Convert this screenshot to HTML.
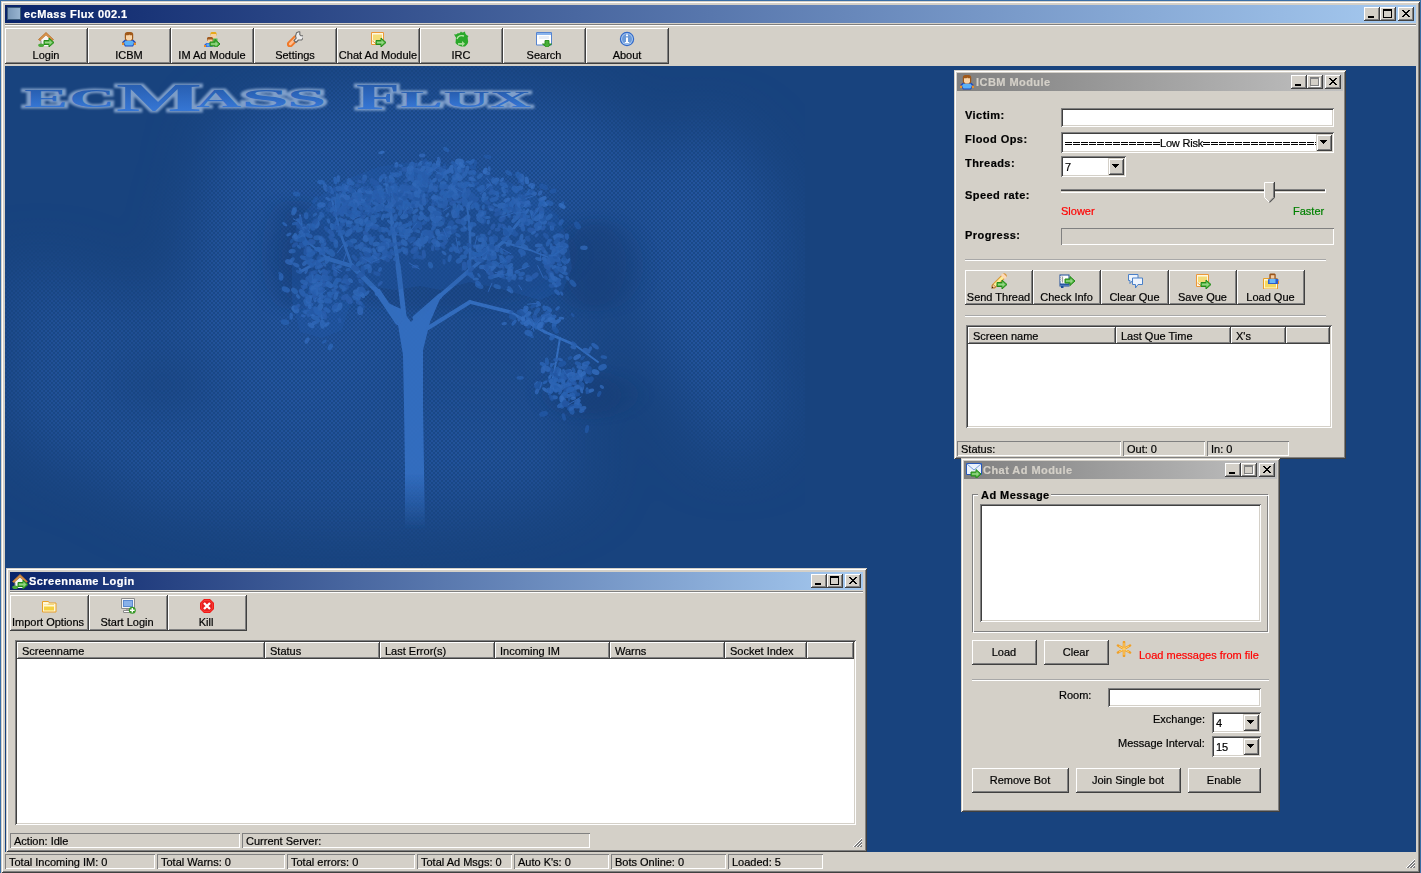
<!DOCTYPE html>
<html><head><meta charset="utf-8"><title>ecMass Flux 002.1</title>
<style>
html,body{margin:0;padding:0}
body{width:1421px;height:873px;overflow:hidden;position:relative;background:#3a6ea5;font-family:"Liberation Sans",sans-serif}
.a{position:absolute;box-sizing:border-box}
.t{position:absolute;font-size:11px;line-height:13px;white-space:nowrap;font-family:"Liberation Sans",sans-serif;will-change:transform;-webkit-text-stroke-width:0.2px}
.fr{background:#d4d0c8;box-shadow:inset 1px 1px #d4d0c8,inset -1px -1px #404040,inset 2px 2px #fff,inset -2px -2px #808080}
.rz{background:#d4d0c8;box-shadow:inset -1px -1px #404040,inset 1px 1px #fff,inset -2px -2px #808080}
.sk{background:#fff;box-shadow:inset 1px 1px #808080,inset -1px -1px #fff,inset 2px 2px #404040,inset -2px -2px #d4d0c8}
.pn{box-shadow:inset 1px 1px #808080,inset -1px -1px #fff}
i{position:absolute;display:block}
.mn{left:4px;top:9px;width:6px;height:2px;background:#000}
.mx{left:3px;top:2px;width:9px;height:9px;border:1px solid #000;border-top-width:2px;box-sizing:border-box}
.mxd{left:3px;top:2px;width:9px;height:9px;border:1px solid #808080;border-top-width:2px;box-sizing:border-box;box-shadow:1px 1px #fff}
.cl{position:absolute;left:0;top:0}
.arr{left:4px;top:6px;width:0;height:0;border-left:3.5px solid transparent;border-right:3.5px solid transparent;border-top:4px solid #000}
</style></head><body>
<div class="a fr" style="left:1px;top:1px;width:1419px;height:872px;"></div>
<div class="a " style="left:5px;top:5px;width:1411px;height:18px;background:linear-gradient(to right,#0a246a,#a6caf0)"></div>
<div class="a" style="left:7px;top:7px;width:14px;height:13px;background:#3a5a78"><div class="a" style="left:1px;top:1px;width:12px;height:11px;background:linear-gradient(to right,#7a98b8,#98b4d0)"></div></div>
<div class="t" style="left:24px;top:8px;font-weight:bold;letter-spacing:0.45px;color:#fff;">ecMass Flux 002.1</div>
<div class="a rz" style="left:1364px;top:7px;width:16px;height:14px;"><i class="mn"></i></div>
<div class="a rz" style="left:1380px;top:7px;width:16px;height:14px;"><i class="mx"></i></div>
<div class="a rz" style="left:1398px;top:7px;width:16px;height:14px;"><svg class="cl" width="16" height="14" shape-rendering="crispEdges"><path d="M4 3h2v1h-2zM10 3h2v1h-2zM5 4h2v1h-2zM9 4h2v1h-2zM6 5h4v1h-4zM7 6h2v1h-2zM6 7h4v1h-4zM5 8h2v1h-2zM9 8h2v1h-2zM4 9h2v1h-2zM10 9h2v1h-2z" fill="#000"/></svg></div>
<div class="a " style="left:5px;top:24px;width:1411px;height:1px;background:#808080"></div>
<div class="a " style="left:5px;top:25px;width:1411px;height:1px;background:#ffffff"></div>
<div class="a rz" style="left:5px;top:28px;width:83px;height:36px;"></div>
<svg class="a" style="left:38px;top:31px" width="16" height="16" viewBox="0 0 16 16"><path d="M0.5 8.5L8 1.5l7.5 7-1.6 1.2L8 4.3 2.1 9.7z" fill="#d8924a" stroke="#b8702a" stroke-width="0.8"/><path d="M3 9l5-4.5 5 4.5v6H3z" fill="#f6f6f6"/><path d="M3 9.5V15" stroke="#8a8a8a"/><ellipse cx="3.2" cy="14.2" rx="3" ry="1.8" fill="#4aa83a"/><path d="M6 9.5h5v-2.5l5 4.5-5 4.5v-2.5h-5z" fill="#4cb43c" stroke="#24891a" stroke-width="1" stroke-linejoin="round"/><path d="M7 10.7h4.5v-1.6l2.6 2.4-2.6 2.4v-1.6h-4.5z" fill="#a8dc98" opacity="0.8"/></svg>
<div class="t" style="left:5px;width:82px;text-align:center;top:49px;color:#000;">Login</div>
<div class="a rz" style="left:88px;top:28px;width:83px;height:36px;"></div>
<svg class="a" style="left:121px;top:31px" width="16" height="16" viewBox="0 0 16 16"><path d="M4 8.5L1 11.2v2.8h2.2L4 15.5h8l0.8-1.5H15v-2.8L12 8.5z" fill="#1a48c0"/><path d="M4.8 9.5L3 11.5 4.5 14.5h7l1.5-3-1.8-2z" fill="#5ab0f8"/><path d="M1 11.5h2.2v2.5H1zM12.8 11.5H15v2.5h-2.2z" fill="#e8902c"/><rect x="3.8" y="1" width="8.4" height="8.5" rx="2.6" fill="#a05818"/><path d="M5 4.2h2.5l0.8-0.8 0.5 0.8H11v3.8l-1.5 1.6h-3L5 8z" fill="#f8d4a8"/></svg>
<div class="t" style="left:88px;width:82px;text-align:center;top:49px;color:#000;">ICBM</div>
<div class="a rz" style="left:171px;top:28px;width:83px;height:36px;"></div>
<svg class="a" style="left:204px;top:31px" width="16" height="16" viewBox="0 0 16 16"><path d="M6.5 2l1-1h4l1 1v2.5h-6z" fill="#e8a818"/><path d="M7 3h5v4H7z" fill="#f6d0a0"/><path d="M6 7.5h7.5v6H6z" fill="#5ab84a"/><path d="M3 7l1-1h4l1 1v3H3z" fill="#a05a20"/><path d="M3.5 8.5h5v3.5h-5z" fill="#f6d0a0"/><path d="M0.5 13.5l2-1.5h6v4h-8z" fill="#2a5cd0"/><path d="M2.5 12.5h5.5v3H2.5z" fill="#5aa8f8"/><path d="M0 14h2v2H0z" fill="#e88a28"/><path d="M6 11h5v-2.5l5 4.5-5 4.5v-2.5h-5z" fill="#4cb43c" stroke="#24891a" stroke-width="1" stroke-linejoin="round"/><path d="M7 12.2h4.5v-1.6l2.6 2.4-2.6 2.4v-1.6h-4.5z" fill="#a8dc98" opacity="0.8"/></svg>
<div class="t" style="left:171px;width:82px;text-align:center;top:49px;color:#000;">IM Ad Module</div>
<div class="a rz" style="left:254px;top:28px;width:83px;height:36px;"></div>
<svg class="a" style="left:287px;top:31px" width="16" height="16" viewBox="0 0 16 16"><path d="M3 13.2l6-6" stroke="#f07828" stroke-width="6.2" stroke-linecap="round"/><path d="M3.2 13l5.6-5.6" stroke="#ffbf90" stroke-width="2.6" stroke-linecap="round"/><path d="M8.5 5L9.5 1.8 11.8 0.7h1v3l1 1h2.5v2.2L14.6 9h-3.2L9 11.5 7 9.5 9.2 7.2z" fill="#ececec" stroke="#6c6c6c" stroke-width="1.1" stroke-linejoin="round"/></svg>
<div class="t" style="left:254px;width:82px;text-align:center;top:49px;color:#000;">Settings</div>
<div class="a rz" style="left:337px;top:28px;width:83px;height:36px;"></div>
<svg class="a" style="left:370px;top:31px" width="16" height="16" viewBox="0 0 16 16"><path d="M1.5 1.5h12v12h-12z" fill="#fff8e0" stroke="#ec9838"/><path d="M3 3.5h9v6H3z" fill="#f4dc78"/><path d="M2.5 10l4 3" stroke="#ec9838"/><path d="M6 9.5h5v-2.5l5 4.5-5 4.5v-2.5h-5z" fill="#4cb43c" stroke="#24891a" stroke-width="1" stroke-linejoin="round"/><path d="M7 10.7h4.5v-1.6l2.6 2.4-2.6 2.4v-1.6h-4.5z" fill="#a8dc98" opacity="0.8"/></svg>
<div class="t" style="left:337px;width:82px;text-align:center;top:49px;color:#000;">Chat Ad Module</div>
<div class="a rz" style="left:420px;top:28px;width:83px;height:36px;"></div>
<svg class="a" style="left:453px;top:31px" width="16" height="16" viewBox="0 0 16 16"><path d="M3 6.5C2 5 1 4 1.5 3 3 4 4 3 5 2 6 3 7 2 8 0.5 9 2 10 1.5 12 0.5 12 3 13 4 15.5 5 14 6 15 8 15 9.5 15.5 11 15 13 12 15.5 9 16 5 15 2.5 12z" fill="#2aa82a"/><path d="M4 8C5 5 8 4 11 5" stroke="#b8e8a8" stroke-width="1.4" fill="none"/><path d="M5 12h4v-2l3 2.8-3 2.7v-1.8H5z" fill="#a8dc98"/></svg>
<div class="t" style="left:420px;width:82px;text-align:center;top:49px;color:#000;">IRC</div>
<div class="a rz" style="left:503px;top:28px;width:83px;height:36px;"></div>
<svg class="a" style="left:536px;top:31px" width="16" height="16" viewBox="0 0 16 16"><path d="M0.5 1.5h15v12.5H0.5z" fill="#fff" stroke="#5684d0"/><path d="M1 2h14v2H1z" fill="#8ab4ec"/><path d="M3 5h10v3H3z" fill="#e8eef8"/><path d="M9 9.5h4v3.5h2.5L11 16.5 6.5 13H9z" fill="#48b038" stroke="#24891a" stroke-width="0.9" stroke-linejoin="round"/></svg>
<div class="t" style="left:503px;width:82px;text-align:center;top:49px;color:#000;">Search</div>
<div class="a rz" style="left:586px;top:28px;width:83px;height:36px;"></div>
<svg class="a" style="left:619px;top:31px" width="16" height="16" viewBox="0 0 16 16"><circle cx="8" cy="8" r="7.2" fill="#3068c8"/><circle cx="8" cy="8" r="6" fill="#a8c8f0"/><circle cx="8" cy="8" r="5" fill="#6c9ad8"/><path d="M7 3.5h2v1.8H7zM7 6.5h2v4.5h1.2v1.3H5.8V11H7z" fill="#fff"/></svg>
<div class="t" style="left:586px;width:82px;text-align:center;top:49px;color:#000;">About</div>
<div class="a" id="mdi" style="left:5px;top:66px;width:1411px;height:786px;overflow:hidden;background:#18437e"><svg width="1411" height="786" viewBox="5 66 1411 786" style="position:absolute;left:0;top:0">
<defs>
<filter id="b30" x="-50%" y="-50%" width="200%" height="200%"><feGaussianBlur stdDeviation="30"/></filter>
<filter id="b15" x="-50%" y="-50%" width="200%" height="200%"><feGaussianBlur stdDeviation="14"/></filter>
<filter id="b4" x="-50%" y="-50%" width="200%" height="200%"><feGaussianBlur stdDeviation="12 5"/></filter>
<filter id="b1"><feGaussianBlur stdDeviation="0.6"/></filter>
<filter id="glow" x="-10%" y="-40%" width="120%" height="180%"><feGaussianBlur stdDeviation="1.3"/></filter>
<linearGradient id="trk" x1="0" y1="0" x2="0" y2="1"><stop offset="0" stop-color="#3570c4"/><stop offset="0.75" stop-color="#3470c4"/><stop offset="1" stop-color="#3470c4" stop-opacity="0"/></linearGradient>
<linearGradient id="lg" x1="0" y1="0" x2="0" y2="1"><stop offset="0" stop-color="#2356a4"/><stop offset="1" stop-color="#3a7ee0"/></linearGradient>
</defs>
<pattern id="chk" width="4" height="4" patternUnits="userSpaceOnUse" x="5" y="66"><rect width="4" height="4" fill="#1b4a8a"/><rect width="2" height="2" fill="#2557a2"/><rect x="2" y="2" width="2" height="2" fill="#2557a2"/></pattern>
<mask id="cm" maskUnits="userSpaceOnUse" x="5" y="66" width="1411" height="786"><g filter="url(#b30)" fill="#fff">
<ellipse cx="420" cy="150" rx="210" ry="70" opacity="0.85"/>
<ellipse cx="300" cy="270" rx="110" ry="160" opacity="0.9"/>
<ellipse cx="130" cy="385" rx="130" ry="90" opacity="0.75"/>
<ellipse cx="705" cy="260" rx="75" ry="130" opacity="0.9"/>
<ellipse cx="735" cy="400" rx="50" ry="55" opacity="0.7"/>
<ellipse cx="350" cy="470" rx="240" ry="55" opacity="0.7"/>
<ellipse cx="560" cy="180" rx="100" ry="70" opacity="0.7"/>
<ellipse cx="470" cy="340" rx="130" ry="130" opacity="0.6"/>
<ellipse cx="40" cy="300" rx="60" ry="30" opacity="0.6"/>
<ellipse cx="165" cy="385" rx="70" ry="50" fill="#000" opacity="0.8"/>
</g></mask>
<rect x="5" y="66" width="800" height="500" fill="url(#chk)" mask="url(#cm)"/>
<ellipse cx="295" cy="255" rx="25" ry="55" fill="#123a72" opacity="0.45" filter="url(#b4)"/>
<ellipse cx="595" cy="265" rx="40" ry="45" fill="#123a72" opacity="0.4" filter="url(#b4)"/>
<ellipse cx="430" cy="255" rx="140" ry="55" fill="#123a72" opacity="0.3" filter="url(#b4)"/>
<ellipse cx="590" cy="395" rx="40" ry="22" fill="#123a72" opacity="0.45" filter="url(#b4)"/>
<g filter="url(#b1)"><g opacity="0.9"><path d="M405 530 L405 470 L404 405 L403 355 L398 325 L386 302 L401 309 L411 322 L421 312 L440 299 L430 322 L423 350 L423 405 L424 470 L425 530 Z" fill="url(#trk)"/><path d="M398 322L378 292" stroke="#3570c2" stroke-width="6.0" stroke-linecap="round"/><path d="M378 292L352 266" stroke="#3570c2" stroke-width="5.0" stroke-linecap="round"/><path d="M352 266L325 258" stroke="#3570c2" stroke-width="4.0" stroke-linecap="round"/><path d="M325 258L300 272" stroke="#3570c2" stroke-width="3.0" stroke-linecap="round"/><path d="M404 316L398 265" stroke="#3570c2" stroke-width="5.0" stroke-linecap="round"/><path d="M398 265L392 222" stroke="#3570c2" stroke-width="4.0" stroke-linecap="round"/><path d="M392 222L386 178" stroke="#3570c2" stroke-width="3.0" stroke-linecap="round"/><path d="M415 318L440 296" stroke="#3570c2" stroke-width="5.0" stroke-linecap="round"/><path d="M440 296L470 270" stroke="#3570c2" stroke-width="4.2" stroke-linecap="round"/><path d="M470 270L503 242" stroke="#3570c2" stroke-width="3.5" stroke-linecap="round"/><path d="M503 242L528 210" stroke="#3570c2" stroke-width="2.8" stroke-linecap="round"/><path d="M428 328L470 302" stroke="#3570c2" stroke-width="4.0" stroke-linecap="round"/><path d="M470 302L510 312" stroke="#3570c2" stroke-width="3.5" stroke-linecap="round"/><path d="M510 312L545 332" stroke="#3570c2" stroke-width="3.0" stroke-linecap="round"/><path d="M545 332L575 345" stroke="#3570c2" stroke-width="2.5" stroke-linecap="round"/><path d="M575 345L598 362" stroke="#3570c2" stroke-width="2.0" stroke-linecap="round"/><path d="M560 338L556 362" stroke="#3570c2" stroke-width="2.0" stroke-linecap="round"/><path d="M556 362L550 392" stroke="#3570c2" stroke-width="1.8" stroke-linecap="round"/><path d="M352 266L340 232" stroke="#3570c2" stroke-width="2.5" stroke-linecap="round"/><path d="M340 232L332 200" stroke="#3570c2" stroke-width="2.0" stroke-linecap="round"/><path d="M470 270L470 230" stroke="#3570c2" stroke-width="2.5" stroke-linecap="round"/><path d="M470 230L465 190" stroke="#3570c2" stroke-width="2.0" stroke-linecap="round"/><path d="M503 242L530 250" stroke="#3570c2" stroke-width="2.0" stroke-linecap="round"/><path d="M530 250L560 262" stroke="#3570c2" stroke-width="1.6" stroke-linecap="round"/><path d="M330 260L305 240" stroke="#3570c2" stroke-width="2.0" stroke-linecap="round"/><path d="M305 240L300 215" stroke="#3570c2" stroke-width="1.6" stroke-linecap="round"/><ellipse cx="414.3" cy="243.7" rx="2.6" ry="1.5" transform="rotate(117 414.3 243.7)" fill="#2a60b0" opacity="0.85"/><ellipse cx="377.4" cy="225.8" rx="2.6" ry="1.4" transform="rotate(39 377.4 225.8)" fill="#3068ba" opacity="0.85"/><ellipse cx="439.8" cy="244.4" rx="2.7" ry="1.4" transform="rotate(149 439.8 244.4)" fill="#2458a6" opacity="0.85"/><ellipse cx="447.8" cy="233.3" rx="4.5" ry="2.1" transform="rotate(71 447.8 233.3)" fill="#3068ba" opacity="0.85"/><ellipse cx="416.9" cy="244.1" rx="3.1" ry="2.0" transform="rotate(21 416.9 244.1)" fill="#3068ba" opacity="0.85"/><ellipse cx="443.3" cy="246.8" rx="2.6" ry="1.6" transform="rotate(34 443.3 246.8)" fill="#2458a6" opacity="0.85"/><ellipse cx="434.2" cy="240.8" rx="3.3" ry="1.8" transform="rotate(122 434.2 240.8)" fill="#2458a6" opacity="0.85"/><ellipse cx="438.8" cy="233.1" rx="2.8" ry="1.8" transform="rotate(45 438.8 233.1)" fill="#2d66b8" opacity="0.85"/><ellipse cx="395.6" cy="231.8" rx="4.0" ry="2.1" transform="rotate(158 395.6 231.8)" fill="#2d66b8" opacity="0.85"/><ellipse cx="437.2" cy="245.9" rx="2.7" ry="1.6" transform="rotate(136 437.2 245.9)" fill="#2d66b8" opacity="0.85"/><ellipse cx="428.7" cy="236.9" rx="4.1" ry="2.7" transform="rotate(100 428.7 236.9)" fill="#2a60b0" opacity="0.85"/><ellipse cx="409.9" cy="223.8" rx="3.4" ry="2.2" transform="rotate(104 409.9 223.8)" fill="#2a60b0" opacity="0.85"/><ellipse cx="387.3" cy="240.7" rx="3.9" ry="2.4" transform="rotate(11 387.3 240.7)" fill="#3570c2" opacity="0.85"/><ellipse cx="415.2" cy="248.8" rx="2.4" ry="1.4" transform="rotate(120 415.2 248.8)" fill="#3068ba" opacity="0.85"/><ellipse cx="400.0" cy="229.6" rx="3.0" ry="1.9" transform="rotate(39 400.0 229.6)" fill="#3570c2" opacity="0.85"/><ellipse cx="384.9" cy="252.4" rx="3.4" ry="2.0" transform="rotate(15 384.9 252.4)" fill="#3068ba" opacity="0.85"/><ellipse cx="438.9" cy="217.7" rx="3.3" ry="1.8" transform="rotate(50 438.9 217.7)" fill="#3570c2" opacity="0.85"/><ellipse cx="432.4" cy="236.3" rx="2.9" ry="1.5" transform="rotate(32 432.4 236.3)" fill="#3570c2" opacity="0.85"/><ellipse cx="426.9" cy="231.8" rx="2.7" ry="1.6" transform="rotate(51 426.9 231.8)" fill="#2458a6" opacity="0.85"/><ellipse cx="369.3" cy="226.8" rx="3.5" ry="2.1" transform="rotate(124 369.3 226.8)" fill="#2d66b8" opacity="0.85"/><ellipse cx="376.3" cy="244.1" rx="3.9" ry="2.3" transform="rotate(171 376.3 244.1)" fill="#3570c2" opacity="0.85"/><ellipse cx="411.6" cy="241.1" rx="2.5" ry="1.2" transform="rotate(114 411.6 241.1)" fill="#3068ba" opacity="0.85"/><ellipse cx="409.9" cy="240.0" rx="2.6" ry="1.6" transform="rotate(108 409.9 240.0)" fill="#2458a6" opacity="0.85"/><ellipse cx="437.1" cy="244.3" rx="4.3" ry="2.6" transform="rotate(5 437.1 244.3)" fill="#3068ba" opacity="0.85"/><ellipse cx="382.9" cy="217.1" rx="3.4" ry="1.6" transform="rotate(108 382.9 217.1)" fill="#3570c2" opacity="0.85"/><ellipse cx="445.1" cy="237.5" rx="2.6" ry="1.2" transform="rotate(87 445.1 237.5)" fill="#2a60b0" opacity="0.85"/><ellipse cx="418.5" cy="225.2" rx="3.5" ry="1.8" transform="rotate(125 418.5 225.2)" fill="#2458a6" opacity="0.85"/><ellipse cx="397.9" cy="251.1" rx="4.1" ry="2.1" transform="rotate(165 397.9 251.1)" fill="#2d66b8" opacity="0.85"/><ellipse cx="414.2" cy="229.8" rx="2.8" ry="1.8" transform="rotate(66 414.2 229.8)" fill="#2458a6" opacity="0.85"/><ellipse cx="394.4" cy="234.6" rx="3.7" ry="2.4" transform="rotate(115 394.4 234.6)" fill="#3068ba" opacity="0.85"/><ellipse cx="434.3" cy="218.6" rx="2.9" ry="1.7" transform="rotate(133 434.3 218.6)" fill="#2a60b0" opacity="0.85"/><ellipse cx="411.9" cy="204.4" rx="3.4" ry="1.7" transform="rotate(142 411.9 204.4)" fill="#2458a6" opacity="0.85"/><ellipse cx="443.5" cy="234.7" rx="4.6" ry="3.2" transform="rotate(169 443.5 234.7)" fill="#2a60b0" opacity="0.85"/><ellipse cx="429.1" cy="240.5" rx="3.1" ry="1.8" transform="rotate(85 429.1 240.5)" fill="#2458a6" opacity="0.85"/><ellipse cx="433.8" cy="227.2" rx="4.2" ry="2.0" transform="rotate(118 433.8 227.2)" fill="#2d66b8" opacity="0.85"/><ellipse cx="453.0" cy="227.5" rx="3.5" ry="1.7" transform="rotate(135 453.0 227.5)" fill="#2a60b0" opacity="0.85"/><ellipse cx="466.3" cy="252.0" rx="3.4" ry="2.2" transform="rotate(130 466.3 252.0)" fill="#2d66b8" opacity="0.85"/><ellipse cx="417.8" cy="231.2" rx="2.7" ry="1.8" transform="rotate(23 417.8 231.2)" fill="#3068ba" opacity="0.85"/><ellipse cx="397.0" cy="228.3" rx="4.5" ry="2.2" transform="rotate(85 397.0 228.3)" fill="#2458a6" opacity="0.85"/><ellipse cx="422.6" cy="239.4" rx="3.8" ry="2.2" transform="rotate(175 422.6 239.4)" fill="#3068ba" opacity="0.85"/><ellipse cx="378.5" cy="247.2" rx="2.9" ry="1.5" transform="rotate(149 378.5 247.2)" fill="#2a60b0" opacity="0.85"/><ellipse cx="382.0" cy="237.9" rx="3.6" ry="2.4" transform="rotate(59 382.0 237.9)" fill="#2d66b8" opacity="0.85"/><ellipse cx="437.7" cy="232.4" rx="3.7" ry="2.5" transform="rotate(82 437.7 232.4)" fill="#3570c2" opacity="0.85"/><ellipse cx="441.4" cy="217.7" rx="2.7" ry="1.6" transform="rotate(24 441.4 217.7)" fill="#3570c2" opacity="0.85"/><ellipse cx="425.1" cy="222.9" rx="2.7" ry="1.3" transform="rotate(140 425.1 222.9)" fill="#2458a6" opacity="0.85"/><ellipse cx="415.6" cy="223.9" rx="3.5" ry="2.1" transform="rotate(59 415.6 223.9)" fill="#2d66b8" opacity="0.85"/><ellipse cx="425.7" cy="235.4" rx="2.5" ry="1.2" transform="rotate(34 425.7 235.4)" fill="#3570c2" opacity="0.85"/><ellipse cx="385.0" cy="230.8" rx="3.4" ry="2.0" transform="rotate(164 385.0 230.8)" fill="#2458a6" opacity="0.85"/><ellipse cx="408.3" cy="233.4" rx="3.5" ry="2.3" transform="rotate(50 408.3 233.4)" fill="#2458a6" opacity="0.85"/><ellipse cx="452.4" cy="231.8" rx="4.5" ry="2.3" transform="rotate(158 452.4 231.8)" fill="#2458a6" opacity="0.85"/><ellipse cx="431.8" cy="233.3" rx="3.3" ry="1.8" transform="rotate(81 431.8 233.3)" fill="#2a60b0" opacity="0.85"/><ellipse cx="434.9" cy="241.7" rx="3.9" ry="2.5" transform="rotate(13 434.9 241.7)" fill="#3068ba" opacity="0.85"/><ellipse cx="449.9" cy="232.0" rx="3.0" ry="1.4" transform="rotate(66 449.9 232.0)" fill="#3570c2" opacity="0.85"/><ellipse cx="430.5" cy="265.1" rx="3.5" ry="2.4" transform="rotate(72 430.5 265.1)" fill="#3068ba" opacity="0.85"/><ellipse cx="432.6" cy="248.1" rx="3.1" ry="1.6" transform="rotate(93 432.6 248.1)" fill="#2a60b0" opacity="0.85"/><ellipse cx="437.9" cy="243.9" rx="3.4" ry="2.1" transform="rotate(61 437.9 243.9)" fill="#3570c2" opacity="0.85"/><ellipse cx="404.7" cy="251.7" rx="2.5" ry="1.8" transform="rotate(92 404.7 251.7)" fill="#3068ba" opacity="0.85"/><ellipse cx="430.4" cy="237.1" rx="2.5" ry="1.6" transform="rotate(48 430.4 237.1)" fill="#2a60b0" opacity="0.85"/><ellipse cx="421.5" cy="217.3" rx="3.9" ry="2.7" transform="rotate(153 421.5 217.3)" fill="#3570c2" opacity="0.85"/><ellipse cx="449.7" cy="258.3" rx="3.9" ry="1.9" transform="rotate(103 449.7 258.3)" fill="#2d66b8" opacity="0.85"/><ellipse cx="424.4" cy="231.2" rx="3.0" ry="1.4" transform="rotate(161 424.4 231.2)" fill="#2d66b8" opacity="0.85"/><ellipse cx="423.0" cy="233.6" rx="2.5" ry="1.7" transform="rotate(154 423.0 233.6)" fill="#3570c2" opacity="0.85"/><ellipse cx="491.8" cy="240.6" rx="4.4" ry="2.7" transform="rotate(75 491.8 240.6)" fill="#2d66b8" opacity="0.85"/><ellipse cx="403.7" cy="236.6" rx="2.8" ry="1.3" transform="rotate(20 403.7 236.6)" fill="#3068ba" opacity="0.85"/><ellipse cx="448.7" cy="231.5" rx="2.9" ry="1.6" transform="rotate(96 448.7 231.5)" fill="#3068ba" opacity="0.85"/><ellipse cx="414.8" cy="258.0" rx="2.5" ry="1.1" transform="rotate(179 414.8 258.0)" fill="#2458a6" opacity="0.85"/><ellipse cx="406.2" cy="235.7" rx="4.5" ry="2.1" transform="rotate(85 406.2 235.7)" fill="#3570c2" opacity="0.85"/><ellipse cx="404.4" cy="226.3" rx="4.5" ry="2.4" transform="rotate(160 404.4 226.3)" fill="#3068ba" opacity="0.85"/><ellipse cx="440.4" cy="236.9" rx="4.0" ry="2.4" transform="rotate(150 440.4 236.9)" fill="#3570c2" opacity="0.85"/><ellipse cx="483.3" cy="235.9" rx="2.4" ry="1.5" transform="rotate(151 483.3 235.9)" fill="#2a60b0" opacity="0.85"/><ellipse cx="413.1" cy="239.6" rx="3.2" ry="1.9" transform="rotate(120 413.1 239.6)" fill="#2a60b0" opacity="0.85"/><ellipse cx="392.0" cy="228.0" rx="2.8" ry="1.5" transform="rotate(8 392.0 228.0)" fill="#2d66b8" opacity="0.85"/><ellipse cx="415.2" cy="266.5" rx="3.6" ry="1.8" transform="rotate(175 415.2 266.5)" fill="#2a60b0" opacity="0.85"/><ellipse cx="422.9" cy="245.0" rx="2.6" ry="1.3" transform="rotate(60 422.9 245.0)" fill="#3068ba" opacity="0.85"/><ellipse cx="420.4" cy="257.4" rx="4.2" ry="2.0" transform="rotate(16 420.4 257.4)" fill="#2458a6" opacity="0.85"/><ellipse cx="424.6" cy="238.6" rx="2.9" ry="1.7" transform="rotate(55 424.6 238.6)" fill="#2458a6" opacity="0.85"/><ellipse cx="427.9" cy="232.8" rx="4.1" ry="2.5" transform="rotate(161 427.9 232.8)" fill="#2a60b0" opacity="0.85"/><ellipse cx="415.2" cy="225.1" rx="3.8" ry="1.8" transform="rotate(51 415.2 225.1)" fill="#2458a6" opacity="0.85"/><ellipse cx="394.6" cy="224.9" rx="2.7" ry="1.6" transform="rotate(146 394.6 224.9)" fill="#2458a6" opacity="0.85"/><ellipse cx="382.7" cy="229.4" rx="3.9" ry="2.5" transform="rotate(3 382.7 229.4)" fill="#3068ba" opacity="0.85"/><ellipse cx="425.6" cy="239.7" rx="4.5" ry="2.5" transform="rotate(115 425.6 239.7)" fill="#3570c2" opacity="0.85"/><ellipse cx="390.6" cy="232.3" rx="3.9" ry="2.2" transform="rotate(113 390.6 232.3)" fill="#2d66b8" opacity="0.85"/><ellipse cx="411.8" cy="239.1" rx="4.4" ry="2.1" transform="rotate(168 411.8 239.1)" fill="#2458a6" opacity="0.85"/><ellipse cx="453.5" cy="245.4" rx="2.6" ry="1.3" transform="rotate(45 453.5 245.4)" fill="#3068ba" opacity="0.85"/><ellipse cx="423.9" cy="254.1" rx="4.3" ry="2.0" transform="rotate(83 423.9 254.1)" fill="#2a60b0" opacity="0.85"/><ellipse cx="423.3" cy="222.6" rx="2.6" ry="1.3" transform="rotate(116 423.3 222.6)" fill="#2a60b0" opacity="0.85"/><ellipse cx="400.0" cy="224.0" rx="2.7" ry="1.5" transform="rotate(112 400.0 224.0)" fill="#3570c2" opacity="0.85"/><ellipse cx="416.1" cy="254.6" rx="3.9" ry="2.0" transform="rotate(125 416.1 254.6)" fill="#2458a6" opacity="0.85"/><ellipse cx="414.4" cy="250.2" rx="4.6" ry="2.7" transform="rotate(138 414.4 250.2)" fill="#2a60b0" opacity="0.85"/><ellipse cx="472.1" cy="234.4" rx="3.4" ry="2.2" transform="rotate(3 472.1 234.4)" fill="#3570c2" opacity="0.85"/><ellipse cx="442.1" cy="237.6" rx="4.4" ry="2.1" transform="rotate(165 442.1 237.6)" fill="#2d66b8" opacity="0.85"/><ellipse cx="437.2" cy="248.6" rx="2.7" ry="1.8" transform="rotate(171 437.2 248.6)" fill="#2458a6" opacity="0.85"/><ellipse cx="418.0" cy="243.4" rx="3.5" ry="2.3" transform="rotate(66 418.0 243.4)" fill="#3570c2" opacity="0.85"/><ellipse cx="421.9" cy="238.1" rx="3.4" ry="1.8" transform="rotate(89 421.9 238.1)" fill="#3068ba" opacity="0.85"/><ellipse cx="401.2" cy="243.5" rx="3.1" ry="1.7" transform="rotate(22 401.2 243.5)" fill="#2a60b0" opacity="0.85"/><ellipse cx="426.0" cy="233.2" rx="4.0" ry="2.7" transform="rotate(167 426.0 233.2)" fill="#2a60b0" opacity="0.85"/><ellipse cx="419.8" cy="242.1" rx="4.3" ry="2.0" transform="rotate(70 419.8 242.1)" fill="#3570c2" opacity="0.85"/><ellipse cx="421.6" cy="216.0" rx="2.5" ry="1.5" transform="rotate(51 421.6 216.0)" fill="#3068ba" opacity="0.85"/><ellipse cx="420.1" cy="246.8" rx="2.8" ry="1.5" transform="rotate(92 420.1 246.8)" fill="#3570c2" opacity="0.85"/><ellipse cx="450.6" cy="224.4" rx="4.4" ry="3.0" transform="rotate(114 450.6 224.4)" fill="#2458a6" opacity="0.85"/><ellipse cx="422.6" cy="242.4" rx="3.3" ry="2.0" transform="rotate(168 422.6 242.4)" fill="#3068ba" opacity="0.85"/><ellipse cx="408.7" cy="230.8" rx="4.4" ry="2.1" transform="rotate(9 408.7 230.8)" fill="#3570c2" opacity="0.85"/><ellipse cx="404.3" cy="242.6" rx="4.0" ry="2.5" transform="rotate(46 404.3 242.6)" fill="#3570c2" opacity="0.85"/><ellipse cx="409.4" cy="230.1" rx="3.3" ry="1.6" transform="rotate(100 409.4 230.1)" fill="#3068ba" opacity="0.85"/><ellipse cx="443.5" cy="244.0" rx="3.6" ry="2.0" transform="rotate(146 443.5 244.0)" fill="#2a60b0" opacity="0.85"/><ellipse cx="444.5" cy="237.7" rx="2.8" ry="1.3" transform="rotate(25 444.5 237.7)" fill="#2a60b0" opacity="0.85"/><ellipse cx="401.6" cy="234.6" rx="4.2" ry="2.1" transform="rotate(66 401.6 234.6)" fill="#2d66b8" opacity="0.85"/><ellipse cx="420.0" cy="226.4" rx="3.6" ry="1.9" transform="rotate(74 420.0 226.4)" fill="#2a60b0" opacity="0.85"/><ellipse cx="420.3" cy="224.8" rx="3.2" ry="2.0" transform="rotate(103 420.3 224.8)" fill="#2458a6" opacity="0.85"/><ellipse cx="389.4" cy="221.8" rx="3.0" ry="1.5" transform="rotate(39 389.4 221.8)" fill="#3570c2" opacity="0.85"/><ellipse cx="490.9" cy="266.1" rx="4.2" ry="2.9" transform="rotate(56 490.9 266.1)" fill="#3068ba" opacity="0.85"/><ellipse cx="521.6" cy="274.2" rx="3.4" ry="2.1" transform="rotate(161 521.6 274.2)" fill="#2d66b8" opacity="0.85"/><ellipse cx="529.0" cy="279.2" rx="3.6" ry="2.0" transform="rotate(167 529.0 279.2)" fill="#3570c2" opacity="0.85"/><ellipse cx="500.1" cy="275.4" rx="3.5" ry="2.2" transform="rotate(28 500.1 275.4)" fill="#3570c2" opacity="0.85"/><ellipse cx="520.9" cy="278.2" rx="2.7" ry="1.6" transform="rotate(0 520.9 278.2)" fill="#2d66b8" opacity="0.85"/><ellipse cx="492.7" cy="267.3" rx="3.0" ry="1.8" transform="rotate(23 492.7 267.3)" fill="#2d66b8" opacity="0.85"/><ellipse cx="509.6" cy="275.5" rx="2.8" ry="1.5" transform="rotate(170 509.6 275.5)" fill="#2458a6" opacity="0.85"/><ellipse cx="517.4" cy="272.1" rx="3.0" ry="1.6" transform="rotate(179 517.4 272.1)" fill="#3068ba" opacity="0.85"/><ellipse cx="489.9" cy="272.8" rx="4.5" ry="2.8" transform="rotate(44 489.9 272.8)" fill="#2a60b0" opacity="0.85"/><ellipse cx="508.6" cy="273.6" rx="3.8" ry="1.8" transform="rotate(159 508.6 273.6)" fill="#3068ba" opacity="0.85"/><ellipse cx="484.2" cy="258.2" rx="2.5" ry="1.3" transform="rotate(41 484.2 258.2)" fill="#3570c2" opacity="0.85"/><ellipse cx="490.9" cy="277.4" rx="3.0" ry="2.0" transform="rotate(1 490.9 277.4)" fill="#2d66b8" opacity="0.85"/><ellipse cx="510.3" cy="289.8" rx="4.2" ry="2.1" transform="rotate(56 510.3 289.8)" fill="#3068ba" opacity="0.85"/><ellipse cx="497.2" cy="286.6" rx="3.8" ry="2.3" transform="rotate(20 497.2 286.6)" fill="#3068ba" opacity="0.85"/><ellipse cx="469.4" cy="273.4" rx="3.7" ry="2.5" transform="rotate(10 469.4 273.4)" fill="#2d66b8" opacity="0.85"/><ellipse cx="508.7" cy="290.4" rx="2.5" ry="1.2" transform="rotate(26 508.7 290.4)" fill="#3570c2" opacity="0.85"/><ellipse cx="479.0" cy="275.4" rx="2.6" ry="1.2" transform="rotate(57 479.0 275.4)" fill="#3068ba" opacity="0.85"/><ellipse cx="495.7" cy="275.9" rx="4.0" ry="1.9" transform="rotate(168 495.7 275.9)" fill="#3570c2" opacity="0.85"/><ellipse cx="521.5" cy="254.8" rx="2.6" ry="1.2" transform="rotate(80 521.5 254.8)" fill="#2d66b8" opacity="0.85"/><ellipse cx="479.2" cy="286.0" rx="4.5" ry="2.3" transform="rotate(22 479.2 286.0)" fill="#2a60b0" opacity="0.85"/><ellipse cx="501.4" cy="266.0" rx="2.6" ry="1.6" transform="rotate(145 501.4 266.0)" fill="#3068ba" opacity="0.85"/><ellipse cx="478.1" cy="283.3" rx="3.2" ry="2.2" transform="rotate(35 478.1 283.3)" fill="#2d66b8" opacity="0.85"/><ellipse cx="492.8" cy="268.1" rx="3.3" ry="1.8" transform="rotate(113 492.8 268.1)" fill="#3570c2" opacity="0.85"/><ellipse cx="529.1" cy="278.0" rx="4.0" ry="2.7" transform="rotate(46 529.1 278.0)" fill="#2a60b0" opacity="0.85"/><ellipse cx="491.8" cy="276.8" rx="2.5" ry="1.6" transform="rotate(172 491.8 276.8)" fill="#2a60b0" opacity="0.85"/><ellipse cx="510.5" cy="269.3" rx="3.7" ry="2.4" transform="rotate(130 510.5 269.3)" fill="#2d66b8" opacity="0.85"/><ellipse cx="510.1" cy="272.8" rx="4.5" ry="3.1" transform="rotate(86 510.1 272.8)" fill="#3570c2" opacity="0.85"/><ellipse cx="507.7" cy="257.0" rx="2.7" ry="1.5" transform="rotate(147 507.7 257.0)" fill="#2d66b8" opacity="0.85"/><ellipse cx="507.4" cy="261.2" rx="4.1" ry="2.5" transform="rotate(148 507.4 261.2)" fill="#2a60b0" opacity="0.85"/><ellipse cx="510.0" cy="266.0" rx="3.7" ry="2.1" transform="rotate(141 510.0 266.0)" fill="#3570c2" opacity="0.85"/><ellipse cx="500.2" cy="266.7" rx="2.5" ry="1.5" transform="rotate(12 500.2 266.7)" fill="#2a60b0" opacity="0.85"/><ellipse cx="507.9" cy="278.3" rx="2.6" ry="1.6" transform="rotate(19 507.9 278.3)" fill="#3068ba" opacity="0.85"/><ellipse cx="513.5" cy="276.7" rx="3.4" ry="1.7" transform="rotate(128 513.5 276.7)" fill="#3570c2" opacity="0.85"/><ellipse cx="471.4" cy="275.6" rx="3.6" ry="2.3" transform="rotate(42 471.4 275.6)" fill="#2d66b8" opacity="0.85"/><ellipse cx="502.2" cy="266.3" rx="3.0" ry="1.5" transform="rotate(50 502.2 266.3)" fill="#2a60b0" opacity="0.85"/><ellipse cx="503.3" cy="277.0" rx="2.7" ry="1.8" transform="rotate(44 503.3 277.0)" fill="#2458a6" opacity="0.85"/><ellipse cx="501.9" cy="274.4" rx="2.9" ry="1.7" transform="rotate(45 501.9 274.4)" fill="#2d66b8" opacity="0.85"/><ellipse cx="475.5" cy="254.4" rx="3.4" ry="2.3" transform="rotate(18 475.5 254.4)" fill="#3570c2" opacity="0.85"/><ellipse cx="503.5" cy="271.0" rx="2.7" ry="1.3" transform="rotate(53 503.5 271.0)" fill="#2458a6" opacity="0.85"/><ellipse cx="501.9" cy="274.6" rx="2.8" ry="1.7" transform="rotate(92 501.9 274.6)" fill="#2d66b8" opacity="0.85"/><ellipse cx="514.8" cy="277.8" rx="2.9" ry="1.6" transform="rotate(112 514.8 277.8)" fill="#3068ba" opacity="0.85"/><ellipse cx="557.1" cy="280.1" rx="4.0" ry="2.7" transform="rotate(7 557.1 280.1)" fill="#2d66b8" opacity="0.85"/><ellipse cx="506.0" cy="265.5" rx="3.8" ry="1.8" transform="rotate(67 506.0 265.5)" fill="#2d66b8" opacity="0.85"/><ellipse cx="505.0" cy="263.5" rx="2.6" ry="1.4" transform="rotate(11 505.0 263.5)" fill="#2458a6" opacity="0.85"/><ellipse cx="509.8" cy="279.1" rx="3.3" ry="1.7" transform="rotate(118 509.8 279.1)" fill="#2a60b0" opacity="0.85"/><ellipse cx="492.8" cy="265.7" rx="4.0" ry="2.7" transform="rotate(9 492.8 265.7)" fill="#3570c2" opacity="0.85"/><ellipse cx="475.8" cy="279.0" rx="3.2" ry="1.6" transform="rotate(179 475.8 279.0)" fill="#3570c2" opacity="0.85"/><ellipse cx="500.4" cy="272.7" rx="3.3" ry="2.2" transform="rotate(162 500.4 272.7)" fill="#3570c2" opacity="0.85"/><ellipse cx="488.2" cy="268.9" rx="2.7" ry="1.2" transform="rotate(139 488.2 268.9)" fill="#3068ba" opacity="0.85"/><ellipse cx="480.5" cy="260.1" rx="3.8" ry="2.0" transform="rotate(16 480.5 260.1)" fill="#2458a6" opacity="0.85"/><ellipse cx="355.7" cy="297.7" rx="2.8" ry="1.3" transform="rotate(29 355.7 297.7)" fill="#3570c2" opacity="0.85"/><ellipse cx="336.8" cy="292.8" rx="2.8" ry="1.4" transform="rotate(174 336.8 292.8)" fill="#2d66b8" opacity="0.85"/><ellipse cx="361.5" cy="290.8" rx="4.4" ry="2.4" transform="rotate(10 361.5 290.8)" fill="#2458a6" opacity="0.85"/><ellipse cx="345.3" cy="278.4" rx="4.3" ry="2.6" transform="rotate(115 345.3 278.4)" fill="#2458a6" opacity="0.85"/><ellipse cx="361.0" cy="281.2" rx="2.9" ry="1.6" transform="rotate(33 361.0 281.2)" fill="#2458a6" opacity="0.85"/><ellipse cx="356.4" cy="297.5" rx="4.5" ry="3.0" transform="rotate(27 356.4 297.5)" fill="#3068ba" opacity="0.85"/><ellipse cx="362.4" cy="294.3" rx="2.5" ry="1.6" transform="rotate(136 362.4 294.3)" fill="#2d66b8" opacity="0.85"/><ellipse cx="344.9" cy="296.9" rx="4.1" ry="2.5" transform="rotate(153 344.9 296.9)" fill="#2a60b0" opacity="0.85"/><ellipse cx="344.3" cy="288.3" rx="3.4" ry="1.9" transform="rotate(119 344.3 288.3)" fill="#2d66b8" opacity="0.85"/><ellipse cx="376.6" cy="292.5" rx="3.4" ry="2.0" transform="rotate(84 376.6 292.5)" fill="#3570c2" opacity="0.85"/><ellipse cx="359.9" cy="281.1" rx="2.5" ry="1.4" transform="rotate(72 359.9 281.1)" fill="#2a60b0" opacity="0.85"/><ellipse cx="359.6" cy="296.1" rx="2.5" ry="1.5" transform="rotate(92 359.6 296.1)" fill="#2d66b8" opacity="0.85"/><ellipse cx="358.4" cy="289.1" rx="2.6" ry="1.6" transform="rotate(130 358.4 289.1)" fill="#3570c2" opacity="0.85"/><ellipse cx="343.6" cy="282.0" rx="2.5" ry="1.5" transform="rotate(5 343.6 282.0)" fill="#2d66b8" opacity="0.85"/><ellipse cx="360.2" cy="310.6" rx="4.5" ry="3.1" transform="rotate(89 360.2 310.6)" fill="#3068ba" opacity="0.85"/><ellipse cx="346.8" cy="281.7" rx="4.2" ry="2.6" transform="rotate(40 346.8 281.7)" fill="#2a60b0" opacity="0.85"/><ellipse cx="361.7" cy="304.5" rx="4.2" ry="2.0" transform="rotate(49 361.7 304.5)" fill="#2458a6" opacity="0.85"/><ellipse cx="361.4" cy="290.2" rx="3.8" ry="1.9" transform="rotate(107 361.4 290.2)" fill="#2a60b0" opacity="0.85"/><ellipse cx="357.2" cy="293.0" rx="4.5" ry="2.8" transform="rotate(29 357.2 293.0)" fill="#3570c2" opacity="0.85"/><ellipse cx="359.2" cy="302.7" rx="3.6" ry="2.2" transform="rotate(21 359.2 302.7)" fill="#2a60b0" opacity="0.85"/><ellipse cx="361.0" cy="290.4" rx="3.9" ry="2.6" transform="rotate(94 361.0 290.4)" fill="#2a60b0" opacity="0.85"/><ellipse cx="363.8" cy="291.6" rx="4.2" ry="2.1" transform="rotate(71 363.8 291.6)" fill="#2a60b0" opacity="0.85"/><ellipse cx="345.0" cy="288.9" rx="3.4" ry="1.7" transform="rotate(138 345.0 288.9)" fill="#2d66b8" opacity="0.85"/><ellipse cx="349.1" cy="300.1" rx="4.5" ry="3.0" transform="rotate(56 349.1 300.1)" fill="#2a60b0" opacity="0.85"/><ellipse cx="350.5" cy="280.5" rx="3.0" ry="1.8" transform="rotate(40 350.5 280.5)" fill="#3570c2" opacity="0.85"/><ellipse cx="334.2" cy="290.8" rx="2.9" ry="1.8" transform="rotate(24 334.2 290.8)" fill="#2d66b8" opacity="0.85"/><ellipse cx="362.2" cy="295.0" rx="3.6" ry="2.1" transform="rotate(55 362.2 295.0)" fill="#3570c2" opacity="0.85"/><ellipse cx="342.3" cy="287.3" rx="3.8" ry="2.1" transform="rotate(37 342.3 287.3)" fill="#3068ba" opacity="0.85"/><ellipse cx="367.0" cy="293.1" rx="3.4" ry="1.6" transform="rotate(127 367.0 293.1)" fill="#3068ba" opacity="0.85"/><ellipse cx="362.1" cy="283.2" rx="3.0" ry="1.4" transform="rotate(72 362.1 283.2)" fill="#2458a6" opacity="0.85"/><ellipse cx="430.9" cy="186.3" rx="3.7" ry="2.2" transform="rotate(104 430.9 186.3)" fill="#3570c2" opacity="0.85"/><ellipse cx="400.6" cy="228.3" rx="3.6" ry="2.0" transform="rotate(8 400.6 228.3)" fill="#3068ba" opacity="0.85"/><ellipse cx="435.0" cy="224.0" rx="3.7" ry="2.3" transform="rotate(19 435.0 224.0)" fill="#3068ba" opacity="0.85"/><ellipse cx="412.3" cy="205.3" rx="3.5" ry="2.1" transform="rotate(109 412.3 205.3)" fill="#2458a6" opacity="0.85"/><ellipse cx="411.5" cy="208.7" rx="2.5" ry="1.7" transform="rotate(54 411.5 208.7)" fill="#3570c2" opacity="0.85"/><ellipse cx="399.3" cy="196.5" rx="4.0" ry="2.3" transform="rotate(152 399.3 196.5)" fill="#3570c2" opacity="0.85"/><ellipse cx="444.8" cy="240.1" rx="3.8" ry="1.8" transform="rotate(47 444.8 240.1)" fill="#2a60b0" opacity="0.85"/><ellipse cx="394.5" cy="187.3" rx="3.4" ry="2.2" transform="rotate(100 394.5 187.3)" fill="#2458a6" opacity="0.85"/><ellipse cx="424.2" cy="195.9" rx="4.4" ry="2.1" transform="rotate(167 424.2 195.9)" fill="#2458a6" opacity="0.85"/><ellipse cx="422.7" cy="199.0" rx="4.0" ry="2.8" transform="rotate(42 422.7 199.0)" fill="#2a60b0" opacity="0.85"/><ellipse cx="410.4" cy="211.0" rx="3.2" ry="2.1" transform="rotate(108 410.4 211.0)" fill="#2458a6" opacity="0.85"/><ellipse cx="344.8" cy="203.1" rx="4.3" ry="2.4" transform="rotate(126 344.8 203.1)" fill="#3068ba" opacity="0.85"/><ellipse cx="377.2" cy="192.9" rx="3.8" ry="1.8" transform="rotate(38 377.2 192.9)" fill="#3068ba" opacity="0.85"/><ellipse cx="404.2" cy="200.6" rx="4.4" ry="2.4" transform="rotate(19 404.2 200.6)" fill="#3068ba" opacity="0.85"/><ellipse cx="397.8" cy="194.7" rx="3.8" ry="1.8" transform="rotate(25 397.8 194.7)" fill="#2d66b8" opacity="0.85"/><ellipse cx="399.1" cy="192.9" rx="3.2" ry="2.1" transform="rotate(106 399.1 192.9)" fill="#2458a6" opacity="0.85"/><ellipse cx="408.4" cy="194.7" rx="4.4" ry="3.0" transform="rotate(156 408.4 194.7)" fill="#2d66b8" opacity="0.85"/><ellipse cx="400.4" cy="207.4" rx="4.5" ry="3.0" transform="rotate(6 400.4 207.4)" fill="#2d66b8" opacity="0.85"/><ellipse cx="418.9" cy="180.4" rx="2.6" ry="1.2" transform="rotate(52 418.9 180.4)" fill="#3068ba" opacity="0.85"/><ellipse cx="392.7" cy="210.2" rx="3.2" ry="2.2" transform="rotate(47 392.7 210.2)" fill="#2d66b8" opacity="0.85"/><ellipse cx="394.0" cy="184.9" rx="4.5" ry="2.6" transform="rotate(58 394.0 184.9)" fill="#2a60b0" opacity="0.85"/><ellipse cx="394.6" cy="195.6" rx="3.4" ry="2.2" transform="rotate(74 394.6 195.6)" fill="#2a60b0" opacity="0.85"/><ellipse cx="390.9" cy="198.9" rx="4.0" ry="2.6" transform="rotate(102 390.9 198.9)" fill="#2458a6" opacity="0.85"/><ellipse cx="407.6" cy="190.3" rx="2.8" ry="1.8" transform="rotate(0 407.6 190.3)" fill="#2d66b8" opacity="0.85"/><ellipse cx="434.1" cy="198.4" rx="4.2" ry="2.1" transform="rotate(88 434.1 198.4)" fill="#3570c2" opacity="0.85"/><ellipse cx="338.3" cy="178.7" rx="3.7" ry="1.8" transform="rotate(93 338.3 178.7)" fill="#3068ba" opacity="0.85"/><ellipse cx="419.8" cy="194.2" rx="4.5" ry="2.9" transform="rotate(30 419.8 194.2)" fill="#3570c2" opacity="0.85"/><ellipse cx="410.7" cy="177.0" rx="3.8" ry="2.0" transform="rotate(142 410.7 177.0)" fill="#3570c2" opacity="0.85"/><ellipse cx="455.9" cy="185.2" rx="3.3" ry="2.0" transform="rotate(134 455.9 185.2)" fill="#2a60b0" opacity="0.85"/><ellipse cx="406.3" cy="208.5" rx="3.5" ry="1.9" transform="rotate(162 406.3 208.5)" fill="#3068ba" opacity="0.85"/><ellipse cx="414.4" cy="195.5" rx="3.9" ry="2.4" transform="rotate(107 414.4 195.5)" fill="#2d66b8" opacity="0.85"/><ellipse cx="384.8" cy="208.1" rx="4.3" ry="2.6" transform="rotate(28 384.8 208.1)" fill="#2a60b0" opacity="0.85"/><ellipse cx="415.3" cy="211.2" rx="3.7" ry="1.8" transform="rotate(139 415.3 211.2)" fill="#3570c2" opacity="0.85"/><ellipse cx="371.7" cy="181.1" rx="3.0" ry="1.9" transform="rotate(91 371.7 181.1)" fill="#2458a6" opacity="0.85"/><ellipse cx="409.7" cy="204.7" rx="3.1" ry="1.8" transform="rotate(45 409.7 204.7)" fill="#3068ba" opacity="0.85"/><ellipse cx="406.4" cy="232.8" rx="4.5" ry="3.1" transform="rotate(47 406.4 232.8)" fill="#3068ba" opacity="0.85"/><ellipse cx="413.2" cy="196.5" rx="4.6" ry="3.0" transform="rotate(69 413.2 196.5)" fill="#2a60b0" opacity="0.85"/><ellipse cx="382.2" cy="201.7" rx="2.6" ry="1.3" transform="rotate(115 382.2 201.7)" fill="#3570c2" opacity="0.85"/><ellipse cx="395.4" cy="198.5" rx="3.4" ry="1.7" transform="rotate(154 395.4 198.5)" fill="#2a60b0" opacity="0.85"/><ellipse cx="384.2" cy="199.8" rx="3.3" ry="2.1" transform="rotate(109 384.2 199.8)" fill="#3570c2" opacity="0.85"/><ellipse cx="388.2" cy="180.2" rx="4.3" ry="2.6" transform="rotate(116 388.2 180.2)" fill="#2458a6" opacity="0.85"/><ellipse cx="426.6" cy="181.1" rx="3.4" ry="1.8" transform="rotate(115 426.6 181.1)" fill="#2d66b8" opacity="0.85"/><ellipse cx="417.3" cy="191.6" rx="4.0" ry="1.9" transform="rotate(72 417.3 191.6)" fill="#3570c2" opacity="0.85"/><ellipse cx="394.2" cy="198.3" rx="3.5" ry="2.2" transform="rotate(155 394.2 198.3)" fill="#3068ba" opacity="0.85"/><ellipse cx="420.7" cy="190.3" rx="4.2" ry="2.9" transform="rotate(2 420.7 190.3)" fill="#2d66b8" opacity="0.85"/><ellipse cx="435.8" cy="202.2" rx="4.1" ry="2.8" transform="rotate(29 435.8 202.2)" fill="#2458a6" opacity="0.85"/><ellipse cx="367.0" cy="220.1" rx="2.9" ry="1.6" transform="rotate(82 367.0 220.1)" fill="#2d66b8" opacity="0.85"/><ellipse cx="364.6" cy="177.8" rx="3.3" ry="2.3" transform="rotate(94 364.6 177.8)" fill="#3068ba" opacity="0.85"/><ellipse cx="418.7" cy="197.5" rx="4.5" ry="2.8" transform="rotate(92 418.7 197.5)" fill="#2458a6" opacity="0.85"/><ellipse cx="393.8" cy="201.8" rx="3.3" ry="1.5" transform="rotate(49 393.8 201.8)" fill="#3570c2" opacity="0.85"/><ellipse cx="435.7" cy="188.0" rx="3.7" ry="1.8" transform="rotate(121 435.7 188.0)" fill="#2a60b0" opacity="0.85"/><ellipse cx="396.3" cy="164.8" rx="2.9" ry="1.9" transform="rotate(95 396.3 164.8)" fill="#3570c2" opacity="0.85"/><ellipse cx="382.9" cy="200.0" rx="2.6" ry="1.7" transform="rotate(167 382.9 200.0)" fill="#3068ba" opacity="0.85"/><ellipse cx="362.9" cy="201.5" rx="4.5" ry="2.4" transform="rotate(41 362.9 201.5)" fill="#3570c2" opacity="0.85"/><ellipse cx="375.9" cy="200.3" rx="2.7" ry="1.8" transform="rotate(99 375.9 200.3)" fill="#2a60b0" opacity="0.85"/><ellipse cx="404.5" cy="188.1" rx="3.9" ry="2.7" transform="rotate(127 404.5 188.1)" fill="#3068ba" opacity="0.85"/><ellipse cx="347.2" cy="200.9" rx="3.2" ry="2.0" transform="rotate(144 347.2 200.9)" fill="#2a60b0" opacity="0.85"/><ellipse cx="369.2" cy="199.9" rx="3.9" ry="2.1" transform="rotate(115 369.2 199.9)" fill="#2a60b0" opacity="0.85"/><ellipse cx="406.1" cy="194.2" rx="4.4" ry="2.8" transform="rotate(149 406.1 194.2)" fill="#3068ba" opacity="0.85"/><ellipse cx="373.4" cy="195.5" rx="3.8" ry="1.9" transform="rotate(105 373.4 195.5)" fill="#2d66b8" opacity="0.85"/><ellipse cx="387.6" cy="189.2" rx="2.7" ry="1.4" transform="rotate(18 387.6 189.2)" fill="#3570c2" opacity="0.85"/><ellipse cx="390.4" cy="204.6" rx="4.1" ry="2.0" transform="rotate(163 390.4 204.6)" fill="#2458a6" opacity="0.85"/><ellipse cx="412.7" cy="197.1" rx="3.6" ry="2.2" transform="rotate(162 412.7 197.1)" fill="#2a60b0" opacity="0.85"/><ellipse cx="414.7" cy="218.3" rx="4.0" ry="2.3" transform="rotate(96 414.7 218.3)" fill="#2d66b8" opacity="0.85"/><ellipse cx="378.3" cy="194.3" rx="2.7" ry="1.6" transform="rotate(42 378.3 194.3)" fill="#2d66b8" opacity="0.85"/><ellipse cx="336.5" cy="201.0" rx="2.9" ry="1.4" transform="rotate(126 336.5 201.0)" fill="#2458a6" opacity="0.85"/><ellipse cx="402.2" cy="196.8" rx="3.4" ry="2.0" transform="rotate(151 402.2 196.8)" fill="#2a60b0" opacity="0.85"/><ellipse cx="415.4" cy="186.6" rx="4.5" ry="2.1" transform="rotate(75 415.4 186.6)" fill="#2a60b0" opacity="0.85"/><ellipse cx="395.4" cy="195.5" rx="3.9" ry="2.7" transform="rotate(110 395.4 195.5)" fill="#2a60b0" opacity="0.85"/><ellipse cx="404.7" cy="192.2" rx="4.1" ry="2.0" transform="rotate(87 404.7 192.2)" fill="#3068ba" opacity="0.85"/><ellipse cx="391.8" cy="178.8" rx="4.3" ry="2.3" transform="rotate(61 391.8 178.8)" fill="#3570c2" opacity="0.85"/><ellipse cx="406.7" cy="180.5" rx="3.0" ry="1.6" transform="rotate(164 406.7 180.5)" fill="#2a60b0" opacity="0.85"/><ellipse cx="348.1" cy="189.3" rx="4.2" ry="2.3" transform="rotate(53 348.1 189.3)" fill="#2458a6" opacity="0.85"/><ellipse cx="459.4" cy="195.2" rx="2.8" ry="1.6" transform="rotate(62 459.4 195.2)" fill="#2d66b8" opacity="0.85"/><ellipse cx="387.5" cy="208.7" rx="3.7" ry="2.2" transform="rotate(54 387.5 208.7)" fill="#2d66b8" opacity="0.85"/><ellipse cx="369.9" cy="208.6" rx="3.7" ry="2.0" transform="rotate(73 369.9 208.6)" fill="#2d66b8" opacity="0.85"/><ellipse cx="419.1" cy="198.4" rx="3.7" ry="2.3" transform="rotate(166 419.1 198.4)" fill="#2458a6" opacity="0.85"/><ellipse cx="434.1" cy="187.7" rx="3.8" ry="2.4" transform="rotate(111 434.1 187.7)" fill="#2458a6" opacity="0.85"/><ellipse cx="408.7" cy="193.9" rx="3.8" ry="2.3" transform="rotate(7 408.7 193.9)" fill="#3068ba" opacity="0.85"/><ellipse cx="415.0" cy="203.3" rx="4.1" ry="2.8" transform="rotate(7 415.0 203.3)" fill="#2d66b8" opacity="0.85"/><ellipse cx="362.9" cy="217.1" rx="3.6" ry="1.9" transform="rotate(142 362.9 217.1)" fill="#2a60b0" opacity="0.85"/><ellipse cx="403.1" cy="201.4" rx="3.6" ry="2.2" transform="rotate(4 403.1 201.4)" fill="#2d66b8" opacity="0.85"/><ellipse cx="364.3" cy="198.2" rx="4.1" ry="2.3" transform="rotate(148 364.3 198.2)" fill="#3570c2" opacity="0.85"/><ellipse cx="395.3" cy="198.8" rx="3.7" ry="2.5" transform="rotate(70 395.3 198.8)" fill="#3068ba" opacity="0.85"/><ellipse cx="370.0" cy="200.2" rx="3.8" ry="1.9" transform="rotate(18 370.0 200.2)" fill="#3068ba" opacity="0.85"/><ellipse cx="378.3" cy="187.4" rx="3.9" ry="2.7" transform="rotate(2 378.3 187.4)" fill="#2d66b8" opacity="0.85"/><ellipse cx="403.0" cy="205.0" rx="3.0" ry="1.8" transform="rotate(85 403.0 205.0)" fill="#3570c2" opacity="0.85"/><ellipse cx="398.0" cy="189.0" rx="4.1" ry="2.6" transform="rotate(9 398.0 189.0)" fill="#3068ba" opacity="0.85"/><ellipse cx="398.4" cy="192.2" rx="4.0" ry="2.2" transform="rotate(113 398.4 192.2)" fill="#2a60b0" opacity="0.85"/><ellipse cx="408.3" cy="195.6" rx="2.5" ry="1.7" transform="rotate(6 408.3 195.6)" fill="#2458a6" opacity="0.85"/><ellipse cx="422.3" cy="203.8" rx="2.8" ry="1.8" transform="rotate(131 422.3 203.8)" fill="#3570c2" opacity="0.85"/><ellipse cx="380.1" cy="190.3" rx="4.0" ry="2.3" transform="rotate(171 380.1 190.3)" fill="#3068ba" opacity="0.85"/><ellipse cx="432.2" cy="217.8" rx="3.8" ry="2.3" transform="rotate(65 432.2 217.8)" fill="#3570c2" opacity="0.85"/><ellipse cx="349.5" cy="201.5" rx="3.0" ry="1.9" transform="rotate(81 349.5 201.5)" fill="#2a60b0" opacity="0.85"/><ellipse cx="397.3" cy="202.8" rx="3.9" ry="2.6" transform="rotate(175 397.3 202.8)" fill="#2a60b0" opacity="0.85"/><ellipse cx="432.3" cy="181.5" rx="2.7" ry="1.8" transform="rotate(3 432.3 181.5)" fill="#2458a6" opacity="0.85"/><ellipse cx="344.6" cy="210.7" rx="3.9" ry="2.3" transform="rotate(68 344.6 210.7)" fill="#3068ba" opacity="0.85"/><ellipse cx="408.5" cy="187.3" rx="3.0" ry="1.7" transform="rotate(0 408.5 187.3)" fill="#2458a6" opacity="0.85"/><ellipse cx="443.8" cy="186.6" rx="3.0" ry="1.5" transform="rotate(141 443.8 186.6)" fill="#2458a6" opacity="0.85"/><ellipse cx="448.2" cy="228.4" rx="3.6" ry="2.3" transform="rotate(144 448.2 228.4)" fill="#3570c2" opacity="0.85"/><ellipse cx="392.9" cy="202.8" rx="4.2" ry="2.1" transform="rotate(100 392.9 202.8)" fill="#3068ba" opacity="0.85"/><ellipse cx="396.3" cy="202.5" rx="4.0" ry="2.7" transform="rotate(71 396.3 202.5)" fill="#2458a6" opacity="0.85"/><ellipse cx="400.4" cy="173.2" rx="2.6" ry="1.7" transform="rotate(83 400.4 173.2)" fill="#2d66b8" opacity="0.85"/><ellipse cx="404.2" cy="216.3" rx="4.3" ry="2.5" transform="rotate(161 404.2 216.3)" fill="#3570c2" opacity="0.85"/><ellipse cx="380.3" cy="197.6" rx="2.6" ry="1.7" transform="rotate(38 380.3 197.6)" fill="#2a60b0" opacity="0.85"/><ellipse cx="375.3" cy="211.7" rx="3.5" ry="1.7" transform="rotate(72 375.3 211.7)" fill="#2d66b8" opacity="0.85"/><ellipse cx="430.3" cy="190.4" rx="3.2" ry="1.8" transform="rotate(156 430.3 190.4)" fill="#2d66b8" opacity="0.85"/><ellipse cx="422.0" cy="213.7" rx="3.5" ry="1.6" transform="rotate(62 422.0 213.7)" fill="#2d66b8" opacity="0.85"/><ellipse cx="416.7" cy="225.2" rx="3.7" ry="1.9" transform="rotate(102 416.7 225.2)" fill="#2a60b0" opacity="0.85"/><ellipse cx="336.4" cy="213.2" rx="4.2" ry="2.9" transform="rotate(138 336.4 213.2)" fill="#2a60b0" opacity="0.85"/><ellipse cx="414.9" cy="187.4" rx="3.2" ry="1.5" transform="rotate(179 414.9 187.4)" fill="#2d66b8" opacity="0.85"/><ellipse cx="344.4" cy="188.0" rx="4.5" ry="3.0" transform="rotate(82 344.4 188.0)" fill="#2d66b8" opacity="0.85"/><ellipse cx="427.4" cy="182.8" rx="4.0" ry="1.9" transform="rotate(166 427.4 182.8)" fill="#2a60b0" opacity="0.85"/><ellipse cx="361.3" cy="190.1" rx="3.9" ry="2.1" transform="rotate(172 361.3 190.1)" fill="#3570c2" opacity="0.85"/><ellipse cx="416.6" cy="187.1" rx="4.0" ry="2.0" transform="rotate(42 416.6 187.1)" fill="#2a60b0" opacity="0.85"/><ellipse cx="409.6" cy="196.2" rx="2.5" ry="1.7" transform="rotate(100 409.6 196.2)" fill="#2a60b0" opacity="0.85"/><ellipse cx="410.5" cy="176.6" rx="4.6" ry="2.1" transform="rotate(116 410.5 176.6)" fill="#3068ba" opacity="0.85"/><ellipse cx="398.7" cy="199.4" rx="4.0" ry="2.4" transform="rotate(36 398.7 199.4)" fill="#3570c2" opacity="0.85"/><ellipse cx="400.7" cy="191.4" rx="3.0" ry="1.4" transform="rotate(58 400.7 191.4)" fill="#3570c2" opacity="0.85"/><ellipse cx="376.9" cy="208.4" rx="4.4" ry="3.0" transform="rotate(145 376.9 208.4)" fill="#3570c2" opacity="0.85"/><ellipse cx="396.0" cy="189.0" rx="4.4" ry="2.2" transform="rotate(6 396.0 189.0)" fill="#2458a6" opacity="0.85"/><ellipse cx="441.2" cy="176.2" rx="3.4" ry="1.6" transform="rotate(25 441.2 176.2)" fill="#3570c2" opacity="0.85"/><ellipse cx="422.7" cy="181.5" rx="3.1" ry="2.1" transform="rotate(81 422.7 181.5)" fill="#3570c2" opacity="0.85"/><ellipse cx="421.0" cy="206.9" rx="4.0" ry="2.0" transform="rotate(60 421.0 206.9)" fill="#3570c2" opacity="0.85"/><ellipse cx="384.5" cy="195.4" rx="3.0" ry="1.7" transform="rotate(157 384.5 195.4)" fill="#3068ba" opacity="0.85"/><ellipse cx="437.8" cy="200.9" rx="4.2" ry="2.1" transform="rotate(53 437.8 200.9)" fill="#2d66b8" opacity="0.85"/><ellipse cx="373.7" cy="225.5" rx="4.6" ry="2.1" transform="rotate(21 373.7 225.5)" fill="#3068ba" opacity="0.85"/><ellipse cx="348.1" cy="188.2" rx="4.1" ry="2.8" transform="rotate(21 348.1 188.2)" fill="#3570c2" opacity="0.85"/><ellipse cx="503.8" cy="195.2" rx="2.6" ry="1.4" transform="rotate(167 503.8 195.2)" fill="#3068ba" opacity="0.85"/><ellipse cx="444.3" cy="206.0" rx="4.6" ry="2.1" transform="rotate(53 444.3 206.0)" fill="#2458a6" opacity="0.85"/><ellipse cx="391.3" cy="204.5" rx="4.2" ry="2.5" transform="rotate(0 391.3 204.5)" fill="#3068ba" opacity="0.85"/><ellipse cx="394.6" cy="201.1" rx="3.0" ry="1.5" transform="rotate(74 394.6 201.1)" fill="#3068ba" opacity="0.85"/><ellipse cx="378.9" cy="196.6" rx="3.7" ry="2.4" transform="rotate(32 378.9 196.6)" fill="#2458a6" opacity="0.85"/><ellipse cx="394.0" cy="174.5" rx="2.7" ry="1.7" transform="rotate(32 394.0 174.5)" fill="#3068ba" opacity="0.85"/><ellipse cx="382.9" cy="193.3" rx="4.0" ry="2.2" transform="rotate(12 382.9 193.3)" fill="#2d66b8" opacity="0.85"/><ellipse cx="373.0" cy="196.5" rx="3.8" ry="2.6" transform="rotate(51 373.0 196.5)" fill="#2d66b8" opacity="0.85"/><ellipse cx="464.2" cy="201.0" rx="4.3" ry="2.2" transform="rotate(86 464.2 201.0)" fill="#3068ba" opacity="0.85"/><ellipse cx="321.0" cy="182.2" rx="3.9" ry="2.3" transform="rotate(7 321.0 182.2)" fill="#2d66b8" opacity="0.85"/><ellipse cx="357.8" cy="223.5" rx="2.6" ry="1.4" transform="rotate(174 357.8 223.5)" fill="#3068ba" opacity="0.85"/><ellipse cx="423.9" cy="172.4" rx="4.0" ry="2.2" transform="rotate(58 423.9 172.4)" fill="#2d66b8" opacity="0.85"/><ellipse cx="396.4" cy="204.5" rx="3.4" ry="1.5" transform="rotate(132 396.4 204.5)" fill="#2458a6" opacity="0.85"/><ellipse cx="414.6" cy="205.8" rx="3.8" ry="1.9" transform="rotate(16 414.6 205.8)" fill="#2a60b0" opacity="0.85"/><ellipse cx="399.8" cy="223.8" rx="2.6" ry="1.6" transform="rotate(5 399.8 223.8)" fill="#3068ba" opacity="0.85"/><ellipse cx="396.0" cy="224.6" rx="3.4" ry="1.7" transform="rotate(115 396.0 224.6)" fill="#3570c2" opacity="0.85"/><ellipse cx="447.4" cy="215.0" rx="2.5" ry="1.2" transform="rotate(129 447.4 215.0)" fill="#3570c2" opacity="0.85"/><ellipse cx="357.3" cy="185.8" rx="2.7" ry="1.8" transform="rotate(20 357.3 185.8)" fill="#2458a6" opacity="0.85"/><ellipse cx="351.0" cy="182.8" rx="3.7" ry="2.3" transform="rotate(26 351.0 182.8)" fill="#3068ba" opacity="0.85"/><ellipse cx="405.4" cy="197.1" rx="3.9" ry="2.4" transform="rotate(114 405.4 197.1)" fill="#2458a6" opacity="0.85"/><ellipse cx="370.9" cy="195.7" rx="4.1" ry="2.2" transform="rotate(169 370.9 195.7)" fill="#3068ba" opacity="0.85"/><ellipse cx="424.6" cy="179.2" rx="3.6" ry="2.5" transform="rotate(152 424.6 179.2)" fill="#2a60b0" opacity="0.85"/><ellipse cx="422.7" cy="173.1" rx="3.5" ry="2.4" transform="rotate(10 422.7 173.1)" fill="#2a60b0" opacity="0.85"/><ellipse cx="400.1" cy="212.7" rx="3.2" ry="1.9" transform="rotate(114 400.1 212.7)" fill="#2d66b8" opacity="0.85"/><ellipse cx="391.1" cy="206.4" rx="2.9" ry="1.6" transform="rotate(120 391.1 206.4)" fill="#3570c2" opacity="0.85"/><ellipse cx="411.5" cy="165.5" rx="4.2" ry="2.8" transform="rotate(114 411.5 165.5)" fill="#2d66b8" opacity="0.85"/><ellipse cx="441.1" cy="202.3" rx="3.9" ry="2.0" transform="rotate(48 441.1 202.3)" fill="#2458a6" opacity="0.85"/><ellipse cx="402.8" cy="194.5" rx="2.7" ry="1.2" transform="rotate(18 402.8 194.5)" fill="#3068ba" opacity="0.85"/><ellipse cx="423.1" cy="194.5" rx="3.8" ry="1.8" transform="rotate(55 423.1 194.5)" fill="#2458a6" opacity="0.85"/><ellipse cx="464.1" cy="190.0" rx="2.6" ry="1.5" transform="rotate(162 464.1 190.0)" fill="#3068ba" opacity="0.85"/><ellipse cx="367.3" cy="204.2" rx="4.4" ry="2.6" transform="rotate(159 367.3 204.2)" fill="#2a60b0" opacity="0.85"/><ellipse cx="400.5" cy="204.0" rx="4.2" ry="2.6" transform="rotate(98 400.5 204.0)" fill="#2458a6" opacity="0.85"/><ellipse cx="405.2" cy="211.6" rx="3.2" ry="2.2" transform="rotate(99 405.2 211.6)" fill="#2a60b0" opacity="0.85"/><ellipse cx="374.9" cy="187.7" rx="2.9" ry="1.5" transform="rotate(56 374.9 187.7)" fill="#2458a6" opacity="0.85"/><ellipse cx="325.5" cy="187.5" rx="4.4" ry="2.2" transform="rotate(71 325.5 187.5)" fill="#3068ba" opacity="0.85"/><ellipse cx="388.3" cy="209.1" rx="4.3" ry="2.2" transform="rotate(49 388.3 209.1)" fill="#2d66b8" opacity="0.85"/><ellipse cx="402.4" cy="189.9" rx="4.3" ry="2.4" transform="rotate(12 402.4 189.9)" fill="#2d66b8" opacity="0.85"/><ellipse cx="344.6" cy="195.2" rx="4.1" ry="2.4" transform="rotate(64 344.6 195.2)" fill="#3068ba" opacity="0.85"/><ellipse cx="362.2" cy="208.4" rx="2.8" ry="1.7" transform="rotate(25 362.2 208.4)" fill="#2a60b0" opacity="0.85"/><ellipse cx="415.4" cy="182.8" rx="4.0" ry="2.6" transform="rotate(133 415.4 182.8)" fill="#3570c2" opacity="0.85"/><ellipse cx="395.1" cy="217.6" rx="3.9" ry="2.2" transform="rotate(114 395.1 217.6)" fill="#2d66b8" opacity="0.85"/><ellipse cx="450.1" cy="198.6" rx="3.5" ry="2.4" transform="rotate(105 450.1 198.6)" fill="#2458a6" opacity="0.85"/><ellipse cx="433.8" cy="220.0" rx="3.8" ry="1.8" transform="rotate(50 433.8 220.0)" fill="#3570c2" opacity="0.85"/><ellipse cx="391.5" cy="187.2" rx="3.2" ry="1.8" transform="rotate(63 391.5 187.2)" fill="#2458a6" opacity="0.85"/><ellipse cx="380.6" cy="206.2" rx="4.3" ry="2.5" transform="rotate(142 380.6 206.2)" fill="#3570c2" opacity="0.85"/><ellipse cx="388.7" cy="214.5" rx="3.4" ry="1.8" transform="rotate(145 388.7 214.5)" fill="#3068ba" opacity="0.85"/><ellipse cx="456.3" cy="214.5" rx="4.3" ry="2.8" transform="rotate(58 456.3 214.5)" fill="#2a60b0" opacity="0.85"/><ellipse cx="408.8" cy="212.2" rx="2.4" ry="1.1" transform="rotate(164 408.8 212.2)" fill="#2458a6" opacity="0.85"/><ellipse cx="419.7" cy="190.8" rx="3.1" ry="1.9" transform="rotate(97 419.7 190.8)" fill="#3570c2" opacity="0.85"/><ellipse cx="364.7" cy="196.2" rx="3.3" ry="1.8" transform="rotate(123 364.7 196.2)" fill="#2458a6" opacity="0.85"/><ellipse cx="385.6" cy="184.2" rx="2.6" ry="1.3" transform="rotate(2 385.6 184.2)" fill="#3570c2" opacity="0.85"/><ellipse cx="379.0" cy="208.1" rx="3.7" ry="2.5" transform="rotate(101 379.0 208.1)" fill="#3570c2" opacity="0.85"/><ellipse cx="368.4" cy="199.3" rx="4.6" ry="2.5" transform="rotate(112 368.4 199.3)" fill="#2458a6" opacity="0.85"/><ellipse cx="399.7" cy="191.8" rx="3.2" ry="1.5" transform="rotate(65 399.7 191.8)" fill="#2a60b0" opacity="0.85"/><ellipse cx="385.8" cy="197.5" rx="3.9" ry="2.6" transform="rotate(161 385.8 197.5)" fill="#2458a6" opacity="0.85"/><ellipse cx="423.4" cy="188.5" rx="3.0" ry="1.8" transform="rotate(28 423.4 188.5)" fill="#2458a6" opacity="0.85"/><ellipse cx="423.7" cy="189.0" rx="3.6" ry="1.7" transform="rotate(11 423.7 189.0)" fill="#2458a6" opacity="0.85"/><ellipse cx="441.8" cy="197.2" rx="3.3" ry="2.1" transform="rotate(8 441.8 197.2)" fill="#2a60b0" opacity="0.85"/><ellipse cx="390.9" cy="180.8" rx="3.3" ry="1.6" transform="rotate(165 390.9 180.8)" fill="#2d66b8" opacity="0.85"/><ellipse cx="390.4" cy="189.9" rx="3.6" ry="1.9" transform="rotate(90 390.4 189.9)" fill="#2458a6" opacity="0.85"/><ellipse cx="383.7" cy="197.3" rx="3.7" ry="1.8" transform="rotate(36 383.7 197.3)" fill="#2458a6" opacity="0.85"/><ellipse cx="400.8" cy="191.4" rx="2.8" ry="1.6" transform="rotate(18 400.8 191.4)" fill="#3570c2" opacity="0.85"/><ellipse cx="359.6" cy="181.5" rx="2.4" ry="1.6" transform="rotate(11 359.6 181.5)" fill="#2a60b0" opacity="0.85"/><ellipse cx="413.4" cy="206.1" rx="2.5" ry="1.5" transform="rotate(50 413.4 206.1)" fill="#2458a6" opacity="0.85"/><ellipse cx="417.7" cy="201.5" rx="2.4" ry="1.2" transform="rotate(112 417.7 201.5)" fill="#3570c2" opacity="0.85"/><ellipse cx="335.3" cy="180.4" rx="3.8" ry="1.9" transform="rotate(79 335.3 180.4)" fill="#2d66b8" opacity="0.85"/><ellipse cx="421.1" cy="213.7" rx="2.4" ry="1.6" transform="rotate(31 421.1 213.7)" fill="#3570c2" opacity="0.85"/><ellipse cx="386.8" cy="215.9" rx="3.5" ry="2.4" transform="rotate(173 386.8 215.9)" fill="#3068ba" opacity="0.85"/><ellipse cx="380.6" cy="179.2" rx="3.3" ry="1.8" transform="rotate(105 380.6 179.2)" fill="#3570c2" opacity="0.85"/><ellipse cx="458.6" cy="202.0" rx="2.8" ry="1.5" transform="rotate(16 458.6 202.0)" fill="#2d66b8" opacity="0.85"/><ellipse cx="424.0" cy="195.9" rx="2.7" ry="1.5" transform="rotate(101 424.0 195.9)" fill="#3570c2" opacity="0.85"/><ellipse cx="378.1" cy="215.4" rx="3.3" ry="2.3" transform="rotate(173 378.1 215.4)" fill="#2458a6" opacity="0.85"/><ellipse cx="400.6" cy="207.1" rx="2.9" ry="1.3" transform="rotate(51 400.6 207.1)" fill="#2d66b8" opacity="0.85"/><ellipse cx="390.7" cy="204.8" rx="2.6" ry="1.3" transform="rotate(127 390.7 204.8)" fill="#3068ba" opacity="0.85"/><ellipse cx="369.0" cy="192.7" rx="2.9" ry="1.6" transform="rotate(143 369.0 192.7)" fill="#3068ba" opacity="0.85"/><ellipse cx="395.1" cy="184.6" rx="2.9" ry="2.0" transform="rotate(173 395.1 184.6)" fill="#2458a6" opacity="0.85"/><ellipse cx="416.4" cy="224.6" rx="4.5" ry="3.1" transform="rotate(122 416.4 224.6)" fill="#2458a6" opacity="0.85"/><ellipse cx="431.6" cy="187.0" rx="2.9" ry="1.8" transform="rotate(66 431.6 187.0)" fill="#3068ba" opacity="0.85"/><ellipse cx="434.5" cy="214.6" rx="2.6" ry="1.7" transform="rotate(122 434.5 214.6)" fill="#3570c2" opacity="0.85"/><ellipse cx="446.0" cy="202.0" rx="2.4" ry="1.5" transform="rotate(26 446.0 202.0)" fill="#3068ba" opacity="0.85"/><ellipse cx="403.5" cy="188.0" rx="4.4" ry="2.0" transform="rotate(34 403.5 188.0)" fill="#2a60b0" opacity="0.85"/><ellipse cx="416.8" cy="175.8" rx="4.0" ry="1.9" transform="rotate(35 416.8 175.8)" fill="#2a60b0" opacity="0.85"/><ellipse cx="432.8" cy="213.8" rx="3.3" ry="2.2" transform="rotate(51 432.8 213.8)" fill="#3068ba" opacity="0.85"/><ellipse cx="416.9" cy="194.6" rx="4.2" ry="2.6" transform="rotate(66 416.9 194.6)" fill="#3570c2" opacity="0.85"/><ellipse cx="445.3" cy="201.5" rx="4.6" ry="2.5" transform="rotate(83 445.3 201.5)" fill="#2d66b8" opacity="0.85"/><ellipse cx="406.1" cy="204.3" rx="4.0" ry="2.5" transform="rotate(164 406.1 204.3)" fill="#2d66b8" opacity="0.85"/><ellipse cx="366.7" cy="208.8" rx="4.1" ry="2.0" transform="rotate(78 366.7 208.8)" fill="#2d66b8" opacity="0.85"/><ellipse cx="360.8" cy="191.6" rx="3.6" ry="1.8" transform="rotate(169 360.8 191.6)" fill="#3570c2" opacity="0.85"/><ellipse cx="395.3" cy="187.5" rx="3.9" ry="2.1" transform="rotate(78 395.3 187.5)" fill="#2d66b8" opacity="0.85"/><ellipse cx="438.1" cy="213.4" rx="4.4" ry="2.9" transform="rotate(118 438.1 213.4)" fill="#2458a6" opacity="0.85"/><ellipse cx="392.8" cy="195.3" rx="2.6" ry="1.7" transform="rotate(44 392.8 195.3)" fill="#3068ba" opacity="0.85"/><ellipse cx="404.6" cy="185.3" rx="3.3" ry="2.1" transform="rotate(164 404.6 185.3)" fill="#2458a6" opacity="0.85"/><ellipse cx="411.3" cy="188.0" rx="4.5" ry="2.5" transform="rotate(16 411.3 188.0)" fill="#2a60b0" opacity="0.85"/><ellipse cx="382.7" cy="176.6" rx="3.8" ry="2.1" transform="rotate(149 382.7 176.6)" fill="#2d66b8" opacity="0.85"/><ellipse cx="391.1" cy="189.5" rx="4.3" ry="2.7" transform="rotate(121 391.1 189.5)" fill="#3570c2" opacity="0.85"/><ellipse cx="400.7" cy="193.8" rx="4.2" ry="2.2" transform="rotate(126 400.7 193.8)" fill="#2458a6" opacity="0.85"/><ellipse cx="426.4" cy="218.9" rx="3.0" ry="2.1" transform="rotate(42 426.4 218.9)" fill="#3068ba" opacity="0.85"/><ellipse cx="381.0" cy="209.2" rx="3.1" ry="1.5" transform="rotate(36 381.0 209.2)" fill="#3570c2" opacity="0.85"/><ellipse cx="389.6" cy="188.9" rx="3.5" ry="2.0" transform="rotate(44 389.6 188.9)" fill="#2a60b0" opacity="0.85"/><ellipse cx="395.0" cy="190.9" rx="3.7" ry="1.9" transform="rotate(127 395.0 190.9)" fill="#2d66b8" opacity="0.85"/><ellipse cx="352.6" cy="190.9" rx="3.9" ry="2.3" transform="rotate(30 352.6 190.9)" fill="#3570c2" opacity="0.85"/><ellipse cx="416.0" cy="185.9" rx="3.9" ry="1.8" transform="rotate(37 416.0 185.9)" fill="#3570c2" opacity="0.85"/><ellipse cx="351.9" cy="217.2" rx="2.8" ry="1.8" transform="rotate(51 351.9 217.2)" fill="#3570c2" opacity="0.85"/><ellipse cx="361.3" cy="209.9" rx="3.7" ry="1.9" transform="rotate(80 361.3 209.9)" fill="#2458a6" opacity="0.85"/><ellipse cx="352.6" cy="213.0" rx="4.1" ry="1.9" transform="rotate(179 352.6 213.0)" fill="#2a60b0" opacity="0.85"/><ellipse cx="375.0" cy="209.5" rx="3.5" ry="1.9" transform="rotate(20 375.0 209.5)" fill="#3068ba" opacity="0.85"/><ellipse cx="353.6" cy="198.7" rx="2.6" ry="1.4" transform="rotate(65 353.6 198.7)" fill="#2458a6" opacity="0.85"/><ellipse cx="376.2" cy="203.1" rx="2.9" ry="1.4" transform="rotate(45 376.2 203.1)" fill="#2d66b8" opacity="0.85"/><ellipse cx="369.4" cy="214.4" rx="3.2" ry="2.2" transform="rotate(26 369.4 214.4)" fill="#2458a6" opacity="0.85"/><ellipse cx="375.4" cy="183.0" rx="4.1" ry="2.7" transform="rotate(30 375.4 183.0)" fill="#2458a6" opacity="0.85"/><ellipse cx="344.2" cy="220.7" rx="3.1" ry="1.7" transform="rotate(149 344.2 220.7)" fill="#2458a6" opacity="0.85"/><ellipse cx="382.7" cy="197.8" rx="2.5" ry="1.2" transform="rotate(46 382.7 197.8)" fill="#3570c2" opacity="0.85"/><ellipse cx="389.1" cy="191.2" rx="3.5" ry="1.7" transform="rotate(89 389.1 191.2)" fill="#2a60b0" opacity="0.85"/><ellipse cx="328.0" cy="199.0" rx="2.9" ry="1.4" transform="rotate(26 328.0 199.0)" fill="#3570c2" opacity="0.85"/><ellipse cx="354.7" cy="214.3" rx="2.8" ry="1.8" transform="rotate(79 354.7 214.3)" fill="#2d66b8" opacity="0.85"/><ellipse cx="376.4" cy="216.2" rx="3.5" ry="1.7" transform="rotate(150 376.4 216.2)" fill="#2d66b8" opacity="0.85"/><ellipse cx="337.6" cy="196.3" rx="3.1" ry="1.8" transform="rotate(76 337.6 196.3)" fill="#3068ba" opacity="0.85"/><ellipse cx="359.7" cy="206.8" rx="3.4" ry="2.0" transform="rotate(53 359.7 206.8)" fill="#2a60b0" opacity="0.85"/><ellipse cx="329.9" cy="204.9" rx="3.5" ry="2.0" transform="rotate(98 329.9 204.9)" fill="#2458a6" opacity="0.85"/><ellipse cx="383.0" cy="195.3" rx="4.5" ry="2.7" transform="rotate(175 383.0 195.3)" fill="#2d66b8" opacity="0.85"/><ellipse cx="347.0" cy="198.4" rx="3.6" ry="2.0" transform="rotate(119 347.0 198.4)" fill="#2a60b0" opacity="0.85"/><ellipse cx="321.9" cy="214.7" rx="3.2" ry="2.1" transform="rotate(54 321.9 214.7)" fill="#2d66b8" opacity="0.85"/><ellipse cx="358.0" cy="203.1" rx="3.9" ry="1.9" transform="rotate(133 358.0 203.1)" fill="#2458a6" opacity="0.85"/><ellipse cx="332.1" cy="226.6" rx="3.6" ry="2.1" transform="rotate(75 332.1 226.6)" fill="#3570c2" opacity="0.85"/><ellipse cx="349.0" cy="223.0" rx="2.8" ry="1.8" transform="rotate(174 349.0 223.0)" fill="#3068ba" opacity="0.85"/><ellipse cx="359.7" cy="203.0" rx="3.6" ry="1.8" transform="rotate(17 359.7 203.0)" fill="#3570c2" opacity="0.85"/><ellipse cx="353.1" cy="228.9" rx="3.9" ry="2.5" transform="rotate(97 353.1 228.9)" fill="#2458a6" opacity="0.85"/><ellipse cx="315.0" cy="199.7" rx="4.2" ry="2.0" transform="rotate(122 315.0 199.7)" fill="#2458a6" opacity="0.85"/><ellipse cx="320.5" cy="204.4" rx="2.7" ry="1.9" transform="rotate(136 320.5 204.4)" fill="#2458a6" opacity="0.85"/><ellipse cx="379.6" cy="229.4" rx="2.8" ry="1.9" transform="rotate(71 379.6 229.4)" fill="#2458a6" opacity="0.85"/><ellipse cx="341.4" cy="213.1" rx="3.8" ry="2.1" transform="rotate(67 341.4 213.1)" fill="#2d66b8" opacity="0.85"/><ellipse cx="347.6" cy="213.9" rx="2.9" ry="1.5" transform="rotate(107 347.6 213.9)" fill="#3068ba" opacity="0.85"/><ellipse cx="313.3" cy="226.5" rx="4.3" ry="2.6" transform="rotate(112 313.3 226.5)" fill="#2a60b0" opacity="0.85"/><ellipse cx="366.0" cy="234.2" rx="4.1" ry="2.5" transform="rotate(61 366.0 234.2)" fill="#2a60b0" opacity="0.85"/><ellipse cx="363.6" cy="222.4" rx="4.5" ry="2.8" transform="rotate(133 363.6 222.4)" fill="#2d66b8" opacity="0.85"/><ellipse cx="357.4" cy="198.9" rx="3.1" ry="1.9" transform="rotate(64 357.4 198.9)" fill="#2d66b8" opacity="0.85"/><ellipse cx="376.2" cy="201.6" rx="2.8" ry="1.6" transform="rotate(46 376.2 201.6)" fill="#2458a6" opacity="0.85"/><ellipse cx="317.8" cy="222.1" rx="2.6" ry="1.3" transform="rotate(88 317.8 222.1)" fill="#3068ba" opacity="0.85"/><ellipse cx="334.7" cy="207.7" rx="3.2" ry="1.6" transform="rotate(124 334.7 207.7)" fill="#2a60b0" opacity="0.85"/><ellipse cx="320.9" cy="206.4" rx="4.5" ry="2.0" transform="rotate(145 320.9 206.4)" fill="#2a60b0" opacity="0.85"/><ellipse cx="372.6" cy="211.4" rx="2.5" ry="1.6" transform="rotate(87 372.6 211.4)" fill="#2d66b8" opacity="0.85"/><ellipse cx="364.9" cy="237.9" rx="3.3" ry="1.9" transform="rotate(122 364.9 237.9)" fill="#3068ba" opacity="0.85"/><ellipse cx="342.5" cy="196.3" rx="4.5" ry="2.6" transform="rotate(41 342.5 196.3)" fill="#2a60b0" opacity="0.85"/><ellipse cx="343.5" cy="221.4" rx="3.7" ry="1.7" transform="rotate(161 343.5 221.4)" fill="#3068ba" opacity="0.85"/><ellipse cx="363.3" cy="189.5" rx="3.4" ry="2.3" transform="rotate(60 363.3 189.5)" fill="#2a60b0" opacity="0.85"/><ellipse cx="375.8" cy="212.8" rx="2.4" ry="1.4" transform="rotate(60 375.8 212.8)" fill="#2458a6" opacity="0.85"/><ellipse cx="360.6" cy="214.4" rx="3.0" ry="1.6" transform="rotate(121 360.6 214.4)" fill="#2458a6" opacity="0.85"/><ellipse cx="368.4" cy="211.2" rx="3.7" ry="1.8" transform="rotate(103 368.4 211.2)" fill="#2d66b8" opacity="0.85"/><ellipse cx="386.4" cy="195.1" rx="2.8" ry="1.6" transform="rotate(17 386.4 195.1)" fill="#2458a6" opacity="0.85"/><ellipse cx="337.7" cy="201.1" rx="4.1" ry="2.8" transform="rotate(51 337.7 201.1)" fill="#3068ba" opacity="0.85"/><ellipse cx="343.0" cy="200.1" rx="4.0" ry="2.3" transform="rotate(137 343.0 200.1)" fill="#3068ba" opacity="0.85"/><ellipse cx="335.4" cy="227.7" rx="2.5" ry="1.4" transform="rotate(73 335.4 227.7)" fill="#2a60b0" opacity="0.85"/><ellipse cx="375.5" cy="194.0" rx="4.4" ry="2.8" transform="rotate(91 375.5 194.0)" fill="#2a60b0" opacity="0.85"/><ellipse cx="357.8" cy="220.5" rx="3.9" ry="2.1" transform="rotate(160 357.8 220.5)" fill="#3570c2" opacity="0.85"/><ellipse cx="334.9" cy="206.5" rx="2.5" ry="1.3" transform="rotate(30 334.9 206.5)" fill="#2a60b0" opacity="0.85"/><ellipse cx="349.7" cy="232.1" rx="4.5" ry="2.1" transform="rotate(119 349.7 232.1)" fill="#3068ba" opacity="0.85"/><ellipse cx="343.1" cy="208.9" rx="3.7" ry="2.6" transform="rotate(32 343.1 208.9)" fill="#2a60b0" opacity="0.85"/><ellipse cx="379.5" cy="207.7" rx="4.4" ry="2.9" transform="rotate(130 379.5 207.7)" fill="#2a60b0" opacity="0.85"/><ellipse cx="362.7" cy="204.7" rx="2.5" ry="1.2" transform="rotate(46 362.7 204.7)" fill="#2a60b0" opacity="0.85"/><ellipse cx="350.3" cy="215.1" rx="3.4" ry="2.3" transform="rotate(9 350.3 215.1)" fill="#2a60b0" opacity="0.85"/><ellipse cx="368.6" cy="195.2" rx="4.0" ry="2.8" transform="rotate(35 368.6 195.2)" fill="#2458a6" opacity="0.85"/><ellipse cx="357.3" cy="213.8" rx="3.7" ry="2.3" transform="rotate(147 357.3 213.8)" fill="#2d66b8" opacity="0.85"/><ellipse cx="359.2" cy="229.7" rx="3.8" ry="2.6" transform="rotate(158 359.2 229.7)" fill="#3068ba" opacity="0.85"/><ellipse cx="332.9" cy="239.9" rx="3.5" ry="2.1" transform="rotate(5 332.9 239.9)" fill="#2a60b0" opacity="0.85"/><ellipse cx="367.9" cy="239.3" rx="2.6" ry="1.6" transform="rotate(143 367.9 239.3)" fill="#3570c2" opacity="0.85"/><ellipse cx="369.7" cy="210.8" rx="4.3" ry="2.0" transform="rotate(169 369.7 210.8)" fill="#2a60b0" opacity="0.85"/><ellipse cx="296.6" cy="194.1" rx="3.8" ry="2.4" transform="rotate(10 296.6 194.1)" fill="#2a60b0" opacity="0.85"/><ellipse cx="352.1" cy="214.5" rx="3.6" ry="2.4" transform="rotate(38 352.1 214.5)" fill="#2a60b0" opacity="0.85"/><ellipse cx="358.0" cy="197.1" rx="3.7" ry="2.2" transform="rotate(97 358.0 197.1)" fill="#2458a6" opacity="0.85"/><ellipse cx="337.4" cy="206.9" rx="4.2" ry="2.4" transform="rotate(111 337.4 206.9)" fill="#2d66b8" opacity="0.85"/><ellipse cx="352.7" cy="198.9" rx="4.6" ry="2.6" transform="rotate(139 352.7 198.9)" fill="#2a60b0" opacity="0.85"/><ellipse cx="334.5" cy="226.5" rx="3.0" ry="1.7" transform="rotate(49 334.5 226.5)" fill="#2d66b8" opacity="0.85"/><ellipse cx="331.1" cy="190.0" rx="4.6" ry="2.3" transform="rotate(65 331.1 190.0)" fill="#2d66b8" opacity="0.85"/><ellipse cx="375.3" cy="203.7" rx="3.6" ry="1.8" transform="rotate(22 375.3 203.7)" fill="#3068ba" opacity="0.85"/><ellipse cx="348.5" cy="233.0" rx="4.4" ry="2.9" transform="rotate(133 348.5 233.0)" fill="#3068ba" opacity="0.85"/><ellipse cx="332.1" cy="209.5" rx="3.4" ry="2.2" transform="rotate(128 332.1 209.5)" fill="#3068ba" opacity="0.85"/><ellipse cx="338.2" cy="201.3" rx="3.4" ry="1.8" transform="rotate(144 338.2 201.3)" fill="#2d66b8" opacity="0.85"/><ellipse cx="374.8" cy="227.7" rx="3.8" ry="2.1" transform="rotate(12 374.8 227.7)" fill="#2a60b0" opacity="0.85"/><ellipse cx="373.5" cy="219.3" rx="4.4" ry="3.0" transform="rotate(74 373.5 219.3)" fill="#3068ba" opacity="0.85"/><ellipse cx="353.9" cy="212.6" rx="2.9" ry="1.6" transform="rotate(128 353.9 212.6)" fill="#2a60b0" opacity="0.85"/><ellipse cx="351.6" cy="189.9" rx="4.6" ry="2.3" transform="rotate(54 351.6 189.9)" fill="#2458a6" opacity="0.85"/><ellipse cx="355.7" cy="195.0" rx="4.1" ry="2.8" transform="rotate(168 355.7 195.0)" fill="#3068ba" opacity="0.85"/><ellipse cx="357.1" cy="200.7" rx="3.5" ry="2.3" transform="rotate(60 357.1 200.7)" fill="#3068ba" opacity="0.85"/><ellipse cx="338.6" cy="231.1" rx="2.9" ry="1.3" transform="rotate(172 338.6 231.1)" fill="#3068ba" opacity="0.85"/><ellipse cx="369.0" cy="191.8" rx="4.1" ry="2.3" transform="rotate(8 369.0 191.8)" fill="#3570c2" opacity="0.85"/><ellipse cx="391.7" cy="174.3" rx="2.5" ry="1.2" transform="rotate(54 391.7 174.3)" fill="#2d66b8" opacity="0.85"/><ellipse cx="361.1" cy="221.7" rx="3.2" ry="2.0" transform="rotate(90 361.1 221.7)" fill="#3570c2" opacity="0.85"/><ellipse cx="346.5" cy="205.9" rx="4.4" ry="2.8" transform="rotate(61 346.5 205.9)" fill="#2a60b0" opacity="0.85"/><ellipse cx="355.0" cy="211.5" rx="4.1" ry="2.6" transform="rotate(42 355.0 211.5)" fill="#2d66b8" opacity="0.85"/><ellipse cx="367.5" cy="227.5" rx="3.9" ry="2.5" transform="rotate(103 367.5 227.5)" fill="#2d66b8" opacity="0.85"/><ellipse cx="367.1" cy="211.2" rx="2.7" ry="1.5" transform="rotate(158 367.1 211.2)" fill="#3068ba" opacity="0.85"/><ellipse cx="348.6" cy="211.8" rx="3.6" ry="2.2" transform="rotate(40 348.6 211.8)" fill="#2458a6" opacity="0.85"/><ellipse cx="340.4" cy="212.0" rx="3.5" ry="2.4" transform="rotate(64 340.4 212.0)" fill="#2a60b0" opacity="0.85"/><ellipse cx="387.7" cy="206.4" rx="2.9" ry="1.4" transform="rotate(175 387.7 206.4)" fill="#3068ba" opacity="0.85"/><ellipse cx="365.4" cy="213.2" rx="2.8" ry="1.3" transform="rotate(174 365.4 213.2)" fill="#2458a6" opacity="0.85"/><ellipse cx="364.8" cy="208.4" rx="2.5" ry="1.4" transform="rotate(59 364.8 208.4)" fill="#2a60b0" opacity="0.85"/><ellipse cx="321.4" cy="204.9" rx="4.3" ry="2.7" transform="rotate(177 321.4 204.9)" fill="#3570c2" opacity="0.85"/><ellipse cx="328.5" cy="221.0" rx="2.7" ry="1.7" transform="rotate(69 328.5 221.0)" fill="#3570c2" opacity="0.85"/><ellipse cx="363.9" cy="180.9" rx="2.9" ry="1.7" transform="rotate(114 363.9 180.9)" fill="#2a60b0" opacity="0.85"/><ellipse cx="339.0" cy="188.6" rx="4.2" ry="2.6" transform="rotate(178 339.0 188.6)" fill="#2d66b8" opacity="0.85"/><ellipse cx="368.9" cy="189.5" rx="2.5" ry="1.6" transform="rotate(164 368.9 189.5)" fill="#2a60b0" opacity="0.85"/><ellipse cx="341.6" cy="196.7" rx="3.4" ry="2.0" transform="rotate(120 341.6 196.7)" fill="#3570c2" opacity="0.85"/><ellipse cx="349.1" cy="181.8" rx="3.7" ry="2.6" transform="rotate(92 349.1 181.8)" fill="#3068ba" opacity="0.85"/><ellipse cx="365.8" cy="187.7" rx="3.2" ry="1.5" transform="rotate(156 365.8 187.7)" fill="#2458a6" opacity="0.85"/><ellipse cx="347.0" cy="234.5" rx="2.6" ry="1.7" transform="rotate(149 347.0 234.5)" fill="#3068ba" opacity="0.85"/><ellipse cx="379.6" cy="199.9" rx="4.3" ry="2.8" transform="rotate(47 379.6 199.9)" fill="#2a60b0" opacity="0.85"/><ellipse cx="327.9" cy="209.6" rx="2.7" ry="1.8" transform="rotate(40 327.9 209.6)" fill="#2458a6" opacity="0.85"/><ellipse cx="341.3" cy="219.9" rx="3.2" ry="2.0" transform="rotate(30 341.3 219.9)" fill="#3068ba" opacity="0.85"/><ellipse cx="359.5" cy="196.6" rx="4.2" ry="2.8" transform="rotate(115 359.5 196.6)" fill="#2d66b8" opacity="0.85"/><ellipse cx="341.9" cy="225.1" rx="3.3" ry="1.8" transform="rotate(155 341.9 225.1)" fill="#2a60b0" opacity="0.85"/><ellipse cx="336.8" cy="222.4" rx="3.5" ry="1.9" transform="rotate(119 336.8 222.4)" fill="#2d66b8" opacity="0.85"/><ellipse cx="347.5" cy="224.6" rx="2.6" ry="1.6" transform="rotate(80 347.5 224.6)" fill="#3068ba" opacity="0.85"/><ellipse cx="350.6" cy="203.2" rx="3.2" ry="1.9" transform="rotate(122 350.6 203.2)" fill="#3068ba" opacity="0.85"/><ellipse cx="332.9" cy="198.9" rx="3.0" ry="1.7" transform="rotate(144 332.9 198.9)" fill="#2d66b8" opacity="0.85"/><ellipse cx="343.9" cy="209.7" rx="4.0" ry="2.1" transform="rotate(32 343.9 209.7)" fill="#2a60b0" opacity="0.85"/><ellipse cx="349.5" cy="224.1" rx="3.6" ry="2.0" transform="rotate(79 349.5 224.1)" fill="#2d66b8" opacity="0.85"/><ellipse cx="356.1" cy="227.4" rx="3.8" ry="2.0" transform="rotate(143 356.1 227.4)" fill="#2d66b8" opacity="0.85"/><ellipse cx="346.1" cy="197.4" rx="4.1" ry="2.8" transform="rotate(8 346.1 197.4)" fill="#3570c2" opacity="0.85"/><ellipse cx="328.6" cy="189.5" rx="3.2" ry="1.9" transform="rotate(63 328.6 189.5)" fill="#2458a6" opacity="0.85"/><ellipse cx="368.7" cy="250.3" rx="3.2" ry="2.0" transform="rotate(128 368.7 250.3)" fill="#2a60b0" opacity="0.85"/><ellipse cx="355.1" cy="207.2" rx="3.3" ry="1.8" transform="rotate(80 355.1 207.2)" fill="#2d66b8" opacity="0.85"/><ellipse cx="369.7" cy="224.4" rx="3.9" ry="2.2" transform="rotate(168 369.7 224.4)" fill="#3570c2" opacity="0.85"/><ellipse cx="353.2" cy="217.1" rx="2.7" ry="1.7" transform="rotate(72 353.2 217.1)" fill="#2d66b8" opacity="0.85"/><ellipse cx="334.6" cy="189.8" rx="2.5" ry="1.5" transform="rotate(72 334.6 189.8)" fill="#2458a6" opacity="0.85"/><ellipse cx="340.6" cy="225.4" rx="2.6" ry="1.7" transform="rotate(83 340.6 225.4)" fill="#2458a6" opacity="0.85"/><ellipse cx="353.7" cy="205.5" rx="4.1" ry="2.4" transform="rotate(16 353.7 205.5)" fill="#2d66b8" opacity="0.85"/><ellipse cx="355.9" cy="202.8" rx="4.3" ry="2.5" transform="rotate(60 355.9 202.8)" fill="#3570c2" opacity="0.85"/><ellipse cx="356.0" cy="205.0" rx="2.5" ry="1.5" transform="rotate(73 356.0 205.0)" fill="#2a60b0" opacity="0.85"/><ellipse cx="338.0" cy="228.1" rx="4.6" ry="2.4" transform="rotate(1 338.0 228.1)" fill="#2a60b0" opacity="0.85"/><ellipse cx="366.5" cy="219.8" rx="3.1" ry="1.7" transform="rotate(120 366.5 219.8)" fill="#3570c2" opacity="0.85"/><ellipse cx="343.0" cy="200.0" rx="3.2" ry="1.8" transform="rotate(45 343.0 200.0)" fill="#2458a6" opacity="0.85"/><ellipse cx="349.4" cy="222.3" rx="3.6" ry="1.9" transform="rotate(9 349.4 222.3)" fill="#3570c2" opacity="0.85"/><ellipse cx="440.6" cy="174.8" rx="4.4" ry="2.4" transform="rotate(25 440.6 174.8)" fill="#3570c2" opacity="0.85"/><ellipse cx="489.3" cy="185.5" rx="3.1" ry="1.8" transform="rotate(9 489.3 185.5)" fill="#3570c2" opacity="0.85"/><ellipse cx="505.5" cy="186.4" rx="2.9" ry="1.6" transform="rotate(6 505.5 186.4)" fill="#3068ba" opacity="0.85"/><ellipse cx="451.2" cy="168.1" rx="3.4" ry="2.3" transform="rotate(107 451.2 168.1)" fill="#3570c2" opacity="0.85"/><ellipse cx="466.7" cy="204.9" rx="4.3" ry="2.1" transform="rotate(32 466.7 204.9)" fill="#3068ba" opacity="0.85"/><ellipse cx="468.2" cy="190.5" rx="2.8" ry="1.9" transform="rotate(107 468.2 190.5)" fill="#2458a6" opacity="0.85"/><ellipse cx="460.8" cy="185.8" rx="4.0" ry="2.5" transform="rotate(40 460.8 185.8)" fill="#3068ba" opacity="0.85"/><ellipse cx="447.9" cy="193.1" rx="4.0" ry="2.3" transform="rotate(140 447.9 193.1)" fill="#3570c2" opacity="0.85"/><ellipse cx="497.5" cy="210.2" rx="3.3" ry="2.0" transform="rotate(171 497.5 210.2)" fill="#2a60b0" opacity="0.85"/><ellipse cx="454.8" cy="179.0" rx="4.3" ry="2.9" transform="rotate(76 454.8 179.0)" fill="#3068ba" opacity="0.85"/><ellipse cx="507.0" cy="202.6" rx="2.9" ry="1.7" transform="rotate(53 507.0 202.6)" fill="#2a60b0" opacity="0.85"/><ellipse cx="451.6" cy="171.3" rx="3.0" ry="1.7" transform="rotate(56 451.6 171.3)" fill="#3068ba" opacity="0.85"/><ellipse cx="487.4" cy="217.5" rx="3.3" ry="1.5" transform="rotate(176 487.4 217.5)" fill="#3570c2" opacity="0.85"/><ellipse cx="473.3" cy="205.6" rx="3.9" ry="2.0" transform="rotate(118 473.3 205.6)" fill="#3068ba" opacity="0.85"/><ellipse cx="458.5" cy="178.8" rx="2.7" ry="1.7" transform="rotate(122 458.5 178.8)" fill="#2d66b8" opacity="0.85"/><ellipse cx="452.8" cy="186.2" rx="3.6" ry="1.7" transform="rotate(118 452.8 186.2)" fill="#3570c2" opacity="0.85"/><ellipse cx="438.4" cy="215.9" rx="4.4" ry="2.1" transform="rotate(89 438.4 215.9)" fill="#3570c2" opacity="0.85"/><ellipse cx="458.1" cy="207.9" rx="4.1" ry="2.0" transform="rotate(105 458.1 207.9)" fill="#3570c2" opacity="0.85"/><ellipse cx="455.1" cy="227.3" rx="2.9" ry="2.0" transform="rotate(152 455.1 227.3)" fill="#2d66b8" opacity="0.85"/><ellipse cx="452.1" cy="191.6" rx="2.8" ry="1.4" transform="rotate(0 452.1 191.6)" fill="#2a60b0" opacity="0.85"/><ellipse cx="483.0" cy="199.3" rx="2.9" ry="1.9" transform="rotate(81 483.0 199.3)" fill="#3068ba" opacity="0.85"/><ellipse cx="497.7" cy="213.5" rx="4.0" ry="2.3" transform="rotate(146 497.7 213.5)" fill="#2458a6" opacity="0.85"/><ellipse cx="473.0" cy="201.0" rx="2.5" ry="1.1" transform="rotate(71 473.0 201.0)" fill="#2458a6" opacity="0.85"/><ellipse cx="491.0" cy="207.7" rx="3.7" ry="2.0" transform="rotate(24 491.0 207.7)" fill="#2a60b0" opacity="0.85"/><ellipse cx="456.4" cy="170.2" rx="3.9" ry="1.8" transform="rotate(65 456.4 170.2)" fill="#2d66b8" opacity="0.85"/><ellipse cx="489.3" cy="168.8" rx="2.7" ry="1.3" transform="rotate(86 489.3 168.8)" fill="#3068ba" opacity="0.85"/><ellipse cx="483.3" cy="207.1" rx="2.7" ry="1.5" transform="rotate(96 483.3 207.1)" fill="#3068ba" opacity="0.85"/><ellipse cx="455.5" cy="193.1" rx="4.5" ry="2.3" transform="rotate(46 455.5 193.1)" fill="#2458a6" opacity="0.85"/><ellipse cx="465.7" cy="202.7" rx="4.3" ry="2.5" transform="rotate(43 465.7 202.7)" fill="#2d66b8" opacity="0.85"/><ellipse cx="520.4" cy="198.5" rx="4.1" ry="2.5" transform="rotate(88 520.4 198.5)" fill="#3068ba" opacity="0.85"/><ellipse cx="474.8" cy="199.9" rx="4.6" ry="2.6" transform="rotate(151 474.8 199.9)" fill="#2458a6" opacity="0.85"/><ellipse cx="441.8" cy="193.5" rx="2.6" ry="1.5" transform="rotate(160 441.8 193.5)" fill="#3068ba" opacity="0.85"/><ellipse cx="463.7" cy="221.6" rx="4.2" ry="2.8" transform="rotate(92 463.7 221.6)" fill="#2d66b8" opacity="0.85"/><ellipse cx="405.2" cy="169.4" rx="3.8" ry="2.3" transform="rotate(7 405.2 169.4)" fill="#2a60b0" opacity="0.85"/><ellipse cx="437.6" cy="218.5" rx="4.4" ry="2.0" transform="rotate(83 437.6 218.5)" fill="#3570c2" opacity="0.85"/><ellipse cx="463.4" cy="191.2" rx="2.7" ry="1.6" transform="rotate(142 463.4 191.2)" fill="#3068ba" opacity="0.85"/><ellipse cx="475.1" cy="206.5" rx="2.8" ry="1.4" transform="rotate(25 475.1 206.5)" fill="#2a60b0" opacity="0.85"/><ellipse cx="459.7" cy="189.5" rx="4.3" ry="2.0" transform="rotate(1 459.7 189.5)" fill="#2458a6" opacity="0.85"/><ellipse cx="471.8" cy="161.9" rx="3.8" ry="1.9" transform="rotate(135 471.8 161.9)" fill="#2d66b8" opacity="0.85"/><ellipse cx="486.4" cy="172.7" rx="4.0" ry="2.1" transform="rotate(17 486.4 172.7)" fill="#3068ba" opacity="0.85"/><ellipse cx="471.4" cy="178.1" rx="3.5" ry="1.8" transform="rotate(139 471.4 178.1)" fill="#2a60b0" opacity="0.85"/><ellipse cx="495.5" cy="180.7" rx="4.2" ry="2.5" transform="rotate(150 495.5 180.7)" fill="#3570c2" opacity="0.85"/><ellipse cx="435.6" cy="209.5" rx="3.5" ry="2.2" transform="rotate(169 435.6 209.5)" fill="#2458a6" opacity="0.85"/><ellipse cx="404.0" cy="187.6" rx="4.5" ry="2.9" transform="rotate(21 404.0 187.6)" fill="#2a60b0" opacity="0.85"/><ellipse cx="462.2" cy="165.1" rx="3.7" ry="2.2" transform="rotate(43 462.2 165.1)" fill="#3570c2" opacity="0.85"/><ellipse cx="411.2" cy="178.7" rx="2.5" ry="1.5" transform="rotate(160 411.2 178.7)" fill="#3570c2" opacity="0.85"/><ellipse cx="472.1" cy="172.5" rx="4.2" ry="2.3" transform="rotate(170 472.1 172.5)" fill="#2d66b8" opacity="0.85"/><ellipse cx="467.0" cy="217.8" rx="3.9" ry="2.6" transform="rotate(143 467.0 217.8)" fill="#3570c2" opacity="0.85"/><ellipse cx="462.6" cy="193.6" rx="2.4" ry="1.2" transform="rotate(88 462.6 193.6)" fill="#3570c2" opacity="0.85"/><ellipse cx="432.9" cy="205.3" rx="3.1" ry="1.6" transform="rotate(82 432.9 205.3)" fill="#2a60b0" opacity="0.85"/><ellipse cx="440.4" cy="205.7" rx="3.1" ry="2.2" transform="rotate(6 440.4 205.7)" fill="#3068ba" opacity="0.85"/><ellipse cx="454.0" cy="179.1" rx="4.2" ry="2.0" transform="rotate(119 454.0 179.1)" fill="#2d66b8" opacity="0.85"/><ellipse cx="425.0" cy="218.1" rx="3.1" ry="1.5" transform="rotate(70 425.0 218.1)" fill="#3068ba" opacity="0.85"/><ellipse cx="470.3" cy="226.9" rx="4.4" ry="2.4" transform="rotate(110 470.3 226.9)" fill="#3570c2" opacity="0.85"/><ellipse cx="441.1" cy="223.6" rx="3.7" ry="2.5" transform="rotate(142 441.1 223.6)" fill="#3068ba" opacity="0.85"/><ellipse cx="459.4" cy="196.3" rx="2.6" ry="1.3" transform="rotate(154 459.4 196.3)" fill="#2458a6" opacity="0.85"/><ellipse cx="468.8" cy="184.1" rx="2.6" ry="1.5" transform="rotate(63 468.8 184.1)" fill="#2458a6" opacity="0.85"/><ellipse cx="455.4" cy="187.8" rx="3.0" ry="1.6" transform="rotate(136 455.4 187.8)" fill="#2458a6" opacity="0.85"/><ellipse cx="443.1" cy="183.3" rx="3.2" ry="2.0" transform="rotate(172 443.1 183.3)" fill="#3570c2" opacity="0.85"/><ellipse cx="503.2" cy="184.3" rx="3.8" ry="2.2" transform="rotate(11 503.2 184.3)" fill="#2d66b8" opacity="0.85"/><ellipse cx="505.5" cy="205.2" rx="3.6" ry="2.0" transform="rotate(123 505.5 205.2)" fill="#2458a6" opacity="0.85"/><ellipse cx="492.7" cy="179.3" rx="2.5" ry="1.3" transform="rotate(135 492.7 179.3)" fill="#3068ba" opacity="0.85"/><ellipse cx="519.5" cy="196.6" rx="2.8" ry="1.9" transform="rotate(49 519.5 196.6)" fill="#2458a6" opacity="0.85"/><ellipse cx="485.4" cy="199.4" rx="3.8" ry="2.0" transform="rotate(135 485.4 199.4)" fill="#3068ba" opacity="0.85"/><ellipse cx="454.1" cy="213.7" rx="4.6" ry="2.8" transform="rotate(76 454.1 213.7)" fill="#3570c2" opacity="0.85"/><ellipse cx="395.7" cy="196.8" rx="4.4" ry="2.3" transform="rotate(65 395.7 196.8)" fill="#2458a6" opacity="0.85"/><ellipse cx="454.3" cy="195.1" rx="4.4" ry="2.2" transform="rotate(96 454.3 195.1)" fill="#2d66b8" opacity="0.85"/><ellipse cx="483.0" cy="216.5" rx="3.1" ry="1.4" transform="rotate(31 483.0 216.5)" fill="#2a60b0" opacity="0.85"/><ellipse cx="503.8" cy="190.2" rx="3.9" ry="2.0" transform="rotate(65 503.8 190.2)" fill="#3570c2" opacity="0.85"/><ellipse cx="469.0" cy="207.8" rx="2.6" ry="1.4" transform="rotate(79 469.0 207.8)" fill="#3570c2" opacity="0.85"/><ellipse cx="443.6" cy="219.8" rx="2.6" ry="1.8" transform="rotate(85 443.6 219.8)" fill="#2458a6" opacity="0.85"/><ellipse cx="417.6" cy="204.0" rx="4.1" ry="2.2" transform="rotate(115 417.6 204.0)" fill="#3068ba" opacity="0.85"/><ellipse cx="456.5" cy="213.8" rx="4.3" ry="2.4" transform="rotate(119 456.5 213.8)" fill="#2d66b8" opacity="0.85"/><ellipse cx="458.3" cy="209.4" rx="3.6" ry="1.9" transform="rotate(165 458.3 209.4)" fill="#2d66b8" opacity="0.85"/><ellipse cx="459.4" cy="221.4" rx="4.2" ry="2.5" transform="rotate(7 459.4 221.4)" fill="#2a60b0" opacity="0.85"/><ellipse cx="443.5" cy="186.3" rx="4.3" ry="2.9" transform="rotate(176 443.5 186.3)" fill="#2d66b8" opacity="0.85"/><ellipse cx="462.9" cy="171.8" rx="4.2" ry="2.0" transform="rotate(74 462.9 171.8)" fill="#2a60b0" opacity="0.85"/><ellipse cx="469.7" cy="203.3" rx="4.0" ry="1.9" transform="rotate(130 469.7 203.3)" fill="#3570c2" opacity="0.85"/><ellipse cx="416.1" cy="217.5" rx="3.2" ry="1.7" transform="rotate(134 416.1 217.5)" fill="#2a60b0" opacity="0.85"/><ellipse cx="452.8" cy="203.0" rx="3.6" ry="2.1" transform="rotate(157 452.8 203.0)" fill="#2a60b0" opacity="0.85"/><ellipse cx="476.9" cy="205.4" rx="3.3" ry="1.9" transform="rotate(12 476.9 205.4)" fill="#2458a6" opacity="0.85"/><ellipse cx="446.1" cy="177.4" rx="3.7" ry="1.9" transform="rotate(73 446.1 177.4)" fill="#3068ba" opacity="0.85"/><ellipse cx="483.3" cy="213.7" rx="3.5" ry="2.4" transform="rotate(136 483.3 213.7)" fill="#2d66b8" opacity="0.85"/><ellipse cx="460.0" cy="166.5" rx="4.3" ry="2.1" transform="rotate(117 460.0 166.5)" fill="#3570c2" opacity="0.85"/><ellipse cx="447.0" cy="187.0" rx="3.7" ry="2.4" transform="rotate(12 447.0 187.0)" fill="#2a60b0" opacity="0.85"/><ellipse cx="420.7" cy="174.1" rx="3.2" ry="1.9" transform="rotate(56 420.7 174.1)" fill="#2d66b8" opacity="0.85"/><ellipse cx="437.8" cy="213.4" rx="4.2" ry="2.3" transform="rotate(13 437.8 213.4)" fill="#2d66b8" opacity="0.85"/><ellipse cx="421.8" cy="201.9" rx="3.5" ry="2.4" transform="rotate(80 421.8 201.9)" fill="#2458a6" opacity="0.85"/><ellipse cx="420.2" cy="185.5" rx="4.2" ry="2.0" transform="rotate(7 420.2 185.5)" fill="#3068ba" opacity="0.85"/><ellipse cx="446.3" cy="229.8" rx="3.6" ry="1.8" transform="rotate(174 446.3 229.8)" fill="#2458a6" opacity="0.85"/><ellipse cx="466.5" cy="184.8" rx="4.2" ry="2.4" transform="rotate(151 466.5 184.8)" fill="#2d66b8" opacity="0.85"/><ellipse cx="464.6" cy="204.4" rx="3.0" ry="1.6" transform="rotate(146 464.6 204.4)" fill="#2a60b0" opacity="0.85"/><ellipse cx="456.8" cy="174.8" rx="3.5" ry="2.1" transform="rotate(72 456.8 174.8)" fill="#3068ba" opacity="0.85"/><ellipse cx="436.7" cy="167.4" rx="3.2" ry="1.9" transform="rotate(10 436.7 167.4)" fill="#2a60b0" opacity="0.85"/><ellipse cx="487.2" cy="202.6" rx="3.4" ry="2.1" transform="rotate(24 487.2 202.6)" fill="#2458a6" opacity="0.85"/><ellipse cx="440.5" cy="199.0" rx="3.3" ry="1.7" transform="rotate(34 440.5 199.0)" fill="#3068ba" opacity="0.85"/><ellipse cx="508.4" cy="210.2" rx="4.1" ry="2.7" transform="rotate(3 508.4 210.2)" fill="#3068ba" opacity="0.85"/><ellipse cx="464.4" cy="184.8" rx="4.2" ry="2.2" transform="rotate(136 464.4 184.8)" fill="#2d66b8" opacity="0.85"/><ellipse cx="496.4" cy="183.1" rx="2.5" ry="1.3" transform="rotate(130 496.4 183.1)" fill="#2d66b8" opacity="0.85"/><ellipse cx="480.0" cy="176.0" rx="3.6" ry="2.1" transform="rotate(135 480.0 176.0)" fill="#3068ba" opacity="0.85"/><ellipse cx="442.4" cy="189.6" rx="2.6" ry="1.7" transform="rotate(64 442.4 189.6)" fill="#2a60b0" opacity="0.85"/><ellipse cx="456.7" cy="196.8" rx="4.1" ry="2.2" transform="rotate(128 456.7 196.8)" fill="#3068ba" opacity="0.85"/><ellipse cx="428.6" cy="219.1" rx="2.6" ry="1.4" transform="rotate(87 428.6 219.1)" fill="#2a60b0" opacity="0.85"/><ellipse cx="417.0" cy="199.3" rx="2.6" ry="1.6" transform="rotate(23 417.0 199.3)" fill="#2458a6" opacity="0.85"/><ellipse cx="444.5" cy="204.2" rx="4.5" ry="2.2" transform="rotate(118 444.5 204.2)" fill="#2a60b0" opacity="0.85"/><ellipse cx="526.8" cy="180.4" rx="4.0" ry="2.2" transform="rotate(79 526.8 180.4)" fill="#3570c2" opacity="0.85"/><ellipse cx="464.6" cy="196.8" rx="3.7" ry="2.0" transform="rotate(39 464.6 196.8)" fill="#2d66b8" opacity="0.85"/><ellipse cx="487.5" cy="156.8" rx="4.1" ry="2.1" transform="rotate(15 487.5 156.8)" fill="#2458a6" opacity="0.85"/><ellipse cx="452.8" cy="193.7" rx="3.8" ry="2.5" transform="rotate(58 452.8 193.7)" fill="#3570c2" opacity="0.85"/><ellipse cx="468.3" cy="161.9" rx="2.8" ry="1.5" transform="rotate(1 468.3 161.9)" fill="#2d66b8" opacity="0.85"/><ellipse cx="503.0" cy="213.2" rx="3.4" ry="2.0" transform="rotate(170 503.0 213.2)" fill="#3570c2" opacity="0.85"/><ellipse cx="464.3" cy="175.0" rx="4.3" ry="2.1" transform="rotate(129 464.3 175.0)" fill="#3068ba" opacity="0.85"/><ellipse cx="456.3" cy="178.0" rx="3.7" ry="1.8" transform="rotate(159 456.3 178.0)" fill="#3570c2" opacity="0.85"/><ellipse cx="454.8" cy="191.8" rx="4.6" ry="2.3" transform="rotate(43 454.8 191.8)" fill="#3570c2" opacity="0.85"/><ellipse cx="424.9" cy="184.7" rx="4.0" ry="2.5" transform="rotate(40 424.9 184.7)" fill="#3068ba" opacity="0.85"/><ellipse cx="517.7" cy="218.4" rx="2.5" ry="1.1" transform="rotate(144 517.7 218.4)" fill="#3068ba" opacity="0.85"/><ellipse cx="519.8" cy="180.9" rx="2.5" ry="1.5" transform="rotate(140 519.8 180.9)" fill="#2458a6" opacity="0.85"/><ellipse cx="478.7" cy="189.2" rx="2.4" ry="1.6" transform="rotate(28 478.7 189.2)" fill="#2d66b8" opacity="0.85"/><ellipse cx="465.0" cy="163.2" rx="2.7" ry="1.6" transform="rotate(17 465.0 163.2)" fill="#2458a6" opacity="0.85"/><ellipse cx="450.4" cy="194.4" rx="4.4" ry="3.0" transform="rotate(142 450.4 194.4)" fill="#2d66b8" opacity="0.85"/><ellipse cx="467.4" cy="196.7" rx="2.6" ry="1.5" transform="rotate(117 467.4 196.7)" fill="#2458a6" opacity="0.85"/><ellipse cx="425.6" cy="179.5" rx="2.5" ry="1.5" transform="rotate(14 425.6 179.5)" fill="#2a60b0" opacity="0.85"/><ellipse cx="426.8" cy="201.1" rx="2.9" ry="1.4" transform="rotate(101 426.8 201.1)" fill="#2458a6" opacity="0.85"/><ellipse cx="472.2" cy="179.2" rx="3.8" ry="1.9" transform="rotate(22 472.2 179.2)" fill="#3570c2" opacity="0.85"/><ellipse cx="495.6" cy="192.8" rx="3.5" ry="2.2" transform="rotate(16 495.6 192.8)" fill="#2d66b8" opacity="0.85"/><ellipse cx="456.1" cy="165.2" rx="2.6" ry="1.4" transform="rotate(153 456.1 165.2)" fill="#2a60b0" opacity="0.85"/><ellipse cx="454.5" cy="207.0" rx="3.7" ry="2.0" transform="rotate(89 454.5 207.0)" fill="#3068ba" opacity="0.85"/><ellipse cx="471.7" cy="195.3" rx="3.9" ry="2.4" transform="rotate(20 471.7 195.3)" fill="#2458a6" opacity="0.85"/><ellipse cx="409.1" cy="224.2" rx="3.7" ry="1.8" transform="rotate(166 409.1 224.2)" fill="#2d66b8" opacity="0.85"/><ellipse cx="501.9" cy="179.7" rx="2.5" ry="1.5" transform="rotate(129 501.9 179.7)" fill="#3570c2" opacity="0.85"/><ellipse cx="464.6" cy="190.1" rx="3.0" ry="1.6" transform="rotate(111 464.6 190.1)" fill="#3068ba" opacity="0.85"/><ellipse cx="461.7" cy="208.0" rx="3.1" ry="1.5" transform="rotate(63 461.7 208.0)" fill="#3570c2" opacity="0.85"/><ellipse cx="492.9" cy="226.8" rx="3.4" ry="2.1" transform="rotate(118 492.9 226.8)" fill="#2a60b0" opacity="0.85"/><ellipse cx="459.2" cy="206.5" rx="2.4" ry="1.2" transform="rotate(74 459.2 206.5)" fill="#2a60b0" opacity="0.85"/><ellipse cx="481.2" cy="188.4" rx="4.1" ry="2.8" transform="rotate(139 481.2 188.4)" fill="#2d66b8" opacity="0.85"/><ellipse cx="450.7" cy="193.6" rx="3.1" ry="1.9" transform="rotate(149 450.7 193.6)" fill="#2a60b0" opacity="0.85"/><ellipse cx="473.5" cy="198.1" rx="2.9" ry="1.3" transform="rotate(82 473.5 198.1)" fill="#2458a6" opacity="0.85"/><ellipse cx="463.7" cy="229.4" rx="3.5" ry="2.3" transform="rotate(168 463.7 229.4)" fill="#2d66b8" opacity="0.85"/><ellipse cx="451.7" cy="186.4" rx="4.3" ry="2.7" transform="rotate(136 451.7 186.4)" fill="#3570c2" opacity="0.85"/><ellipse cx="446.2" cy="149.5" rx="3.4" ry="2.1" transform="rotate(32 446.2 149.5)" fill="#2a60b0" opacity="0.85"/><ellipse cx="462.4" cy="183.4" rx="2.5" ry="1.5" transform="rotate(46 462.4 183.4)" fill="#3068ba" opacity="0.85"/><ellipse cx="440.5" cy="178.4" rx="4.0" ry="2.0" transform="rotate(118 440.5 178.4)" fill="#2d66b8" opacity="0.85"/><ellipse cx="431.2" cy="181.3" rx="2.5" ry="1.2" transform="rotate(55 431.2 181.3)" fill="#2d66b8" opacity="0.85"/><ellipse cx="470.6" cy="197.7" rx="4.0" ry="2.4" transform="rotate(100 470.6 197.7)" fill="#2458a6" opacity="0.85"/><ellipse cx="454.5" cy="183.6" rx="2.8" ry="1.3" transform="rotate(138 454.5 183.6)" fill="#2a60b0" opacity="0.85"/><ellipse cx="432.1" cy="209.6" rx="4.6" ry="3.1" transform="rotate(31 432.1 209.6)" fill="#3570c2" opacity="0.85"/><ellipse cx="436.6" cy="219.3" rx="4.2" ry="2.1" transform="rotate(6 436.6 219.3)" fill="#3068ba" opacity="0.85"/><ellipse cx="473.9" cy="173.3" rx="2.4" ry="1.2" transform="rotate(50 473.9 173.3)" fill="#2d66b8" opacity="0.85"/><ellipse cx="481.6" cy="213.9" rx="3.9" ry="1.9" transform="rotate(106 481.6 213.9)" fill="#3068ba" opacity="0.85"/><ellipse cx="415.7" cy="198.4" rx="3.0" ry="1.4" transform="rotate(10 415.7 198.4)" fill="#2458a6" opacity="0.85"/><ellipse cx="463.5" cy="200.6" rx="4.3" ry="2.1" transform="rotate(3 463.5 200.6)" fill="#2a60b0" opacity="0.85"/><ellipse cx="436.3" cy="213.6" rx="4.1" ry="2.1" transform="rotate(25 436.3 213.6)" fill="#2a60b0" opacity="0.85"/><ellipse cx="480.2" cy="214.6" rx="4.4" ry="2.2" transform="rotate(157 480.2 214.6)" fill="#3570c2" opacity="0.85"/><ellipse cx="467.5" cy="193.4" rx="4.4" ry="2.8" transform="rotate(117 467.5 193.4)" fill="#2a60b0" opacity="0.85"/><ellipse cx="465.0" cy="227.5" rx="2.4" ry="1.1" transform="rotate(47 465.0 227.5)" fill="#3570c2" opacity="0.85"/><ellipse cx="471.3" cy="185.4" rx="3.4" ry="1.6" transform="rotate(5 471.3 185.4)" fill="#3570c2" opacity="0.85"/><ellipse cx="435.2" cy="188.9" rx="3.5" ry="2.4" transform="rotate(73 435.2 188.9)" fill="#3068ba" opacity="0.85"/><ellipse cx="454.3" cy="197.4" rx="3.0" ry="1.7" transform="rotate(34 454.3 197.4)" fill="#3068ba" opacity="0.85"/><ellipse cx="490.7" cy="187.4" rx="2.9" ry="1.8" transform="rotate(13 490.7 187.4)" fill="#2458a6" opacity="0.85"/><ellipse cx="381.5" cy="152.5" rx="3.2" ry="1.5" transform="rotate(167 381.5 152.5)" fill="#3570c2" opacity="0.85"/><ellipse cx="444.1" cy="193.2" rx="4.3" ry="2.2" transform="rotate(31 444.1 193.2)" fill="#2d66b8" opacity="0.85"/><ellipse cx="434.7" cy="197.5" rx="4.1" ry="2.0" transform="rotate(170 434.7 197.5)" fill="#3570c2" opacity="0.85"/><ellipse cx="454.4" cy="189.9" rx="4.1" ry="1.9" transform="rotate(51 454.4 189.9)" fill="#3570c2" opacity="0.85"/><ellipse cx="446.7" cy="196.1" rx="3.8" ry="2.2" transform="rotate(2 446.7 196.1)" fill="#2d66b8" opacity="0.85"/><ellipse cx="438.8" cy="176.6" rx="3.8" ry="2.5" transform="rotate(6 438.8 176.6)" fill="#2458a6" opacity="0.85"/><ellipse cx="476.9" cy="206.3" rx="4.4" ry="2.3" transform="rotate(70 476.9 206.3)" fill="#2d66b8" opacity="0.85"/><ellipse cx="476.6" cy="183.5" rx="2.8" ry="1.4" transform="rotate(162 476.6 183.5)" fill="#2458a6" opacity="0.85"/><ellipse cx="424.0" cy="201.4" rx="4.3" ry="2.2" transform="rotate(81 424.0 201.4)" fill="#3068ba" opacity="0.85"/><ellipse cx="473.1" cy="183.9" rx="2.8" ry="1.3" transform="rotate(57 473.1 183.9)" fill="#2d66b8" opacity="0.85"/><ellipse cx="460.3" cy="192.8" rx="2.9" ry="1.7" transform="rotate(171 460.3 192.8)" fill="#2458a6" opacity="0.85"/><ellipse cx="540.1" cy="193.0" rx="2.9" ry="1.9" transform="rotate(121 540.1 193.0)" fill="#3068ba" opacity="0.85"/><ellipse cx="528.2" cy="205.2" rx="3.4" ry="1.7" transform="rotate(180 528.2 205.2)" fill="#2a60b0" opacity="0.85"/><ellipse cx="533.2" cy="217.1" rx="4.0" ry="2.3" transform="rotate(74 533.2 217.1)" fill="#3068ba" opacity="0.85"/><ellipse cx="524.5" cy="246.9" rx="4.2" ry="2.5" transform="rotate(28 524.5 246.9)" fill="#3570c2" opacity="0.85"/><ellipse cx="495.4" cy="205.0" rx="2.9" ry="1.4" transform="rotate(25 495.4 205.0)" fill="#3570c2" opacity="0.85"/><ellipse cx="527.9" cy="222.4" rx="3.7" ry="2.5" transform="rotate(94 527.9 222.4)" fill="#2d66b8" opacity="0.85"/><ellipse cx="531.4" cy="230.3" rx="4.2" ry="2.7" transform="rotate(14 531.4 230.3)" fill="#2a60b0" opacity="0.85"/><ellipse cx="542.5" cy="199.0" rx="4.5" ry="2.3" transform="rotate(155 542.5 199.0)" fill="#3570c2" opacity="0.85"/><ellipse cx="538.1" cy="225.1" rx="4.5" ry="3.1" transform="rotate(148 538.1 225.1)" fill="#2d66b8" opacity="0.85"/><ellipse cx="510.5" cy="257.6" rx="3.3" ry="1.9" transform="rotate(157 510.5 257.6)" fill="#2a60b0" opacity="0.85"/><ellipse cx="531.3" cy="192.1" rx="2.7" ry="1.4" transform="rotate(92 531.3 192.1)" fill="#2458a6" opacity="0.85"/><ellipse cx="494.0" cy="199.4" rx="4.5" ry="2.3" transform="rotate(162 494.0 199.4)" fill="#2d66b8" opacity="0.85"/><ellipse cx="510.4" cy="208.0" rx="4.3" ry="3.0" transform="rotate(69 510.4 208.0)" fill="#3068ba" opacity="0.85"/><ellipse cx="483.2" cy="237.1" rx="4.2" ry="2.6" transform="rotate(46 483.2 237.1)" fill="#2d66b8" opacity="0.85"/><ellipse cx="507.4" cy="201.6" rx="4.2" ry="1.9" transform="rotate(121 507.4 201.6)" fill="#3570c2" opacity="0.85"/><ellipse cx="505.5" cy="239.0" rx="4.4" ry="2.5" transform="rotate(172 505.5 239.0)" fill="#2a60b0" opacity="0.85"/><ellipse cx="524.9" cy="203.1" rx="4.5" ry="2.3" transform="rotate(78 524.9 203.1)" fill="#3570c2" opacity="0.85"/><ellipse cx="514.1" cy="220.2" rx="3.2" ry="2.0" transform="rotate(135 514.1 220.2)" fill="#3570c2" opacity="0.85"/><ellipse cx="505.9" cy="190.5" rx="2.9" ry="1.5" transform="rotate(23 505.9 190.5)" fill="#2a60b0" opacity="0.85"/><ellipse cx="538.5" cy="228.1" rx="3.8" ry="2.3" transform="rotate(159 538.5 228.1)" fill="#3570c2" opacity="0.85"/><ellipse cx="484.2" cy="195.1" rx="3.2" ry="2.0" transform="rotate(104 484.2 195.1)" fill="#3570c2" opacity="0.85"/><ellipse cx="508.9" cy="243.2" rx="3.9" ry="2.5" transform="rotate(125 508.9 243.2)" fill="#3570c2" opacity="0.85"/><ellipse cx="490.1" cy="246.4" rx="4.2" ry="2.6" transform="rotate(138 490.1 246.4)" fill="#3068ba" opacity="0.85"/><ellipse cx="508.7" cy="173.0" rx="4.1" ry="2.1" transform="rotate(35 508.7 173.0)" fill="#2a60b0" opacity="0.85"/><ellipse cx="525.4" cy="220.3" rx="3.9" ry="2.5" transform="rotate(82 525.4 220.3)" fill="#2d66b8" opacity="0.85"/><ellipse cx="523.0" cy="217.8" rx="4.0" ry="2.1" transform="rotate(96 523.0 217.8)" fill="#2d66b8" opacity="0.85"/><ellipse cx="532.4" cy="184.5" rx="2.9" ry="1.5" transform="rotate(15 532.4 184.5)" fill="#3068ba" opacity="0.85"/><ellipse cx="519.3" cy="241.4" rx="2.4" ry="1.2" transform="rotate(178 519.3 241.4)" fill="#2d66b8" opacity="0.85"/><ellipse cx="532.1" cy="213.2" rx="3.5" ry="1.9" transform="rotate(60 532.1 213.2)" fill="#3570c2" opacity="0.85"/><ellipse cx="521.4" cy="180.8" rx="4.4" ry="2.3" transform="rotate(60 521.4 180.8)" fill="#2a60b0" opacity="0.85"/><ellipse cx="543.4" cy="227.8" rx="3.0" ry="1.9" transform="rotate(125 543.4 227.8)" fill="#2a60b0" opacity="0.85"/><ellipse cx="510.5" cy="231.4" rx="4.4" ry="2.6" transform="rotate(34 510.5 231.4)" fill="#2d66b8" opacity="0.85"/><ellipse cx="522.3" cy="182.9" rx="3.0" ry="1.4" transform="rotate(76 522.3 182.9)" fill="#2a60b0" opacity="0.85"/><ellipse cx="531.6" cy="186.1" rx="3.7" ry="1.8" transform="rotate(17 531.6 186.1)" fill="#3570c2" opacity="0.85"/><ellipse cx="532.7" cy="187.0" rx="2.6" ry="1.6" transform="rotate(42 532.7 187.0)" fill="#2458a6" opacity="0.85"/><ellipse cx="519.3" cy="216.1" rx="2.9" ry="1.9" transform="rotate(168 519.3 216.1)" fill="#3570c2" opacity="0.85"/><ellipse cx="522.8" cy="228.0" rx="3.6" ry="2.3" transform="rotate(76 522.8 228.0)" fill="#2d66b8" opacity="0.85"/><ellipse cx="522.5" cy="218.6" rx="2.9" ry="1.8" transform="rotate(92 522.5 218.6)" fill="#3570c2" opacity="0.85"/><ellipse cx="492.5" cy="191.1" rx="3.1" ry="1.9" transform="rotate(37 492.5 191.1)" fill="#2a60b0" opacity="0.85"/><ellipse cx="526.4" cy="219.4" rx="3.1" ry="2.0" transform="rotate(83 526.4 219.4)" fill="#2a60b0" opacity="0.85"/><ellipse cx="504.4" cy="227.4" rx="4.1" ry="2.2" transform="rotate(55 504.4 227.4)" fill="#2a60b0" opacity="0.85"/><ellipse cx="542.8" cy="221.1" rx="4.4" ry="3.0" transform="rotate(27 542.8 221.1)" fill="#3570c2" opacity="0.85"/><ellipse cx="537.7" cy="217.8" rx="4.0" ry="2.7" transform="rotate(141 537.7 217.8)" fill="#3570c2" opacity="0.85"/><ellipse cx="491.1" cy="209.7" rx="2.6" ry="1.4" transform="rotate(19 491.1 209.7)" fill="#3570c2" opacity="0.85"/><ellipse cx="552.0" cy="227.3" rx="3.4" ry="2.2" transform="rotate(92 552.0 227.3)" fill="#3570c2" opacity="0.85"/><ellipse cx="524.2" cy="198.9" rx="4.4" ry="3.0" transform="rotate(80 524.2 198.9)" fill="#2458a6" opacity="0.85"/><ellipse cx="551.6" cy="224.1" rx="4.4" ry="2.1" transform="rotate(16 551.6 224.1)" fill="#2458a6" opacity="0.85"/><ellipse cx="536.1" cy="228.6" rx="3.1" ry="1.4" transform="rotate(111 536.1 228.6)" fill="#2a60b0" opacity="0.85"/><ellipse cx="514.9" cy="217.7" rx="2.6" ry="1.8" transform="rotate(71 514.9 217.7)" fill="#2d66b8" opacity="0.85"/><ellipse cx="561.1" cy="222.3" rx="3.6" ry="2.2" transform="rotate(121 561.1 222.3)" fill="#2a60b0" opacity="0.85"/><ellipse cx="533.5" cy="232.7" rx="2.8" ry="1.4" transform="rotate(150 533.5 232.7)" fill="#3570c2" opacity="0.85"/><ellipse cx="517.5" cy="199.6" rx="3.4" ry="2.0" transform="rotate(160 517.5 199.6)" fill="#2d66b8" opacity="0.85"/><ellipse cx="520.2" cy="242.6" rx="4.4" ry="2.5" transform="rotate(161 520.2 242.6)" fill="#3068ba" opacity="0.85"/><ellipse cx="510.1" cy="206.6" rx="4.0" ry="2.5" transform="rotate(84 510.1 206.6)" fill="#3068ba" opacity="0.85"/><ellipse cx="521.7" cy="177.7" rx="4.3" ry="2.5" transform="rotate(88 521.7 177.7)" fill="#3068ba" opacity="0.85"/><ellipse cx="543.5" cy="218.5" rx="3.9" ry="2.7" transform="rotate(147 543.5 218.5)" fill="#2458a6" opacity="0.85"/><ellipse cx="517.1" cy="224.3" rx="3.2" ry="1.6" transform="rotate(134 517.1 224.3)" fill="#3570c2" opacity="0.85"/><ellipse cx="522.3" cy="215.1" rx="3.2" ry="2.0" transform="rotate(42 522.3 215.1)" fill="#2a60b0" opacity="0.85"/><ellipse cx="491.4" cy="192.7" rx="3.1" ry="2.1" transform="rotate(171 491.4 192.7)" fill="#2a60b0" opacity="0.85"/><ellipse cx="536.7" cy="210.6" rx="3.3" ry="1.7" transform="rotate(111 536.7 210.6)" fill="#3068ba" opacity="0.85"/><ellipse cx="549.2" cy="217.0" rx="4.1" ry="2.4" transform="rotate(136 549.2 217.0)" fill="#3068ba" opacity="0.85"/><ellipse cx="532.7" cy="193.0" rx="4.4" ry="2.1" transform="rotate(9 532.7 193.0)" fill="#3068ba" opacity="0.85"/><ellipse cx="527.4" cy="203.2" rx="3.2" ry="2.1" transform="rotate(118 527.4 203.2)" fill="#3068ba" opacity="0.85"/><ellipse cx="523.8" cy="241.5" rx="2.5" ry="1.7" transform="rotate(121 523.8 241.5)" fill="#3068ba" opacity="0.85"/><ellipse cx="543.6" cy="186.8" rx="4.5" ry="2.8" transform="rotate(25 543.6 186.8)" fill="#2458a6" opacity="0.85"/><ellipse cx="518.7" cy="210.7" rx="3.6" ry="2.0" transform="rotate(157 518.7 210.7)" fill="#2a60b0" opacity="0.85"/><ellipse cx="502.1" cy="218.5" rx="4.2" ry="2.7" transform="rotate(135 502.1 218.5)" fill="#2a60b0" opacity="0.85"/><ellipse cx="522.0" cy="222.7" rx="2.5" ry="1.6" transform="rotate(59 522.0 222.7)" fill="#3068ba" opacity="0.85"/><ellipse cx="504.8" cy="231.9" rx="2.5" ry="1.7" transform="rotate(90 504.8 231.9)" fill="#3570c2" opacity="0.85"/><ellipse cx="514.2" cy="232.7" rx="3.8" ry="2.6" transform="rotate(68 514.2 232.7)" fill="#2458a6" opacity="0.85"/><ellipse cx="483.6" cy="221.6" rx="3.1" ry="2.1" transform="rotate(132 483.6 221.6)" fill="#2458a6" opacity="0.85"/><ellipse cx="543.2" cy="203.4" rx="4.4" ry="2.0" transform="rotate(180 543.2 203.4)" fill="#3570c2" opacity="0.85"/><ellipse cx="489.5" cy="232.4" rx="2.9" ry="1.5" transform="rotate(120 489.5 232.4)" fill="#2a60b0" opacity="0.85"/><ellipse cx="546.0" cy="204.2" rx="3.8" ry="2.3" transform="rotate(155 546.0 204.2)" fill="#3570c2" opacity="0.85"/><ellipse cx="505.7" cy="205.3" rx="3.3" ry="1.6" transform="rotate(129 505.7 205.3)" fill="#2458a6" opacity="0.85"/><ellipse cx="516.4" cy="234.5" rx="2.6" ry="1.7" transform="rotate(134 516.4 234.5)" fill="#2458a6" opacity="0.85"/><ellipse cx="526.1" cy="203.8" rx="4.6" ry="2.6" transform="rotate(159 526.1 203.8)" fill="#3570c2" opacity="0.85"/><ellipse cx="517.2" cy="209.9" rx="3.1" ry="2.2" transform="rotate(75 517.2 209.9)" fill="#2458a6" opacity="0.85"/><ellipse cx="520.7" cy="204.3" rx="3.5" ry="2.2" transform="rotate(98 520.7 204.3)" fill="#3068ba" opacity="0.85"/><ellipse cx="508.0" cy="205.0" rx="4.4" ry="2.2" transform="rotate(150 508.0 205.0)" fill="#2d66b8" opacity="0.85"/><ellipse cx="541.5" cy="203.6" rx="4.3" ry="2.3" transform="rotate(137 541.5 203.6)" fill="#2d66b8" opacity="0.85"/><ellipse cx="523.0" cy="218.5" rx="4.4" ry="3.0" transform="rotate(90 523.0 218.5)" fill="#3068ba" opacity="0.85"/><ellipse cx="479.8" cy="212.4" rx="2.7" ry="1.7" transform="rotate(101 479.8 212.4)" fill="#2d66b8" opacity="0.85"/><ellipse cx="500.1" cy="225.5" rx="3.0" ry="1.7" transform="rotate(47 500.1 225.5)" fill="#2458a6" opacity="0.85"/><ellipse cx="517.8" cy="211.0" rx="4.2" ry="2.8" transform="rotate(139 517.8 211.0)" fill="#3068ba" opacity="0.85"/><ellipse cx="521.9" cy="202.6" rx="3.5" ry="1.7" transform="rotate(46 521.9 202.6)" fill="#2458a6" opacity="0.85"/><ellipse cx="538.8" cy="245.4" rx="4.0" ry="1.9" transform="rotate(176 538.8 245.4)" fill="#3570c2" opacity="0.85"/><ellipse cx="515.2" cy="189.3" rx="4.2" ry="2.9" transform="rotate(49 515.2 189.3)" fill="#2d66b8" opacity="0.85"/><ellipse cx="520.9" cy="215.1" rx="4.3" ry="2.9" transform="rotate(156 520.9 215.1)" fill="#2458a6" opacity="0.85"/><ellipse cx="517.6" cy="206.6" rx="3.8" ry="2.7" transform="rotate(83 517.6 206.6)" fill="#2a60b0" opacity="0.85"/><ellipse cx="497.6" cy="229.6" rx="2.9" ry="1.9" transform="rotate(179 497.6 229.6)" fill="#2a60b0" opacity="0.85"/><ellipse cx="510.6" cy="205.3" rx="2.9" ry="1.4" transform="rotate(29 510.6 205.3)" fill="#3068ba" opacity="0.85"/><ellipse cx="514.1" cy="210.4" rx="3.3" ry="2.2" transform="rotate(53 514.1 210.4)" fill="#2458a6" opacity="0.85"/><ellipse cx="478.4" cy="218.5" rx="2.8" ry="1.7" transform="rotate(85 478.4 218.5)" fill="#3068ba" opacity="0.85"/><ellipse cx="508.7" cy="215.0" rx="3.2" ry="1.5" transform="rotate(63 508.7 215.0)" fill="#2d66b8" opacity="0.85"/><ellipse cx="510.3" cy="229.0" rx="3.9" ry="2.1" transform="rotate(63 510.3 229.0)" fill="#3068ba" opacity="0.85"/><ellipse cx="488.3" cy="221.9" rx="2.5" ry="1.6" transform="rotate(99 488.3 221.9)" fill="#3570c2" opacity="0.85"/><ellipse cx="506.3" cy="233.8" rx="3.3" ry="1.8" transform="rotate(166 506.3 233.8)" fill="#2a60b0" opacity="0.85"/><ellipse cx="536.7" cy="235.3" rx="2.4" ry="1.5" transform="rotate(134 536.7 235.3)" fill="#2a60b0" opacity="0.85"/><ellipse cx="514.0" cy="199.8" rx="3.7" ry="1.8" transform="rotate(59 514.0 199.8)" fill="#3068ba" opacity="0.85"/><ellipse cx="504.4" cy="209.8" rx="2.7" ry="1.8" transform="rotate(33 504.4 209.8)" fill="#2d66b8" opacity="0.85"/><ellipse cx="497.4" cy="194.7" rx="3.0" ry="1.7" transform="rotate(79 497.4 194.7)" fill="#2d66b8" opacity="0.85"/><ellipse cx="508.8" cy="231.8" rx="3.8" ry="2.2" transform="rotate(167 508.8 231.8)" fill="#2a60b0" opacity="0.85"/><ellipse cx="521.3" cy="238.0" rx="4.3" ry="1.9" transform="rotate(102 521.3 238.0)" fill="#3570c2" opacity="0.85"/><ellipse cx="552.3" cy="227.6" rx="2.4" ry="1.6" transform="rotate(113 552.3 227.6)" fill="#2a60b0" opacity="0.85"/><ellipse cx="526.7" cy="206.1" rx="2.4" ry="1.2" transform="rotate(124 526.7 206.1)" fill="#2d66b8" opacity="0.85"/><ellipse cx="521.2" cy="205.8" rx="2.9" ry="1.6" transform="rotate(56 521.2 205.8)" fill="#2d66b8" opacity="0.85"/><ellipse cx="519.0" cy="188.3" rx="4.5" ry="2.6" transform="rotate(164 519.0 188.3)" fill="#2d66b8" opacity="0.85"/><ellipse cx="523.5" cy="205.6" rx="2.5" ry="1.4" transform="rotate(151 523.5 205.6)" fill="#3570c2" opacity="0.85"/><ellipse cx="499.4" cy="226.1" rx="2.8" ry="1.3" transform="rotate(128 499.4 226.1)" fill="#2a60b0" opacity="0.85"/><ellipse cx="528.0" cy="216.4" rx="2.4" ry="1.5" transform="rotate(22 528.0 216.4)" fill="#3068ba" opacity="0.85"/><ellipse cx="530.2" cy="221.5" rx="3.7" ry="2.3" transform="rotate(33 530.2 221.5)" fill="#3068ba" opacity="0.85"/><ellipse cx="489.6" cy="250.9" rx="3.3" ry="1.7" transform="rotate(78 489.6 250.9)" fill="#3068ba" opacity="0.85"/><ellipse cx="518.0" cy="215.4" rx="4.4" ry="2.2" transform="rotate(121 518.0 215.4)" fill="#3068ba" opacity="0.85"/><ellipse cx="528.9" cy="192.3" rx="3.4" ry="2.0" transform="rotate(118 528.9 192.3)" fill="#2d66b8" opacity="0.85"/><ellipse cx="526.7" cy="194.3" rx="2.4" ry="1.4" transform="rotate(159 526.7 194.3)" fill="#2d66b8" opacity="0.85"/><ellipse cx="508.7" cy="206.0" rx="4.5" ry="3.0" transform="rotate(71 508.7 206.0)" fill="#2458a6" opacity="0.85"/><ellipse cx="500.8" cy="213.0" rx="2.7" ry="1.7" transform="rotate(124 500.8 213.0)" fill="#2458a6" opacity="0.85"/><ellipse cx="532.3" cy="187.1" rx="2.4" ry="1.6" transform="rotate(93 532.3 187.1)" fill="#3570c2" opacity="0.85"/><ellipse cx="518.8" cy="204.5" rx="3.9" ry="2.1" transform="rotate(68 518.8 204.5)" fill="#3570c2" opacity="0.85"/><ellipse cx="562.2" cy="204.3" rx="3.1" ry="1.7" transform="rotate(111 562.2 204.3)" fill="#2a60b0" opacity="0.85"/><ellipse cx="534.5" cy="214.5" rx="3.8" ry="1.7" transform="rotate(120 534.5 214.5)" fill="#2458a6" opacity="0.85"/><ellipse cx="516.0" cy="201.4" rx="3.0" ry="1.8" transform="rotate(136 516.0 201.4)" fill="#3068ba" opacity="0.85"/><ellipse cx="501.5" cy="205.6" rx="4.3" ry="3.0" transform="rotate(171 501.5 205.6)" fill="#3570c2" opacity="0.85"/><ellipse cx="549.7" cy="203.0" rx="4.1" ry="2.4" transform="rotate(27 549.7 203.0)" fill="#2a60b0" opacity="0.85"/><ellipse cx="505.6" cy="205.8" rx="2.6" ry="1.7" transform="rotate(168 505.6 205.8)" fill="#2d66b8" opacity="0.85"/><ellipse cx="495.4" cy="239.1" rx="3.4" ry="2.3" transform="rotate(109 495.4 239.1)" fill="#2a60b0" opacity="0.85"/><ellipse cx="539.3" cy="224.0" rx="2.5" ry="1.6" transform="rotate(66 539.3 224.0)" fill="#2a60b0" opacity="0.85"/><ellipse cx="527.9" cy="238.9" rx="3.2" ry="2.2" transform="rotate(50 527.9 238.9)" fill="#2458a6" opacity="0.85"/><ellipse cx="541.2" cy="214.8" rx="4.2" ry="2.7" transform="rotate(103 541.2 214.8)" fill="#3570c2" opacity="0.85"/><ellipse cx="512.1" cy="203.5" rx="3.9" ry="2.7" transform="rotate(123 512.1 203.5)" fill="#2d66b8" opacity="0.85"/><ellipse cx="521.9" cy="205.6" rx="2.5" ry="1.8" transform="rotate(122 521.9 205.6)" fill="#2458a6" opacity="0.85"/><ellipse cx="518.5" cy="175.6" rx="4.3" ry="2.8" transform="rotate(63 518.5 175.6)" fill="#2a60b0" opacity="0.85"/><ellipse cx="523.9" cy="211.0" rx="2.6" ry="1.7" transform="rotate(86 523.9 211.0)" fill="#2d66b8" opacity="0.85"/><ellipse cx="527.3" cy="237.2" rx="2.6" ry="1.3" transform="rotate(158 527.3 237.2)" fill="#2458a6" opacity="0.85"/><ellipse cx="525.9" cy="223.4" rx="2.7" ry="1.3" transform="rotate(147 525.9 223.4)" fill="#2458a6" opacity="0.85"/><ellipse cx="521.3" cy="225.0" rx="2.9" ry="1.9" transform="rotate(163 521.3 225.0)" fill="#3068ba" opacity="0.85"/><ellipse cx="522.0" cy="252.1" rx="4.4" ry="2.7" transform="rotate(40 522.0 252.1)" fill="#2d66b8" opacity="0.85"/><ellipse cx="506.7" cy="199.8" rx="3.4" ry="1.6" transform="rotate(154 506.7 199.8)" fill="#3570c2" opacity="0.85"/><ellipse cx="531.4" cy="191.1" rx="2.9" ry="1.6" transform="rotate(134 531.4 191.1)" fill="#2458a6" opacity="0.85"/><ellipse cx="562.1" cy="206.0" rx="3.9" ry="2.3" transform="rotate(29 562.1 206.0)" fill="#3570c2" opacity="0.85"/><ellipse cx="553.0" cy="191.1" rx="3.4" ry="2.3" transform="rotate(162 553.0 191.1)" fill="#2458a6" opacity="0.85"/><ellipse cx="506.4" cy="230.8" rx="3.7" ry="1.8" transform="rotate(137 506.4 230.8)" fill="#2d66b8" opacity="0.85"/><ellipse cx="490.9" cy="246.5" rx="2.7" ry="1.6" transform="rotate(177 490.9 246.5)" fill="#2a60b0" opacity="0.85"/><ellipse cx="504.8" cy="229.0" rx="2.5" ry="1.2" transform="rotate(56 504.8 229.0)" fill="#2d66b8" opacity="0.85"/><ellipse cx="541.3" cy="210.0" rx="4.1" ry="2.8" transform="rotate(67 541.3 210.0)" fill="#2a60b0" opacity="0.85"/><ellipse cx="480.4" cy="219.7" rx="4.5" ry="2.8" transform="rotate(36 480.4 219.7)" fill="#3068ba" opacity="0.85"/><ellipse cx="506.2" cy="232.6" rx="4.5" ry="2.3" transform="rotate(54 506.2 232.6)" fill="#2458a6" opacity="0.85"/><ellipse cx="524.4" cy="215.9" rx="2.9" ry="1.6" transform="rotate(100 524.4 215.9)" fill="#2d66b8" opacity="0.85"/><ellipse cx="522.3" cy="202.6" rx="3.0" ry="1.4" transform="rotate(20 522.3 202.6)" fill="#3068ba" opacity="0.85"/><ellipse cx="549.7" cy="240.1" rx="2.5" ry="1.4" transform="rotate(0 549.7 240.1)" fill="#2a60b0" opacity="0.85"/><ellipse cx="551.5" cy="280.4" rx="3.3" ry="2.2" transform="rotate(2 551.5 280.4)" fill="#2458a6" opacity="0.85"/><ellipse cx="550.4" cy="260.0" rx="4.6" ry="3.1" transform="rotate(103 550.4 260.0)" fill="#3068ba" opacity="0.85"/><ellipse cx="572.9" cy="283.3" rx="4.3" ry="2.5" transform="rotate(48 572.9 283.3)" fill="#2a60b0" opacity="0.85"/><ellipse cx="551.9" cy="248.5" rx="2.5" ry="1.5" transform="rotate(179 551.9 248.5)" fill="#3570c2" opacity="0.85"/><ellipse cx="567.6" cy="278.3" rx="2.7" ry="1.5" transform="rotate(49 567.6 278.3)" fill="#2d66b8" opacity="0.85"/><ellipse cx="583.9" cy="247.8" rx="3.8" ry="2.3" transform="rotate(179 583.9 247.8)" fill="#3068ba" opacity="0.85"/><ellipse cx="550.0" cy="272.6" rx="4.4" ry="2.4" transform="rotate(24 550.0 272.6)" fill="#2458a6" opacity="0.85"/><ellipse cx="559.4" cy="269.0" rx="3.7" ry="2.4" transform="rotate(27 559.4 269.0)" fill="#3068ba" opacity="0.85"/><ellipse cx="551.7" cy="280.6" rx="3.5" ry="2.0" transform="rotate(17 551.7 280.6)" fill="#2d66b8" opacity="0.85"/><ellipse cx="555.1" cy="250.8" rx="4.4" ry="2.0" transform="rotate(25 555.1 250.8)" fill="#2a60b0" opacity="0.85"/><ellipse cx="556.2" cy="268.8" rx="3.3" ry="1.7" transform="rotate(86 556.2 268.8)" fill="#2d66b8" opacity="0.85"/><ellipse cx="558.3" cy="284.6" rx="3.4" ry="2.0" transform="rotate(150 558.3 284.6)" fill="#2d66b8" opacity="0.85"/><ellipse cx="551.4" cy="256.1" rx="2.6" ry="1.4" transform="rotate(13 551.4 256.1)" fill="#2d66b8" opacity="0.85"/><ellipse cx="554.0" cy="267.3" rx="2.6" ry="1.7" transform="rotate(136 554.0 267.3)" fill="#3570c2" opacity="0.85"/><ellipse cx="556.2" cy="270.9" rx="3.1" ry="2.1" transform="rotate(55 556.2 270.9)" fill="#2458a6" opacity="0.85"/><ellipse cx="551.1" cy="266.0" rx="2.7" ry="1.8" transform="rotate(8 551.1 266.0)" fill="#3068ba" opacity="0.85"/><ellipse cx="562.7" cy="237.3" rx="2.5" ry="1.1" transform="rotate(51 562.7 237.3)" fill="#2458a6" opacity="0.85"/><ellipse cx="555.3" cy="237.6" rx="2.8" ry="1.7" transform="rotate(92 555.3 237.6)" fill="#3570c2" opacity="0.85"/><ellipse cx="555.4" cy="278.9" rx="3.4" ry="2.1" transform="rotate(43 555.4 278.9)" fill="#3570c2" opacity="0.85"/><ellipse cx="563.5" cy="271.3" rx="3.0" ry="1.6" transform="rotate(97 563.5 271.3)" fill="#3068ba" opacity="0.85"/><ellipse cx="554.6" cy="284.8" rx="3.3" ry="2.0" transform="rotate(40 554.6 284.8)" fill="#3570c2" opacity="0.85"/><ellipse cx="559.5" cy="264.7" rx="2.8" ry="1.5" transform="rotate(10 559.5 264.7)" fill="#2d66b8" opacity="0.85"/><ellipse cx="545.8" cy="277.7" rx="2.6" ry="1.8" transform="rotate(46 545.8 277.7)" fill="#2458a6" opacity="0.85"/><ellipse cx="558.7" cy="250.1" rx="4.2" ry="2.4" transform="rotate(168 558.7 250.1)" fill="#3068ba" opacity="0.85"/><ellipse cx="564.9" cy="268.8" rx="2.5" ry="1.2" transform="rotate(119 564.9 268.8)" fill="#2d66b8" opacity="0.85"/><ellipse cx="559.9" cy="235.6" rx="4.2" ry="2.1" transform="rotate(13 559.9 235.6)" fill="#3068ba" opacity="0.85"/><ellipse cx="543.4" cy="249.7" rx="3.9" ry="2.1" transform="rotate(63 543.4 249.7)" fill="#2a60b0" opacity="0.85"/><ellipse cx="561.1" cy="276.1" rx="2.7" ry="1.6" transform="rotate(32 561.1 276.1)" fill="#3570c2" opacity="0.85"/><ellipse cx="564.5" cy="245.5" rx="4.3" ry="2.7" transform="rotate(28 564.5 245.5)" fill="#2d66b8" opacity="0.85"/><ellipse cx="557.4" cy="255.7" rx="2.7" ry="1.8" transform="rotate(40 557.4 255.7)" fill="#2d66b8" opacity="0.85"/><ellipse cx="577.5" cy="225.4" rx="4.4" ry="2.8" transform="rotate(57 577.5 225.4)" fill="#2458a6" opacity="0.85"/><ellipse cx="534.9" cy="275.6" rx="4.2" ry="2.5" transform="rotate(141 534.9 275.6)" fill="#2a60b0" opacity="0.85"/><ellipse cx="545.6" cy="259.9" rx="3.2" ry="1.9" transform="rotate(61 545.6 259.9)" fill="#2458a6" opacity="0.85"/><ellipse cx="568.6" cy="260.6" rx="2.7" ry="1.2" transform="rotate(119 568.6 260.6)" fill="#3570c2" opacity="0.85"/><ellipse cx="553.0" cy="253.5" rx="3.0" ry="1.9" transform="rotate(96 553.0 253.5)" fill="#3570c2" opacity="0.85"/><ellipse cx="558.1" cy="243.8" rx="4.4" ry="2.6" transform="rotate(45 558.1 243.8)" fill="#3570c2" opacity="0.85"/><ellipse cx="548.7" cy="258.5" rx="2.5" ry="1.3" transform="rotate(149 548.7 258.5)" fill="#2a60b0" opacity="0.85"/><ellipse cx="555.3" cy="251.4" rx="3.2" ry="1.7" transform="rotate(81 555.3 251.4)" fill="#2a60b0" opacity="0.85"/><ellipse cx="563.4" cy="269.5" rx="4.2" ry="2.9" transform="rotate(118 563.4 269.5)" fill="#3570c2" opacity="0.85"/><ellipse cx="548.3" cy="242.9" rx="3.9" ry="2.0" transform="rotate(114 548.3 242.9)" fill="#2d66b8" opacity="0.85"/><ellipse cx="550.9" cy="275.3" rx="3.7" ry="2.5" transform="rotate(79 550.9 275.3)" fill="#2a60b0" opacity="0.85"/><ellipse cx="558.2" cy="251.5" rx="2.6" ry="1.7" transform="rotate(61 558.2 251.5)" fill="#3068ba" opacity="0.85"/><ellipse cx="547.3" cy="263.1" rx="3.5" ry="2.2" transform="rotate(49 547.3 263.1)" fill="#2a60b0" opacity="0.85"/><ellipse cx="566.6" cy="236.8" rx="3.3" ry="1.8" transform="rotate(79 566.6 236.8)" fill="#3068ba" opacity="0.85"/><ellipse cx="554.0" cy="248.0" rx="3.9" ry="2.0" transform="rotate(11 554.0 248.0)" fill="#2d66b8" opacity="0.85"/><ellipse cx="567.4" cy="236.0" rx="2.8" ry="1.8" transform="rotate(77 567.4 236.0)" fill="#2a60b0" opacity="0.85"/><ellipse cx="551.6" cy="261.6" rx="3.5" ry="2.5" transform="rotate(49 551.6 261.6)" fill="#2a60b0" opacity="0.85"/><ellipse cx="565.0" cy="260.7" rx="4.1" ry="2.6" transform="rotate(33 565.0 260.7)" fill="#2d66b8" opacity="0.85"/><ellipse cx="556.6" cy="248.2" rx="3.8" ry="1.9" transform="rotate(122 556.6 248.2)" fill="#2d66b8" opacity="0.85"/><ellipse cx="545.6" cy="252.4" rx="2.6" ry="1.6" transform="rotate(42 545.6 252.4)" fill="#3068ba" opacity="0.85"/><ellipse cx="557.3" cy="282.3" rx="3.1" ry="1.4" transform="rotate(103 557.3 282.3)" fill="#2a60b0" opacity="0.85"/><ellipse cx="538.4" cy="259.0" rx="3.4" ry="1.7" transform="rotate(16 538.4 259.0)" fill="#3570c2" opacity="0.85"/><ellipse cx="552.5" cy="276.8" rx="4.4" ry="2.1" transform="rotate(65 552.5 276.8)" fill="#3570c2" opacity="0.85"/><ellipse cx="557.1" cy="292.3" rx="3.7" ry="2.0" transform="rotate(44 557.1 292.3)" fill="#2d66b8" opacity="0.85"/><ellipse cx="544.6" cy="259.6" rx="3.4" ry="2.2" transform="rotate(55 544.6 259.6)" fill="#3570c2" opacity="0.85"/><ellipse cx="559.0" cy="261.6" rx="2.9" ry="1.8" transform="rotate(68 559.0 261.6)" fill="#2458a6" opacity="0.85"/><ellipse cx="562.3" cy="245.7" rx="4.2" ry="2.0" transform="rotate(70 562.3 245.7)" fill="#2a60b0" opacity="0.85"/><ellipse cx="556.8" cy="236.5" rx="4.3" ry="2.3" transform="rotate(169 556.8 236.5)" fill="#3068ba" opacity="0.85"/><ellipse cx="554.8" cy="256.6" rx="2.8" ry="1.3" transform="rotate(163 554.8 256.6)" fill="#3570c2" opacity="0.85"/><ellipse cx="548.5" cy="261.4" rx="3.5" ry="2.5" transform="rotate(126 548.5 261.4)" fill="#3068ba" opacity="0.85"/><ellipse cx="565.0" cy="273.1" rx="3.0" ry="1.8" transform="rotate(21 565.0 273.1)" fill="#3068ba" opacity="0.85"/><ellipse cx="562.2" cy="251.9" rx="3.8" ry="2.2" transform="rotate(60 562.2 251.9)" fill="#2a60b0" opacity="0.85"/><ellipse cx="556.9" cy="240.7" rx="4.3" ry="2.3" transform="rotate(129 556.9 240.7)" fill="#2458a6" opacity="0.85"/><ellipse cx="552.9" cy="255.5" rx="2.7" ry="1.3" transform="rotate(121 552.9 255.5)" fill="#2d66b8" opacity="0.85"/><ellipse cx="564.3" cy="258.1" rx="2.8" ry="1.7" transform="rotate(72 564.3 258.1)" fill="#2458a6" opacity="0.85"/><ellipse cx="547.2" cy="267.2" rx="4.1" ry="2.3" transform="rotate(42 547.2 267.2)" fill="#2a60b0" opacity="0.85"/><ellipse cx="557.3" cy="257.1" rx="4.4" ry="2.3" transform="rotate(68 557.3 257.1)" fill="#3570c2" opacity="0.85"/><ellipse cx="551.2" cy="245.9" rx="2.8" ry="1.4" transform="rotate(85 551.2 245.9)" fill="#3068ba" opacity="0.85"/><ellipse cx="553.6" cy="250.8" rx="2.7" ry="1.6" transform="rotate(116 553.6 250.8)" fill="#3068ba" opacity="0.85"/><ellipse cx="546.0" cy="235.9" rx="3.6" ry="2.2" transform="rotate(52 546.0 235.9)" fill="#2458a6" opacity="0.85"/><ellipse cx="561.6" cy="269.9" rx="2.8" ry="2.0" transform="rotate(54 561.6 269.9)" fill="#2458a6" opacity="0.85"/><ellipse cx="562.8" cy="242.1" rx="3.1" ry="1.5" transform="rotate(134 562.8 242.1)" fill="#2a60b0" opacity="0.85"/><ellipse cx="544.5" cy="262.8" rx="2.5" ry="1.7" transform="rotate(30 544.5 262.8)" fill="#2d66b8" opacity="0.85"/><ellipse cx="554.2" cy="259.4" rx="4.5" ry="2.9" transform="rotate(168 554.2 259.4)" fill="#2a60b0" opacity="0.85"/><ellipse cx="557.2" cy="256.5" rx="4.5" ry="2.0" transform="rotate(163 557.2 256.5)" fill="#2458a6" opacity="0.85"/><ellipse cx="563.6" cy="251.5" rx="3.9" ry="2.3" transform="rotate(149 563.6 251.5)" fill="#3068ba" opacity="0.85"/><ellipse cx="561.7" cy="293.5" rx="2.5" ry="1.3" transform="rotate(61 561.7 293.5)" fill="#2d66b8" opacity="0.85"/><ellipse cx="557.6" cy="260.2" rx="2.5" ry="1.6" transform="rotate(130 557.6 260.2)" fill="#2a60b0" opacity="0.85"/><ellipse cx="551.4" cy="285.8" rx="2.9" ry="2.0" transform="rotate(16 551.4 285.8)" fill="#2458a6" opacity="0.85"/><ellipse cx="320.9" cy="259.3" rx="4.2" ry="2.6" transform="rotate(167 320.9 259.3)" fill="#3068ba" opacity="0.85"/><ellipse cx="307.1" cy="340.6" rx="3.5" ry="2.1" transform="rotate(119 307.1 340.6)" fill="#3068ba" opacity="0.85"/><ellipse cx="306.4" cy="302.5" rx="4.2" ry="2.7" transform="rotate(68 306.4 302.5)" fill="#3068ba" opacity="0.85"/><ellipse cx="313.9" cy="323.1" rx="2.9" ry="1.8" transform="rotate(150 313.9 323.1)" fill="#3570c2" opacity="0.85"/><ellipse cx="323.4" cy="283.4" rx="4.1" ry="2.3" transform="rotate(79 323.4 283.4)" fill="#2a60b0" opacity="0.85"/><ellipse cx="315.1" cy="280.0" rx="4.0" ry="2.7" transform="rotate(136 315.1 280.0)" fill="#2a60b0" opacity="0.85"/><ellipse cx="311.9" cy="289.1" rx="4.4" ry="3.0" transform="rotate(89 311.9 289.1)" fill="#3068ba" opacity="0.85"/><ellipse cx="310.8" cy="277.6" rx="3.4" ry="2.0" transform="rotate(165 310.8 277.6)" fill="#3068ba" opacity="0.85"/><ellipse cx="312.6" cy="263.5" rx="4.4" ry="2.3" transform="rotate(103 312.6 263.5)" fill="#2a60b0" opacity="0.85"/><ellipse cx="308.5" cy="257.0" rx="3.7" ry="1.9" transform="rotate(68 308.5 257.0)" fill="#3570c2" opacity="0.85"/><ellipse cx="327.0" cy="229.5" rx="4.1" ry="2.0" transform="rotate(54 327.0 229.5)" fill="#2458a6" opacity="0.85"/><ellipse cx="303.8" cy="257.8" rx="4.1" ry="2.1" transform="rotate(23 303.8 257.8)" fill="#2d66b8" opacity="0.85"/><ellipse cx="322.3" cy="241.0" rx="3.4" ry="2.1" transform="rotate(147 322.3 241.0)" fill="#3570c2" opacity="0.85"/><ellipse cx="320.2" cy="291.4" rx="3.5" ry="1.7" transform="rotate(74 320.2 291.4)" fill="#3068ba" opacity="0.85"/><ellipse cx="309.7" cy="257.6" rx="2.6" ry="1.7" transform="rotate(50 309.7 257.6)" fill="#3068ba" opacity="0.85"/><ellipse cx="326.9" cy="310.0" rx="3.8" ry="2.2" transform="rotate(35 326.9 310.0)" fill="#2d66b8" opacity="0.85"/><ellipse cx="346.9" cy="286.4" rx="2.5" ry="1.6" transform="rotate(36 346.9 286.4)" fill="#2458a6" opacity="0.85"/><ellipse cx="328.8" cy="297.0" rx="4.6" ry="2.8" transform="rotate(153 328.8 297.0)" fill="#2458a6" opacity="0.85"/><ellipse cx="320.2" cy="314.4" rx="3.2" ry="1.8" transform="rotate(117 320.2 314.4)" fill="#2d66b8" opacity="0.85"/><ellipse cx="325.3" cy="278.1" rx="3.0" ry="1.9" transform="rotate(55 325.3 278.1)" fill="#2d66b8" opacity="0.85"/><ellipse cx="333.3" cy="292.7" rx="2.8" ry="1.4" transform="rotate(162 333.3 292.7)" fill="#2a60b0" opacity="0.85"/><ellipse cx="317.9" cy="291.3" rx="3.0" ry="1.5" transform="rotate(88 317.9 291.3)" fill="#3570c2" opacity="0.85"/><ellipse cx="319.6" cy="299.6" rx="3.3" ry="2.1" transform="rotate(158 319.6 299.6)" fill="#2d66b8" opacity="0.85"/><ellipse cx="333.8" cy="309.2" rx="3.5" ry="1.6" transform="rotate(81 333.8 309.2)" fill="#3068ba" opacity="0.85"/><ellipse cx="318.9" cy="287.0" rx="3.3" ry="2.3" transform="rotate(136 318.9 287.0)" fill="#3570c2" opacity="0.85"/><ellipse cx="320.2" cy="307.3" rx="4.2" ry="2.7" transform="rotate(111 320.2 307.3)" fill="#3570c2" opacity="0.85"/><ellipse cx="304.7" cy="263.4" rx="3.0" ry="2.0" transform="rotate(136 304.7 263.4)" fill="#3570c2" opacity="0.85"/><ellipse cx="319.0" cy="288.2" rx="4.5" ry="3.0" transform="rotate(39 319.0 288.2)" fill="#2458a6" opacity="0.85"/><ellipse cx="311.7" cy="279.3" rx="4.4" ry="2.4" transform="rotate(123 311.7 279.3)" fill="#2d66b8" opacity="0.85"/><ellipse cx="335.6" cy="283.1" rx="4.3" ry="2.4" transform="rotate(114 335.6 283.1)" fill="#3068ba" opacity="0.85"/><ellipse cx="327.5" cy="259.9" rx="4.5" ry="2.2" transform="rotate(114 327.5 259.9)" fill="#3570c2" opacity="0.85"/><ellipse cx="307.8" cy="247.5" rx="3.4" ry="1.8" transform="rotate(4 307.8 247.5)" fill="#2458a6" opacity="0.85"/><ellipse cx="318.5" cy="289.9" rx="2.6" ry="1.2" transform="rotate(9 318.5 289.9)" fill="#2a60b0" opacity="0.85"/><ellipse cx="312.6" cy="311.4" rx="2.7" ry="1.7" transform="rotate(145 312.6 311.4)" fill="#2d66b8" opacity="0.85"/><ellipse cx="328.6" cy="279.4" rx="4.4" ry="2.8" transform="rotate(140 328.6 279.4)" fill="#2458a6" opacity="0.85"/><ellipse cx="306.3" cy="299.2" rx="2.7" ry="1.5" transform="rotate(75 306.3 299.2)" fill="#2a60b0" opacity="0.85"/><ellipse cx="304.4" cy="282.3" rx="4.4" ry="2.4" transform="rotate(19 304.4 282.3)" fill="#3068ba" opacity="0.85"/><ellipse cx="310.1" cy="314.5" rx="3.3" ry="2.1" transform="rotate(150 310.1 314.5)" fill="#2a60b0" opacity="0.85"/><ellipse cx="326.4" cy="249.5" rx="3.0" ry="2.0" transform="rotate(117 326.4 249.5)" fill="#3068ba" opacity="0.85"/><ellipse cx="298.1" cy="296.5" rx="2.7" ry="1.6" transform="rotate(50 298.1 296.5)" fill="#3570c2" opacity="0.85"/><ellipse cx="324.0" cy="297.1" rx="2.7" ry="1.2" transform="rotate(151 324.0 297.1)" fill="#2d66b8" opacity="0.85"/><ellipse cx="331.4" cy="286.1" rx="3.1" ry="1.8" transform="rotate(165 331.4 286.1)" fill="#2d66b8" opacity="0.85"/><ellipse cx="336.1" cy="308.6" rx="3.5" ry="2.3" transform="rotate(73 336.1 308.6)" fill="#3570c2" opacity="0.85"/><ellipse cx="303.2" cy="315.9" rx="2.5" ry="1.4" transform="rotate(16 303.2 315.9)" fill="#2d66b8" opacity="0.85"/><ellipse cx="324.4" cy="249.0" rx="2.6" ry="1.3" transform="rotate(109 324.4 249.0)" fill="#3570c2" opacity="0.85"/><ellipse cx="302.4" cy="292.8" rx="4.5" ry="2.7" transform="rotate(56 302.4 292.8)" fill="#2d66b8" opacity="0.85"/><ellipse cx="300.3" cy="269.6" rx="2.5" ry="1.2" transform="rotate(55 300.3 269.6)" fill="#3570c2" opacity="0.85"/><ellipse cx="335.8" cy="296.0" rx="4.0" ry="2.1" transform="rotate(106 335.8 296.0)" fill="#3570c2" opacity="0.85"/><ellipse cx="314.0" cy="313.7" rx="3.4" ry="1.8" transform="rotate(4 314.0 313.7)" fill="#2458a6" opacity="0.85"/><ellipse cx="315.2" cy="317.7" rx="4.2" ry="2.4" transform="rotate(15 315.2 317.7)" fill="#3068ba" opacity="0.85"/><ellipse cx="310.5" cy="297.0" rx="3.0" ry="1.6" transform="rotate(150 310.5 297.0)" fill="#3068ba" opacity="0.85"/><ellipse cx="295.3" cy="309.4" rx="4.6" ry="3.1" transform="rotate(49 295.3 309.4)" fill="#3570c2" opacity="0.85"/><ellipse cx="327.1" cy="272.8" rx="3.7" ry="1.9" transform="rotate(147 327.1 272.8)" fill="#2458a6" opacity="0.85"/><ellipse cx="304.2" cy="241.2" rx="2.6" ry="1.7" transform="rotate(100 304.2 241.2)" fill="#3068ba" opacity="0.85"/><ellipse cx="305.7" cy="311.3" rx="3.3" ry="1.6" transform="rotate(167 305.7 311.3)" fill="#2d66b8" opacity="0.85"/><ellipse cx="311.0" cy="325.4" rx="3.8" ry="2.2" transform="rotate(33 311.0 325.4)" fill="#3570c2" opacity="0.85"/><ellipse cx="325.9" cy="284.6" rx="3.3" ry="1.8" transform="rotate(173 325.9 284.6)" fill="#2a60b0" opacity="0.85"/><ellipse cx="309.9" cy="250.4" rx="3.0" ry="1.9" transform="rotate(176 309.9 250.4)" fill="#3570c2" opacity="0.85"/><ellipse cx="309.9" cy="278.3" rx="4.5" ry="2.9" transform="rotate(171 309.9 278.3)" fill="#2458a6" opacity="0.85"/><ellipse cx="294.5" cy="290.9" rx="4.0" ry="2.5" transform="rotate(43 294.5 290.9)" fill="#3068ba" opacity="0.85"/><ellipse cx="331.0" cy="232.6" rx="4.1" ry="2.4" transform="rotate(48 331.0 232.6)" fill="#2a60b0" opacity="0.85"/><ellipse cx="288.9" cy="234.5" rx="2.8" ry="1.6" transform="rotate(160 288.9 234.5)" fill="#3068ba" opacity="0.85"/><ellipse cx="321.5" cy="293.6" rx="2.9" ry="1.5" transform="rotate(102 321.5 293.6)" fill="#2d66b8" opacity="0.85"/><ellipse cx="311.1" cy="277.7" rx="4.6" ry="3.0" transform="rotate(99 311.1 277.7)" fill="#2a60b0" opacity="0.85"/><ellipse cx="314.8" cy="299.9" rx="2.4" ry="1.4" transform="rotate(71 314.8 299.9)" fill="#3570c2" opacity="0.85"/><ellipse cx="304.7" cy="286.0" rx="4.1" ry="2.0" transform="rotate(114 304.7 286.0)" fill="#3068ba" opacity="0.85"/><ellipse cx="310.3" cy="291.3" rx="3.4" ry="1.9" transform="rotate(107 310.3 291.3)" fill="#2458a6" opacity="0.85"/><ellipse cx="329.6" cy="295.6" rx="2.5" ry="1.5" transform="rotate(38 329.6 295.6)" fill="#2d66b8" opacity="0.85"/><ellipse cx="322.9" cy="271.0" rx="2.4" ry="1.5" transform="rotate(153 322.9 271.0)" fill="#3570c2" opacity="0.85"/><ellipse cx="296.1" cy="265.0" rx="3.6" ry="1.9" transform="rotate(28 296.1 265.0)" fill="#3570c2" opacity="0.85"/><ellipse cx="320.9" cy="289.8" rx="4.1" ry="2.5" transform="rotate(177 320.9 289.8)" fill="#2a60b0" opacity="0.85"/><ellipse cx="294.9" cy="244.9" rx="3.6" ry="1.9" transform="rotate(146 294.9 244.9)" fill="#2458a6" opacity="0.85"/><ellipse cx="314.0" cy="288.9" rx="4.0" ry="2.7" transform="rotate(60 314.0 288.9)" fill="#2a60b0" opacity="0.85"/><ellipse cx="302.5" cy="226.6" rx="3.4" ry="1.9" transform="rotate(140 302.5 226.6)" fill="#2458a6" opacity="0.85"/><ellipse cx="315.5" cy="291.7" rx="4.2" ry="2.1" transform="rotate(112 315.5 291.7)" fill="#3068ba" opacity="0.85"/><ellipse cx="320.2" cy="297.6" rx="2.8" ry="1.5" transform="rotate(120 320.2 297.6)" fill="#3570c2" opacity="0.85"/><ellipse cx="314.1" cy="280.9" rx="4.2" ry="1.9" transform="rotate(151 314.1 280.9)" fill="#3570c2" opacity="0.85"/><ellipse cx="330.3" cy="293.4" rx="3.5" ry="1.9" transform="rotate(3 330.3 293.4)" fill="#2d66b8" opacity="0.85"/><ellipse cx="297.0" cy="306.7" rx="3.7" ry="1.9" transform="rotate(140 297.0 306.7)" fill="#2a60b0" opacity="0.85"/><ellipse cx="309.1" cy="259.8" rx="4.3" ry="2.0" transform="rotate(10 309.1 259.8)" fill="#2d66b8" opacity="0.85"/><ellipse cx="284.8" cy="224.3" rx="3.1" ry="1.4" transform="rotate(36 284.8 224.3)" fill="#2d66b8" opacity="0.85"/><ellipse cx="331.5" cy="236.4" rx="3.5" ry="2.0" transform="rotate(155 331.5 236.4)" fill="#2a60b0" opacity="0.85"/><ellipse cx="326.7" cy="249.8" rx="2.4" ry="1.3" transform="rotate(104 326.7 249.8)" fill="#2a60b0" opacity="0.85"/><ellipse cx="291.2" cy="316.2" rx="3.6" ry="1.7" transform="rotate(90 291.2 316.2)" fill="#2d66b8" opacity="0.85"/><ellipse cx="313.2" cy="287.0" rx="4.2" ry="2.5" transform="rotate(132 313.2 287.0)" fill="#2d66b8" opacity="0.85"/><ellipse cx="316.4" cy="250.2" rx="4.3" ry="2.2" transform="rotate(138 316.4 250.2)" fill="#2458a6" opacity="0.85"/><ellipse cx="331.5" cy="252.8" rx="4.4" ry="2.9" transform="rotate(50 331.5 252.8)" fill="#3068ba" opacity="0.85"/><ellipse cx="309.6" cy="304.0" rx="3.8" ry="2.3" transform="rotate(19 309.6 304.0)" fill="#2d66b8" opacity="0.85"/><ellipse cx="310.2" cy="309.0" rx="3.6" ry="2.5" transform="rotate(167 310.2 309.0)" fill="#2458a6" opacity="0.85"/><ellipse cx="323.6" cy="242.8" rx="4.3" ry="2.6" transform="rotate(77 323.6 242.8)" fill="#2458a6" opacity="0.85"/><ellipse cx="335.3" cy="272.7" rx="3.8" ry="2.2" transform="rotate(86 335.3 272.7)" fill="#2a60b0" opacity="0.85"/><ellipse cx="320.0" cy="278.5" rx="4.3" ry="2.0" transform="rotate(58 320.0 278.5)" fill="#3068ba" opacity="0.85"/><ellipse cx="335.9" cy="287.4" rx="2.9" ry="1.6" transform="rotate(144 335.9 287.4)" fill="#3068ba" opacity="0.85"/><ellipse cx="317.5" cy="237.7" rx="4.1" ry="2.5" transform="rotate(176 317.5 237.7)" fill="#3068ba" opacity="0.85"/><ellipse cx="339.0" cy="266.9" rx="2.9" ry="1.7" transform="rotate(171 339.0 266.9)" fill="#3570c2" opacity="0.85"/><ellipse cx="324.9" cy="275.4" rx="4.3" ry="2.9" transform="rotate(81 324.9 275.4)" fill="#2a60b0" opacity="0.85"/><ellipse cx="320.2" cy="278.0" rx="3.5" ry="2.4" transform="rotate(49 320.2 278.0)" fill="#3068ba" opacity="0.85"/><ellipse cx="318.3" cy="279.0" rx="3.9" ry="2.5" transform="rotate(150 318.3 279.0)" fill="#2a60b0" opacity="0.85"/><ellipse cx="314.5" cy="293.6" rx="3.1" ry="1.9" transform="rotate(24 314.5 293.6)" fill="#2458a6" opacity="0.85"/><ellipse cx="335.8" cy="243.9" rx="4.1" ry="2.3" transform="rotate(83 335.8 243.9)" fill="#2d66b8" opacity="0.85"/><ellipse cx="324.2" cy="341.6" rx="2.9" ry="1.3" transform="rotate(146 324.2 341.6)" fill="#2a60b0" opacity="0.85"/><ellipse cx="335.6" cy="306.1" rx="3.8" ry="2.5" transform="rotate(139 335.6 306.1)" fill="#2a60b0" opacity="0.85"/><ellipse cx="324.6" cy="278.1" rx="4.0" ry="2.2" transform="rotate(33 324.6 278.1)" fill="#3068ba" opacity="0.85"/><ellipse cx="327.5" cy="252.0" rx="3.0" ry="1.7" transform="rotate(50 327.5 252.0)" fill="#3068ba" opacity="0.85"/><ellipse cx="308.9" cy="263.1" rx="3.9" ry="1.8" transform="rotate(27 308.9 263.1)" fill="#2d66b8" opacity="0.85"/><ellipse cx="321.2" cy="301.7" rx="3.1" ry="2.0" transform="rotate(1 321.2 301.7)" fill="#3570c2" opacity="0.85"/><ellipse cx="323.4" cy="248.9" rx="2.6" ry="1.4" transform="rotate(80 323.4 248.9)" fill="#3068ba" opacity="0.85"/><ellipse cx="320.6" cy="288.8" rx="2.6" ry="1.6" transform="rotate(136 320.6 288.8)" fill="#2d66b8" opacity="0.85"/><ellipse cx="327.8" cy="300.8" rx="4.5" ry="2.7" transform="rotate(9 327.8 300.8)" fill="#2d66b8" opacity="0.85"/><ellipse cx="329.3" cy="284.7" rx="4.1" ry="2.6" transform="rotate(44 329.3 284.7)" fill="#3570c2" opacity="0.85"/><ellipse cx="298.9" cy="271.8" rx="3.2" ry="1.7" transform="rotate(23 298.9 271.8)" fill="#2a60b0" opacity="0.85"/><ellipse cx="316.4" cy="292.8" rx="3.4" ry="1.7" transform="rotate(79 316.4 292.8)" fill="#3570c2" opacity="0.85"/><ellipse cx="312.2" cy="315.0" rx="2.7" ry="1.2" transform="rotate(16 312.2 315.0)" fill="#3570c2" opacity="0.85"/><ellipse cx="324.3" cy="264.4" rx="2.6" ry="1.5" transform="rotate(47 324.3 264.4)" fill="#3068ba" opacity="0.85"/><ellipse cx="309.8" cy="278.8" rx="4.3" ry="2.9" transform="rotate(1 309.8 278.8)" fill="#2a60b0" opacity="0.85"/><ellipse cx="313.4" cy="289.6" rx="4.0" ry="2.7" transform="rotate(115 313.4 289.6)" fill="#3068ba" opacity="0.85"/><ellipse cx="312.6" cy="309.9" rx="3.4" ry="1.9" transform="rotate(52 312.6 309.9)" fill="#2458a6" opacity="0.85"/><ellipse cx="285.8" cy="289.5" rx="4.4" ry="2.7" transform="rotate(25 285.8 289.5)" fill="#2d66b8" opacity="0.85"/><ellipse cx="285.0" cy="322.2" rx="4.3" ry="2.8" transform="rotate(5 285.0 322.2)" fill="#2a60b0" opacity="0.85"/><ellipse cx="336.3" cy="242.0" rx="2.4" ry="1.7" transform="rotate(77 336.3 242.0)" fill="#3068ba" opacity="0.85"/><ellipse cx="311.9" cy="241.9" rx="3.8" ry="2.7" transform="rotate(17 311.9 241.9)" fill="#2a60b0" opacity="0.85"/><ellipse cx="308.8" cy="299.4" rx="4.4" ry="3.0" transform="rotate(104 308.8 299.4)" fill="#3570c2" opacity="0.85"/><ellipse cx="314.0" cy="289.5" rx="3.5" ry="2.1" transform="rotate(12 314.0 289.5)" fill="#3570c2" opacity="0.85"/><ellipse cx="319.9" cy="217.7" rx="3.7" ry="2.2" transform="rotate(119 319.9 217.7)" fill="#3068ba" opacity="0.85"/><ellipse cx="333.6" cy="266.7" rx="3.3" ry="1.7" transform="rotate(98 333.6 266.7)" fill="#2a60b0" opacity="0.85"/><ellipse cx="338.4" cy="279.9" rx="3.5" ry="2.0" transform="rotate(7 338.4 279.9)" fill="#2d66b8" opacity="0.85"/><ellipse cx="319.7" cy="271.6" rx="2.6" ry="1.3" transform="rotate(54 319.7 271.6)" fill="#3570c2" opacity="0.85"/><ellipse cx="320.6" cy="251.8" rx="3.6" ry="1.6" transform="rotate(97 320.6 251.8)" fill="#2d66b8" opacity="0.85"/><ellipse cx="322.0" cy="296.0" rx="2.7" ry="1.6" transform="rotate(17 322.0 296.0)" fill="#2a60b0" opacity="0.85"/><ellipse cx="313.5" cy="291.2" rx="3.3" ry="1.6" transform="rotate(58 313.5 291.2)" fill="#2d66b8" opacity="0.85"/><ellipse cx="314.7" cy="280.6" rx="3.8" ry="2.0" transform="rotate(133 314.7 280.6)" fill="#3570c2" opacity="0.85"/><ellipse cx="327.9" cy="278.0" rx="2.8" ry="1.8" transform="rotate(84 327.9 278.0)" fill="#2a60b0" opacity="0.85"/><ellipse cx="318.4" cy="265.7" rx="4.2" ry="2.7" transform="rotate(129 318.4 265.7)" fill="#2d66b8" opacity="0.85"/><ellipse cx="330.4" cy="346.8" rx="3.6" ry="2.2" transform="rotate(121 330.4 346.8)" fill="#2d66b8" opacity="0.85"/><ellipse cx="306.3" cy="271.1" rx="3.1" ry="1.4" transform="rotate(112 306.3 271.1)" fill="#3570c2" opacity="0.85"/><ellipse cx="322.1" cy="238.5" rx="2.9" ry="1.8" transform="rotate(54 322.1 238.5)" fill="#2a60b0" opacity="0.85"/><ellipse cx="322.6" cy="316.4" rx="3.5" ry="1.9" transform="rotate(101 322.6 316.4)" fill="#3570c2" opacity="0.85"/><ellipse cx="339.9" cy="306.5" rx="4.1" ry="2.4" transform="rotate(104 339.9 306.5)" fill="#3570c2" opacity="0.85"/><ellipse cx="305.6" cy="251.9" rx="3.4" ry="2.1" transform="rotate(90 305.6 251.9)" fill="#2458a6" opacity="0.85"/><ellipse cx="318.5" cy="249.2" rx="4.1" ry="2.1" transform="rotate(7 318.5 249.2)" fill="#3570c2" opacity="0.85"/><ellipse cx="321.3" cy="239.6" rx="3.9" ry="1.9" transform="rotate(53 321.3 239.6)" fill="#3570c2" opacity="0.85"/><ellipse cx="323.6" cy="244.7" rx="3.0" ry="1.7" transform="rotate(152 323.6 244.7)" fill="#3068ba" opacity="0.85"/><ellipse cx="316.9" cy="262.5" rx="3.2" ry="1.5" transform="rotate(56 316.9 262.5)" fill="#2a60b0" opacity="0.85"/><ellipse cx="325.1" cy="271.2" rx="3.3" ry="1.7" transform="rotate(26 325.1 271.2)" fill="#2a60b0" opacity="0.85"/><ellipse cx="318.1" cy="265.0" rx="3.0" ry="1.7" transform="rotate(17 318.1 265.0)" fill="#2a60b0" opacity="0.85"/><ellipse cx="309.3" cy="257.1" rx="4.1" ry="2.5" transform="rotate(161 309.3 257.1)" fill="#2458a6" opacity="0.85"/><ellipse cx="307.8" cy="312.4" rx="4.0" ry="2.0" transform="rotate(175 307.8 312.4)" fill="#3068ba" opacity="0.85"/><ellipse cx="314.4" cy="296.0" rx="4.4" ry="2.0" transform="rotate(77 314.4 296.0)" fill="#2a60b0" opacity="0.85"/><ellipse cx="315.0" cy="311.3" rx="2.7" ry="1.5" transform="rotate(172 315.0 311.3)" fill="#2a60b0" opacity="0.85"/><ellipse cx="309.8" cy="306.5" rx="2.6" ry="1.8" transform="rotate(77 309.8 306.5)" fill="#3570c2" opacity="0.85"/><ellipse cx="312.8" cy="310.6" rx="4.0" ry="2.1" transform="rotate(139 312.8 310.6)" fill="#2458a6" opacity="0.85"/><ellipse cx="322.1" cy="247.0" rx="3.1" ry="1.5" transform="rotate(86 322.1 247.0)" fill="#2a60b0" opacity="0.85"/><ellipse cx="313.5" cy="272.4" rx="4.4" ry="2.0" transform="rotate(167 313.5 272.4)" fill="#2458a6" opacity="0.85"/><ellipse cx="319.2" cy="312.9" rx="3.2" ry="1.8" transform="rotate(150 319.2 312.9)" fill="#2d66b8" opacity="0.85"/><ellipse cx="324.3" cy="314.9" rx="4.6" ry="2.3" transform="rotate(77 324.3 314.9)" fill="#2a60b0" opacity="0.85"/><ellipse cx="327.8" cy="285.4" rx="2.7" ry="1.6" transform="rotate(21 327.8 285.4)" fill="#3068ba" opacity="0.85"/><ellipse cx="335.1" cy="269.2" rx="2.7" ry="1.5" transform="rotate(93 335.1 269.2)" fill="#2a60b0" opacity="0.85"/><ellipse cx="322.4" cy="324.3" rx="4.5" ry="2.4" transform="rotate(85 322.4 324.3)" fill="#3570c2" opacity="0.85"/><ellipse cx="323.8" cy="324.2" rx="3.5" ry="2.0" transform="rotate(4 323.8 324.2)" fill="#3068ba" opacity="0.85"/><ellipse cx="289.2" cy="262.0" rx="4.3" ry="2.7" transform="rotate(21 289.2 262.0)" fill="#3068ba" opacity="0.85"/><ellipse cx="313.3" cy="272.8" rx="2.6" ry="1.7" transform="rotate(173 313.3 272.8)" fill="#2a60b0" opacity="0.85"/><ellipse cx="314.7" cy="288.2" rx="3.6" ry="1.9" transform="rotate(19 314.7 288.2)" fill="#3570c2" opacity="0.85"/><ellipse cx="322.8" cy="252.1" rx="3.2" ry="2.1" transform="rotate(49 322.8 252.1)" fill="#2d66b8" opacity="0.85"/><ellipse cx="321.0" cy="295.4" rx="3.2" ry="1.9" transform="rotate(37 321.0 295.4)" fill="#3068ba" opacity="0.85"/><ellipse cx="348.1" cy="269.6" rx="2.6" ry="1.6" transform="rotate(172 348.1 269.6)" fill="#2d66b8" opacity="0.85"/><ellipse cx="316.2" cy="277.1" rx="3.4" ry="2.0" transform="rotate(166 316.2 277.1)" fill="#2a60b0" opacity="0.85"/><ellipse cx="317.5" cy="286.4" rx="3.0" ry="1.4" transform="rotate(166 317.5 286.4)" fill="#3068ba" opacity="0.85"/><ellipse cx="309.7" cy="284.4" rx="2.9" ry="1.3" transform="rotate(155 309.7 284.4)" fill="#2458a6" opacity="0.85"/><ellipse cx="316.2" cy="310.5" rx="4.4" ry="2.4" transform="rotate(65 316.2 310.5)" fill="#2d66b8" opacity="0.85"/><ellipse cx="281.1" cy="277.0" rx="3.7" ry="2.4" transform="rotate(90 281.1 277.0)" fill="#2d66b8" opacity="0.85"/><ellipse cx="312.4" cy="288.1" rx="2.8" ry="1.8" transform="rotate(139 312.4 288.1)" fill="#3570c2" opacity="0.85"/><ellipse cx="320.1" cy="266.6" rx="3.3" ry="1.7" transform="rotate(158 320.1 266.6)" fill="#3068ba" opacity="0.85"/><ellipse cx="339.6" cy="320.4" rx="2.6" ry="1.7" transform="rotate(66 339.6 320.4)" fill="#2458a6" opacity="0.85"/><ellipse cx="280.3" cy="273.7" rx="2.4" ry="1.3" transform="rotate(39 280.3 273.7)" fill="#2a60b0" opacity="0.85"/><ellipse cx="318.5" cy="288.2" rx="2.6" ry="1.5" transform="rotate(33 318.5 288.2)" fill="#3068ba" opacity="0.85"/><ellipse cx="318.6" cy="257.5" rx="2.9" ry="1.7" transform="rotate(131 318.6 257.5)" fill="#2458a6" opacity="0.85"/><ellipse cx="304.2" cy="286.8" rx="3.6" ry="1.8" transform="rotate(8 304.2 286.8)" fill="#2a60b0" opacity="0.85"/><ellipse cx="324.3" cy="278.2" rx="2.6" ry="1.7" transform="rotate(38 324.3 278.2)" fill="#2a60b0" opacity="0.85"/><ellipse cx="304.9" cy="242.9" rx="3.6" ry="2.5" transform="rotate(93 304.9 242.9)" fill="#2d66b8" opacity="0.85"/><ellipse cx="308.6" cy="250.5" rx="4.1" ry="2.4" transform="rotate(89 308.6 250.5)" fill="#3068ba" opacity="0.85"/><ellipse cx="309.5" cy="312.8" rx="2.9" ry="1.7" transform="rotate(12 309.5 312.8)" fill="#2458a6" opacity="0.85"/><ellipse cx="307.7" cy="297.7" rx="4.5" ry="2.1" transform="rotate(67 307.7 297.7)" fill="#2d66b8" opacity="0.85"/><ellipse cx="315.2" cy="291.7" rx="2.8" ry="1.3" transform="rotate(89 315.2 291.7)" fill="#2d66b8" opacity="0.85"/><ellipse cx="318.2" cy="284.7" rx="4.5" ry="2.3" transform="rotate(157 318.2 284.7)" fill="#3570c2" opacity="0.85"/><ellipse cx="305.2" cy="228.3" rx="2.9" ry="1.8" transform="rotate(164 305.2 228.3)" fill="#3570c2" opacity="0.85"/><ellipse cx="317.4" cy="321.2" rx="3.4" ry="1.9" transform="rotate(143 317.4 321.2)" fill="#3068ba" opacity="0.85"/><ellipse cx="326.9" cy="324.5" rx="3.2" ry="1.7" transform="rotate(142 326.9 324.5)" fill="#3570c2" opacity="0.85"/><ellipse cx="346.5" cy="244.4" rx="2.9" ry="1.8" transform="rotate(76 346.5 244.4)" fill="#3570c2" opacity="0.85"/><ellipse cx="310.8" cy="254.0" rx="4.5" ry="2.7" transform="rotate(160 310.8 254.0)" fill="#2d66b8" opacity="0.85"/><ellipse cx="317.5" cy="276.9" rx="3.5" ry="2.2" transform="rotate(74 317.5 276.9)" fill="#2d66b8" opacity="0.85"/><ellipse cx="363.9" cy="245.7" rx="4.4" ry="2.1" transform="rotate(39 363.9 245.7)" fill="#2458a6" opacity="0.85"/><ellipse cx="381.8" cy="245.5" rx="3.1" ry="2.1" transform="rotate(130 381.8 245.5)" fill="#2d66b8" opacity="0.85"/><ellipse cx="368.2" cy="265.5" rx="3.3" ry="2.0" transform="rotate(20 368.2 265.5)" fill="#2458a6" opacity="0.85"/><ellipse cx="375.8" cy="254.5" rx="3.6" ry="1.8" transform="rotate(22 375.8 254.5)" fill="#2a60b0" opacity="0.85"/><ellipse cx="369.5" cy="250.6" rx="3.0" ry="2.0" transform="rotate(176 369.5 250.6)" fill="#2a60b0" opacity="0.85"/><ellipse cx="354.6" cy="257.9" rx="3.9" ry="2.0" transform="rotate(53 354.6 257.9)" fill="#2458a6" opacity="0.85"/><ellipse cx="383.1" cy="258.3" rx="2.9" ry="1.5" transform="rotate(24 383.1 258.3)" fill="#3570c2" opacity="0.85"/><ellipse cx="383.5" cy="243.3" rx="4.6" ry="2.2" transform="rotate(154 383.5 243.3)" fill="#2a60b0" opacity="0.85"/><ellipse cx="391.3" cy="245.3" rx="3.0" ry="2.0" transform="rotate(166 391.3 245.3)" fill="#2458a6" opacity="0.85"/><ellipse cx="372.7" cy="258.6" rx="4.2" ry="2.0" transform="rotate(177 372.7 258.6)" fill="#2a60b0" opacity="0.85"/><ellipse cx="406.5" cy="251.8" rx="3.7" ry="1.8" transform="rotate(92 406.5 251.8)" fill="#2a60b0" opacity="0.85"/><ellipse cx="404.3" cy="250.2" rx="3.9" ry="2.5" transform="rotate(48 404.3 250.2)" fill="#3068ba" opacity="0.85"/><ellipse cx="388.8" cy="255.6" rx="4.2" ry="2.5" transform="rotate(38 388.8 255.6)" fill="#2a60b0" opacity="0.85"/><ellipse cx="341.4" cy="233.1" rx="4.1" ry="2.6" transform="rotate(148 341.4 233.1)" fill="#2d66b8" opacity="0.85"/><ellipse cx="367.7" cy="229.9" rx="2.6" ry="1.2" transform="rotate(118 367.7 229.9)" fill="#3068ba" opacity="0.85"/><ellipse cx="349.8" cy="242.9" rx="3.8" ry="2.5" transform="rotate(14 349.8 242.9)" fill="#3068ba" opacity="0.85"/><ellipse cx="380.2" cy="283.6" rx="3.2" ry="1.5" transform="rotate(136 380.2 283.6)" fill="#2a60b0" opacity="0.85"/><ellipse cx="376.9" cy="273.7" rx="3.8" ry="2.1" transform="rotate(21 376.9 273.7)" fill="#2458a6" opacity="0.85"/><ellipse cx="375.9" cy="256.9" rx="4.2" ry="2.9" transform="rotate(36 375.9 256.9)" fill="#2a60b0" opacity="0.85"/><ellipse cx="375.5" cy="260.8" rx="4.6" ry="2.1" transform="rotate(16 375.5 260.8)" fill="#2458a6" opacity="0.85"/><ellipse cx="363.2" cy="261.9" rx="3.1" ry="1.6" transform="rotate(118 363.2 261.9)" fill="#3068ba" opacity="0.85"/><ellipse cx="404.0" cy="230.7" rx="3.0" ry="1.8" transform="rotate(93 404.0 230.7)" fill="#2d66b8" opacity="0.85"/><ellipse cx="374.4" cy="251.1" rx="3.5" ry="1.7" transform="rotate(66 374.4 251.1)" fill="#3570c2" opacity="0.85"/><ellipse cx="391.6" cy="244.2" rx="4.2" ry="1.9" transform="rotate(8 391.6 244.2)" fill="#2a60b0" opacity="0.85"/><ellipse cx="379.8" cy="249.8" rx="2.8" ry="1.5" transform="rotate(11 379.8 249.8)" fill="#2d66b8" opacity="0.85"/><ellipse cx="369.0" cy="251.7" rx="3.8" ry="2.2" transform="rotate(161 369.0 251.7)" fill="#2a60b0" opacity="0.85"/><ellipse cx="374.5" cy="257.4" rx="3.3" ry="1.6" transform="rotate(30 374.5 257.4)" fill="#3570c2" opacity="0.85"/><ellipse cx="387.0" cy="259.5" rx="3.2" ry="2.1" transform="rotate(43 387.0 259.5)" fill="#2458a6" opacity="0.85"/><ellipse cx="360.8" cy="274.9" rx="4.4" ry="2.8" transform="rotate(156 360.8 274.9)" fill="#2458a6" opacity="0.85"/><ellipse cx="357.6" cy="246.8" rx="3.6" ry="2.2" transform="rotate(156 357.6 246.8)" fill="#3068ba" opacity="0.85"/><ellipse cx="387.6" cy="245.0" rx="3.6" ry="1.7" transform="rotate(73 387.6 245.0)" fill="#3570c2" opacity="0.85"/><ellipse cx="387.1" cy="229.9" rx="2.7" ry="1.7" transform="rotate(57 387.1 229.9)" fill="#2d66b8" opacity="0.85"/><ellipse cx="368.2" cy="259.4" rx="4.2" ry="2.4" transform="rotate(28 368.2 259.4)" fill="#2d66b8" opacity="0.85"/><ellipse cx="370.8" cy="260.3" rx="4.0" ry="2.7" transform="rotate(92 370.8 260.3)" fill="#2a60b0" opacity="0.85"/><ellipse cx="373.4" cy="238.6" rx="3.2" ry="1.9" transform="rotate(123 373.4 238.6)" fill="#2458a6" opacity="0.85"/><ellipse cx="370.0" cy="258.8" rx="4.2" ry="2.2" transform="rotate(159 370.0 258.8)" fill="#2d66b8" opacity="0.85"/><ellipse cx="370.2" cy="236.6" rx="2.5" ry="1.7" transform="rotate(78 370.2 236.6)" fill="#2a60b0" opacity="0.85"/><ellipse cx="359.9" cy="247.4" rx="3.6" ry="1.7" transform="rotate(74 359.9 247.4)" fill="#3068ba" opacity="0.85"/><ellipse cx="384.7" cy="255.7" rx="3.8" ry="2.5" transform="rotate(121 384.7 255.7)" fill="#2d66b8" opacity="0.85"/><ellipse cx="382.5" cy="250.5" rx="2.9" ry="1.9" transform="rotate(2 382.5 250.5)" fill="#3068ba" opacity="0.85"/><ellipse cx="355.2" cy="268.1" rx="4.3" ry="2.8" transform="rotate(27 355.2 268.1)" fill="#2458a6" opacity="0.85"/><ellipse cx="363.9" cy="259.6" rx="4.5" ry="2.9" transform="rotate(50 363.9 259.6)" fill="#2a60b0" opacity="0.85"/><ellipse cx="369.7" cy="269.1" rx="4.2" ry="2.2" transform="rotate(88 369.7 269.1)" fill="#3068ba" opacity="0.85"/><ellipse cx="371.3" cy="240.8" rx="4.2" ry="2.4" transform="rotate(101 371.3 240.8)" fill="#2d66b8" opacity="0.85"/><ellipse cx="368.3" cy="223.2" rx="3.6" ry="2.1" transform="rotate(127 368.3 223.2)" fill="#2d66b8" opacity="0.85"/><ellipse cx="365.3" cy="267.1" rx="3.2" ry="2.2" transform="rotate(148 365.3 267.1)" fill="#3570c2" opacity="0.85"/><ellipse cx="385.6" cy="253.6" rx="3.7" ry="1.9" transform="rotate(14 385.6 253.6)" fill="#2a60b0" opacity="0.85"/><ellipse cx="365.5" cy="238.6" rx="3.6" ry="2.4" transform="rotate(80 365.5 238.6)" fill="#3570c2" opacity="0.85"/><ellipse cx="361.4" cy="245.4" rx="3.5" ry="2.3" transform="rotate(97 361.4 245.4)" fill="#3068ba" opacity="0.85"/><ellipse cx="380.8" cy="248.1" rx="3.2" ry="1.5" transform="rotate(22 380.8 248.1)" fill="#3570c2" opacity="0.85"/><ellipse cx="398.0" cy="244.0" rx="2.9" ry="1.5" transform="rotate(38 398.0 244.0)" fill="#2a60b0" opacity="0.85"/><ellipse cx="390.2" cy="253.3" rx="3.6" ry="1.9" transform="rotate(10 390.2 253.3)" fill="#2458a6" opacity="0.85"/><ellipse cx="358.9" cy="263.5" rx="3.7" ry="2.2" transform="rotate(137 358.9 263.5)" fill="#3068ba" opacity="0.85"/><ellipse cx="361.1" cy="254.3" rx="2.5" ry="1.4" transform="rotate(51 361.1 254.3)" fill="#2458a6" opacity="0.85"/><ellipse cx="368.3" cy="266.3" rx="2.5" ry="1.6" transform="rotate(91 368.3 266.3)" fill="#3570c2" opacity="0.85"/><ellipse cx="385.5" cy="246.0" rx="3.7" ry="2.2" transform="rotate(66 385.5 246.0)" fill="#2a60b0" opacity="0.85"/><ellipse cx="392.4" cy="252.4" rx="3.7" ry="1.8" transform="rotate(63 392.4 252.4)" fill="#2a60b0" opacity="0.85"/><ellipse cx="366.2" cy="267.6" rx="2.7" ry="1.8" transform="rotate(147 366.2 267.6)" fill="#2d66b8" opacity="0.85"/><ellipse cx="353.6" cy="240.8" rx="3.6" ry="2.3" transform="rotate(11 353.6 240.8)" fill="#3068ba" opacity="0.85"/><ellipse cx="384.6" cy="250.0" rx="4.6" ry="2.7" transform="rotate(67 384.6 250.0)" fill="#2a60b0" opacity="0.85"/><ellipse cx="377.9" cy="254.5" rx="3.0" ry="1.8" transform="rotate(170 377.9 254.5)" fill="#2a60b0" opacity="0.85"/><ellipse cx="395.6" cy="258.3" rx="3.2" ry="1.9" transform="rotate(128 395.6 258.3)" fill="#2d66b8" opacity="0.85"/><ellipse cx="376.0" cy="254.1" rx="2.4" ry="1.1" transform="rotate(53 376.0 254.1)" fill="#2d66b8" opacity="0.85"/><ellipse cx="380.0" cy="269.5" rx="2.6" ry="1.8" transform="rotate(117 380.0 269.5)" fill="#2d66b8" opacity="0.85"/><ellipse cx="366.4" cy="250.3" rx="4.5" ry="2.9" transform="rotate(18 366.4 250.3)" fill="#3570c2" opacity="0.85"/><ellipse cx="367.3" cy="254.6" rx="4.0" ry="2.6" transform="rotate(32 367.3 254.6)" fill="#2458a6" opacity="0.85"/><ellipse cx="362.7" cy="269.5" rx="4.1" ry="2.1" transform="rotate(85 362.7 269.5)" fill="#2458a6" opacity="0.85"/><ellipse cx="350.1" cy="244.1" rx="4.3" ry="2.0" transform="rotate(36 350.1 244.1)" fill="#2458a6" opacity="0.85"/><ellipse cx="381.3" cy="249.0" rx="4.2" ry="2.3" transform="rotate(144 381.3 249.0)" fill="#3570c2" opacity="0.85"/><ellipse cx="360.5" cy="259.9" rx="2.4" ry="1.1" transform="rotate(77 360.5 259.9)" fill="#2458a6" opacity="0.85"/><ellipse cx="490.0" cy="257.5" rx="4.3" ry="2.9" transform="rotate(145 490.0 257.5)" fill="#3068ba" opacity="0.85"/><ellipse cx="472.2" cy="224.4" rx="4.3" ry="2.3" transform="rotate(5 472.2 224.4)" fill="#2d66b8" opacity="0.85"/><ellipse cx="471.7" cy="255.0" rx="4.6" ry="2.3" transform="rotate(106 471.7 255.0)" fill="#2d66b8" opacity="0.85"/><ellipse cx="474.9" cy="246.6" rx="2.6" ry="1.6" transform="rotate(41 474.9 246.6)" fill="#2d66b8" opacity="0.85"/><ellipse cx="476.0" cy="259.6" rx="2.8" ry="1.5" transform="rotate(86 476.0 259.6)" fill="#3068ba" opacity="0.85"/><ellipse cx="469.7" cy="267.6" rx="2.6" ry="1.6" transform="rotate(33 469.7 267.6)" fill="#3570c2" opacity="0.85"/><ellipse cx="465.3" cy="247.7" rx="2.9" ry="1.9" transform="rotate(13 465.3 247.7)" fill="#3068ba" opacity="0.85"/><ellipse cx="502.0" cy="259.4" rx="4.5" ry="2.5" transform="rotate(74 502.0 259.4)" fill="#3068ba" opacity="0.85"/><ellipse cx="469.5" cy="245.5" rx="3.4" ry="2.0" transform="rotate(33 469.5 245.5)" fill="#2458a6" opacity="0.85"/><ellipse cx="501.6" cy="251.6" rx="2.9" ry="1.8" transform="rotate(59 501.6 251.6)" fill="#3068ba" opacity="0.85"/><ellipse cx="482.3" cy="267.0" rx="3.3" ry="2.2" transform="rotate(180 482.3 267.0)" fill="#3570c2" opacity="0.85"/><ellipse cx="455.7" cy="247.8" rx="2.9" ry="1.9" transform="rotate(26 455.7 247.8)" fill="#2a60b0" opacity="0.85"/><ellipse cx="494.1" cy="255.3" rx="4.0" ry="2.5" transform="rotate(86 494.1 255.3)" fill="#3570c2" opacity="0.85"/><ellipse cx="487.9" cy="252.0" rx="3.3" ry="1.5" transform="rotate(7 487.9 252.0)" fill="#2458a6" opacity="0.85"/><ellipse cx="489.4" cy="250.1" rx="3.2" ry="1.7" transform="rotate(136 489.4 250.1)" fill="#3068ba" opacity="0.85"/><ellipse cx="468.6" cy="262.6" rx="3.0" ry="1.9" transform="rotate(98 468.6 262.6)" fill="#2d66b8" opacity="0.85"/><ellipse cx="517.9" cy="243.2" rx="4.3" ry="2.0" transform="rotate(134 517.9 243.2)" fill="#2a60b0" opacity="0.85"/><ellipse cx="506.0" cy="253.3" rx="2.5" ry="1.7" transform="rotate(171 506.0 253.3)" fill="#2458a6" opacity="0.85"/><ellipse cx="495.1" cy="238.1" rx="4.2" ry="1.9" transform="rotate(64 495.1 238.1)" fill="#2458a6" opacity="0.85"/><ellipse cx="479.4" cy="246.8" rx="4.2" ry="2.6" transform="rotate(6 479.4 246.8)" fill="#3570c2" opacity="0.85"/><ellipse cx="477.3" cy="259.1" rx="3.6" ry="1.6" transform="rotate(166 477.3 259.1)" fill="#2a60b0" opacity="0.85"/><ellipse cx="484.3" cy="250.8" rx="2.6" ry="1.4" transform="rotate(139 484.3 250.8)" fill="#2d66b8" opacity="0.85"/><ellipse cx="452.0" cy="249.1" rx="3.5" ry="2.3" transform="rotate(142 452.0 249.1)" fill="#2d66b8" opacity="0.85"/><ellipse cx="484.0" cy="247.2" rx="2.6" ry="1.7" transform="rotate(2 484.0 247.2)" fill="#2458a6" opacity="0.85"/><ellipse cx="496.9" cy="249.3" rx="3.9" ry="2.4" transform="rotate(40 496.9 249.3)" fill="#2458a6" opacity="0.85"/><ellipse cx="459.2" cy="260.6" rx="3.7" ry="2.6" transform="rotate(144 459.2 260.6)" fill="#2d66b8" opacity="0.85"/><ellipse cx="504.3" cy="260.1" rx="3.1" ry="1.7" transform="rotate(41 504.3 260.1)" fill="#2d66b8" opacity="0.85"/><ellipse cx="469.1" cy="264.0" rx="4.2" ry="2.1" transform="rotate(90 469.1 264.0)" fill="#2a60b0" opacity="0.85"/><ellipse cx="455.9" cy="249.9" rx="3.3" ry="2.1" transform="rotate(61 455.9 249.9)" fill="#3068ba" opacity="0.85"/><ellipse cx="471.1" cy="269.7" rx="3.7" ry="2.0" transform="rotate(133 471.1 269.7)" fill="#2458a6" opacity="0.85"/><ellipse cx="476.9" cy="254.8" rx="3.6" ry="2.1" transform="rotate(19 476.9 254.8)" fill="#2d66b8" opacity="0.85"/><ellipse cx="479.5" cy="238.5" rx="4.0" ry="2.6" transform="rotate(37 479.5 238.5)" fill="#2458a6" opacity="0.85"/><ellipse cx="460.9" cy="249.5" rx="2.9" ry="1.6" transform="rotate(76 460.9 249.5)" fill="#2a60b0" opacity="0.85"/><ellipse cx="457.9" cy="235.2" rx="3.0" ry="1.7" transform="rotate(31 457.9 235.2)" fill="#2d66b8" opacity="0.85"/><ellipse cx="488.7" cy="246.6" rx="3.1" ry="2.1" transform="rotate(41 488.7 246.6)" fill="#2458a6" opacity="0.85"/><ellipse cx="458.8" cy="243.2" rx="2.4" ry="1.7" transform="rotate(66 458.8 243.2)" fill="#3068ba" opacity="0.85"/><ellipse cx="525.2" cy="265.7" rx="3.8" ry="2.5" transform="rotate(132 525.2 265.7)" fill="#3068ba" opacity="0.85"/><ellipse cx="480.3" cy="252.0" rx="3.2" ry="1.6" transform="rotate(47 480.3 252.0)" fill="#2d66b8" opacity="0.85"/><ellipse cx="491.2" cy="238.3" rx="2.7" ry="1.4" transform="rotate(154 491.2 238.3)" fill="#2a60b0" opacity="0.85"/><ellipse cx="480.6" cy="253.7" rx="4.0" ry="2.3" transform="rotate(151 480.6 253.7)" fill="#2d66b8" opacity="0.85"/><ellipse cx="478.3" cy="248.8" rx="3.8" ry="2.5" transform="rotate(85 478.3 248.8)" fill="#3570c2" opacity="0.85"/><ellipse cx="488.1" cy="248.8" rx="3.6" ry="1.7" transform="rotate(90 488.1 248.8)" fill="#2a60b0" opacity="0.85"/><ellipse cx="489.7" cy="263.2" rx="3.7" ry="2.4" transform="rotate(34 489.7 263.2)" fill="#2458a6" opacity="0.85"/><ellipse cx="484.5" cy="252.7" rx="4.3" ry="2.9" transform="rotate(151 484.5 252.7)" fill="#2d66b8" opacity="0.85"/><ellipse cx="487.8" cy="248.8" rx="2.7" ry="1.6" transform="rotate(80 487.8 248.8)" fill="#3570c2" opacity="0.85"/><ellipse cx="480.2" cy="258.4" rx="2.7" ry="1.5" transform="rotate(73 480.2 258.4)" fill="#2a60b0" opacity="0.85"/><ellipse cx="476.8" cy="255.0" rx="2.8" ry="1.4" transform="rotate(143 476.8 255.0)" fill="#2a60b0" opacity="0.85"/><ellipse cx="495.3" cy="263.7" rx="4.1" ry="2.6" transform="rotate(26 495.3 263.7)" fill="#3068ba" opacity="0.85"/><ellipse cx="444.0" cy="253.0" rx="2.8" ry="1.5" transform="rotate(37 444.0 253.0)" fill="#3570c2" opacity="0.85"/><ellipse cx="463.1" cy="268.5" rx="2.6" ry="1.3" transform="rotate(118 463.1 268.5)" fill="#2458a6" opacity="0.85"/><ellipse cx="484.6" cy="251.2" rx="3.7" ry="2.5" transform="rotate(121 484.6 251.2)" fill="#2d66b8" opacity="0.85"/><ellipse cx="493.7" cy="257.8" rx="3.3" ry="2.3" transform="rotate(168 493.7 257.8)" fill="#2a60b0" opacity="0.85"/><ellipse cx="496.6" cy="248.7" rx="3.6" ry="2.4" transform="rotate(76 496.6 248.7)" fill="#3068ba" opacity="0.85"/><ellipse cx="484.3" cy="239.9" rx="3.8" ry="2.6" transform="rotate(129 484.3 239.9)" fill="#2a60b0" opacity="0.85"/><ellipse cx="482.7" cy="245.2" rx="3.4" ry="1.7" transform="rotate(102 482.7 245.2)" fill="#3570c2" opacity="0.85"/><ellipse cx="486.4" cy="267.2" rx="3.3" ry="2.1" transform="rotate(88 486.4 267.2)" fill="#2a60b0" opacity="0.85"/><ellipse cx="538.7" cy="249.7" rx="3.0" ry="1.8" transform="rotate(144 538.7 249.7)" fill="#3570c2" opacity="0.85"/><ellipse cx="480.5" cy="249.3" rx="3.5" ry="2.1" transform="rotate(90 480.5 249.3)" fill="#3068ba" opacity="0.85"/><ellipse cx="469.1" cy="250.3" rx="3.5" ry="1.6" transform="rotate(19 469.1 250.3)" fill="#3068ba" opacity="0.85"/><ellipse cx="444.1" cy="261.7" rx="3.0" ry="1.6" transform="rotate(86 444.1 261.7)" fill="#2458a6" opacity="0.85"/><ellipse cx="484.0" cy="253.4" rx="4.5" ry="2.4" transform="rotate(101 484.0 253.4)" fill="#2a60b0" opacity="0.85"/><ellipse cx="484.5" cy="243.5" rx="3.7" ry="2.4" transform="rotate(74 484.5 243.5)" fill="#3068ba" opacity="0.85"/><ellipse cx="489.0" cy="256.9" rx="3.3" ry="1.8" transform="rotate(66 489.0 256.9)" fill="#2458a6" opacity="0.85"/><ellipse cx="463.3" cy="256.8" rx="3.8" ry="2.3" transform="rotate(173 463.3 256.8)" fill="#3068ba" opacity="0.85"/><ellipse cx="479.9" cy="254.3" rx="3.6" ry="2.1" transform="rotate(172 479.9 254.3)" fill="#2d66b8" opacity="0.85"/><ellipse cx="492.7" cy="247.1" rx="3.5" ry="1.9" transform="rotate(75 492.7 247.1)" fill="#2458a6" opacity="0.85"/><ellipse cx="473.6" cy="257.8" rx="2.9" ry="1.5" transform="rotate(161 473.6 257.8)" fill="#3570c2" opacity="0.85"/><ellipse cx="481.1" cy="239.7" rx="3.4" ry="2.3" transform="rotate(171 481.1 239.7)" fill="#3570c2" opacity="0.85"/><ellipse cx="458.4" cy="251.5" rx="2.6" ry="1.6" transform="rotate(46 458.4 251.5)" fill="#2d66b8" opacity="0.85"/><ellipse cx="464.4" cy="266.1" rx="4.4" ry="2.5" transform="rotate(85 464.4 266.1)" fill="#2a60b0" opacity="0.85"/><ellipse cx="586.5" cy="350.8" rx="4.2" ry="2.6" transform="rotate(23 586.5 350.8)" fill="#3068ba" opacity="0.85"/><ellipse cx="543.0" cy="364.3" rx="3.5" ry="2.0" transform="rotate(27 543.0 364.3)" fill="#2d66b8" opacity="0.85"/><ellipse cx="550.1" cy="392.8" rx="2.9" ry="1.9" transform="rotate(131 550.1 392.8)" fill="#2a60b0" opacity="0.85"/><ellipse cx="590.3" cy="348.7" rx="2.5" ry="1.7" transform="rotate(107 590.3 348.7)" fill="#3068ba" opacity="0.85"/><ellipse cx="585.1" cy="366.4" rx="4.4" ry="3.0" transform="rotate(111 585.1 366.4)" fill="#3068ba" opacity="0.85"/><ellipse cx="560.4" cy="379.6" rx="3.6" ry="1.9" transform="rotate(129 560.4 379.6)" fill="#2d66b8" opacity="0.85"/><ellipse cx="603.8" cy="357.1" rx="3.3" ry="1.8" transform="rotate(12 603.8 357.1)" fill="#2a60b0" opacity="0.85"/><ellipse cx="573.3" cy="347.2" rx="2.9" ry="2.0" transform="rotate(20 573.3 347.2)" fill="#3068ba" opacity="0.85"/><ellipse cx="579.7" cy="367.2" rx="3.4" ry="2.0" transform="rotate(19 579.7 367.2)" fill="#3068ba" opacity="0.85"/><ellipse cx="572.4" cy="389.5" rx="2.4" ry="1.5" transform="rotate(177 572.4 389.5)" fill="#2d66b8" opacity="0.85"/><ellipse cx="573.3" cy="380.6" rx="2.8" ry="1.7" transform="rotate(179 573.3 380.6)" fill="#2d66b8" opacity="0.85"/><ellipse cx="568.6" cy="382.8" rx="2.6" ry="1.4" transform="rotate(16 568.6 382.8)" fill="#2458a6" opacity="0.85"/><ellipse cx="554.4" cy="397.3" rx="3.5" ry="2.1" transform="rotate(6 554.4 397.3)" fill="#2d66b8" opacity="0.85"/><ellipse cx="545.1" cy="382.2" rx="2.6" ry="1.4" transform="rotate(151 545.1 382.2)" fill="#2d66b8" opacity="0.85"/><ellipse cx="572.8" cy="383.0" rx="3.0" ry="1.8" transform="rotate(9 572.8 383.0)" fill="#2d66b8" opacity="0.85"/><ellipse cx="595.5" cy="372.0" rx="4.1" ry="2.7" transform="rotate(22 595.5 372.0)" fill="#3570c2" opacity="0.85"/><ellipse cx="578.1" cy="374.9" rx="2.9" ry="1.8" transform="rotate(88 578.1 374.9)" fill="#2d66b8" opacity="0.85"/><ellipse cx="552.9" cy="364.2" rx="2.4" ry="1.1" transform="rotate(154 552.9 364.2)" fill="#3068ba" opacity="0.85"/><ellipse cx="567.2" cy="390.0" rx="2.6" ry="1.7" transform="rotate(156 567.2 390.0)" fill="#3068ba" opacity="0.85"/><ellipse cx="550.3" cy="370.0" rx="3.7" ry="2.3" transform="rotate(1 550.3 370.0)" fill="#2458a6" opacity="0.85"/><ellipse cx="561.2" cy="377.2" rx="3.8" ry="1.8" transform="rotate(40 561.2 377.2)" fill="#2d66b8" opacity="0.85"/><ellipse cx="562.5" cy="402.3" rx="3.3" ry="1.9" transform="rotate(68 562.5 402.3)" fill="#2d66b8" opacity="0.85"/><ellipse cx="559.0" cy="372.5" rx="4.3" ry="2.3" transform="rotate(102 559.0 372.5)" fill="#3570c2" opacity="0.85"/><ellipse cx="554.6" cy="381.4" rx="3.3" ry="1.5" transform="rotate(108 554.6 381.4)" fill="#2a60b0" opacity="0.85"/><ellipse cx="566.1" cy="376.8" rx="4.3" ry="2.2" transform="rotate(27 566.1 376.8)" fill="#2458a6" opacity="0.85"/><ellipse cx="546.9" cy="361.4" rx="3.8" ry="2.0" transform="rotate(84 546.9 361.4)" fill="#2a60b0" opacity="0.85"/><ellipse cx="570.3" cy="380.7" rx="3.2" ry="2.1" transform="rotate(156 570.3 380.7)" fill="#3068ba" opacity="0.85"/><ellipse cx="561.4" cy="387.3" rx="4.4" ry="3.0" transform="rotate(151 561.4 387.3)" fill="#3068ba" opacity="0.85"/><ellipse cx="561.2" cy="397.1" rx="2.5" ry="1.6" transform="rotate(112 561.2 397.1)" fill="#2a60b0" opacity="0.85"/><ellipse cx="560.2" cy="392.2" rx="2.8" ry="1.5" transform="rotate(123 560.2 392.2)" fill="#2d66b8" opacity="0.85"/><ellipse cx="560.2" cy="359.5" rx="2.9" ry="1.5" transform="rotate(19 560.2 359.5)" fill="#2d66b8" opacity="0.85"/><ellipse cx="561.5" cy="399.0" rx="3.5" ry="2.2" transform="rotate(88 561.5 399.0)" fill="#3570c2" opacity="0.85"/><ellipse cx="551.4" cy="381.6" rx="3.4" ry="2.3" transform="rotate(51 551.4 381.6)" fill="#3570c2" opacity="0.85"/><ellipse cx="558.3" cy="386.4" rx="2.6" ry="1.2" transform="rotate(173 558.3 386.4)" fill="#2458a6" opacity="0.85"/><ellipse cx="536.3" cy="383.4" rx="2.6" ry="1.2" transform="rotate(137 536.3 383.4)" fill="#3570c2" opacity="0.85"/><ellipse cx="551.3" cy="365.2" rx="2.5" ry="1.4" transform="rotate(90 551.3 365.2)" fill="#2d66b8" opacity="0.85"/><ellipse cx="564.6" cy="375.2" rx="4.4" ry="2.6" transform="rotate(22 564.6 375.2)" fill="#3068ba" opacity="0.85"/><ellipse cx="577.5" cy="405.6" rx="4.4" ry="3.0" transform="rotate(180 577.5 405.6)" fill="#2d66b8" opacity="0.85"/><ellipse cx="563.8" cy="416.9" rx="3.9" ry="1.9" transform="rotate(74 563.8 416.9)" fill="#2458a6" opacity="0.85"/><ellipse cx="567.5" cy="376.2" rx="3.6" ry="2.5" transform="rotate(11 567.5 376.2)" fill="#2458a6" opacity="0.85"/><ellipse cx="537.0" cy="391.4" rx="3.1" ry="2.0" transform="rotate(109 537.0 391.4)" fill="#3068ba" opacity="0.85"/><ellipse cx="585.8" cy="363.6" rx="4.3" ry="2.2" transform="rotate(161 585.8 363.6)" fill="#3068ba" opacity="0.85"/><ellipse cx="568.6" cy="371.9" rx="3.6" ry="2.5" transform="rotate(156 568.6 371.9)" fill="#3570c2" opacity="0.85"/><ellipse cx="580.3" cy="377.0" rx="4.1" ry="2.7" transform="rotate(163 580.3 377.0)" fill="#3068ba" opacity="0.85"/><ellipse cx="555.6" cy="378.6" rx="4.0" ry="2.2" transform="rotate(119 555.6 378.6)" fill="#2a60b0" opacity="0.85"/><ellipse cx="578.5" cy="371.5" rx="2.8" ry="1.4" transform="rotate(97 578.5 371.5)" fill="#2a60b0" opacity="0.85"/><ellipse cx="565.2" cy="373.2" rx="4.5" ry="2.3" transform="rotate(49 565.2 373.2)" fill="#2a60b0" opacity="0.85"/><ellipse cx="572.9" cy="382.3" rx="4.6" ry="2.4" transform="rotate(27 572.9 382.3)" fill="#2458a6" opacity="0.85"/><ellipse cx="545.3" cy="390.0" rx="3.7" ry="1.7" transform="rotate(37 545.3 390.0)" fill="#3570c2" opacity="0.85"/><ellipse cx="576.3" cy="387.6" rx="3.7" ry="2.1" transform="rotate(153 576.3 387.6)" fill="#3570c2" opacity="0.85"/><ellipse cx="554.2" cy="378.7" rx="2.4" ry="1.3" transform="rotate(99 554.2 378.7)" fill="#2d66b8" opacity="0.85"/><ellipse cx="567.3" cy="396.3" rx="3.2" ry="1.8" transform="rotate(13 567.3 396.3)" fill="#3068ba" opacity="0.85"/><ellipse cx="562.8" cy="405.2" rx="3.7" ry="2.4" transform="rotate(117 562.8 405.2)" fill="#2a60b0" opacity="0.85"/><ellipse cx="560.9" cy="405.1" rx="4.3" ry="2.2" transform="rotate(150 560.9 405.1)" fill="#2d66b8" opacity="0.85"/><ellipse cx="556.8" cy="385.8" rx="4.3" ry="2.7" transform="rotate(14 556.8 385.8)" fill="#3570c2" opacity="0.85"/><ellipse cx="552.6" cy="385.3" rx="2.5" ry="1.2" transform="rotate(81 552.6 385.3)" fill="#3068ba" opacity="0.85"/><ellipse cx="552.0" cy="374.1" rx="2.9" ry="1.8" transform="rotate(47 552.0 374.1)" fill="#2a60b0" opacity="0.85"/><ellipse cx="587.4" cy="381.1" rx="3.1" ry="1.9" transform="rotate(126 587.4 381.1)" fill="#3068ba" opacity="0.85"/><ellipse cx="578.5" cy="386.9" rx="3.5" ry="2.4" transform="rotate(13 578.5 386.9)" fill="#3068ba" opacity="0.85"/><ellipse cx="560.6" cy="387.3" rx="2.5" ry="1.7" transform="rotate(168 560.6 387.3)" fill="#3068ba" opacity="0.85"/><ellipse cx="599.2" cy="393.9" rx="3.3" ry="1.8" transform="rotate(116 599.2 393.9)" fill="#2458a6" opacity="0.85"/><ellipse cx="551.2" cy="397.8" rx="3.6" ry="1.8" transform="rotate(66 551.2 397.8)" fill="#2458a6" opacity="0.85"/><ellipse cx="555.8" cy="360.0" rx="2.6" ry="1.7" transform="rotate(13 555.8 360.0)" fill="#2a60b0" opacity="0.85"/><ellipse cx="520.2" cy="377.9" rx="3.7" ry="1.8" transform="rotate(3 520.2 377.9)" fill="#2a60b0" opacity="0.85"/><ellipse cx="546.7" cy="368.5" rx="4.1" ry="2.8" transform="rotate(28 546.7 368.5)" fill="#3068ba" opacity="0.85"/><ellipse cx="589.0" cy="370.1" rx="4.2" ry="2.7" transform="rotate(99 589.0 370.1)" fill="#2458a6" opacity="0.85"/><ellipse cx="573.5" cy="390.6" rx="4.3" ry="2.8" transform="rotate(59 573.5 390.6)" fill="#2a60b0" opacity="0.85"/><ellipse cx="550.7" cy="380.2" rx="3.4" ry="2.2" transform="rotate(9 550.7 380.2)" fill="#2458a6" opacity="0.85"/><ellipse cx="580.6" cy="373.5" rx="4.3" ry="2.5" transform="rotate(70 580.6 373.5)" fill="#3570c2" opacity="0.85"/><ellipse cx="543.2" cy="369.7" rx="3.8" ry="2.4" transform="rotate(100 543.2 369.7)" fill="#3068ba" opacity="0.85"/><ellipse cx="572.7" cy="396.2" rx="3.3" ry="1.5" transform="rotate(15 572.7 396.2)" fill="#3570c2" opacity="0.85"/><ellipse cx="575.0" cy="374.7" rx="2.5" ry="1.5" transform="rotate(159 575.0 374.7)" fill="#3068ba" opacity="0.85"/><ellipse cx="578.1" cy="363.6" rx="3.4" ry="2.1" transform="rotate(20 578.1 363.6)" fill="#2a60b0" opacity="0.85"/><ellipse cx="554.1" cy="388.8" rx="4.5" ry="2.2" transform="rotate(51 554.1 388.8)" fill="#3068ba" opacity="0.85"/><ellipse cx="574.1" cy="343.8" rx="3.2" ry="1.7" transform="rotate(35 574.1 343.8)" fill="#2a60b0" opacity="0.85"/><ellipse cx="581.8" cy="411.0" rx="2.9" ry="1.7" transform="rotate(165 581.8 411.0)" fill="#2d66b8" opacity="0.85"/><ellipse cx="564.0" cy="400.5" rx="4.0" ry="2.1" transform="rotate(74 564.0 400.5)" fill="#3570c2" opacity="0.85"/><ellipse cx="556.7" cy="370.8" rx="4.5" ry="2.5" transform="rotate(111 556.7 370.8)" fill="#2a60b0" opacity="0.85"/><ellipse cx="574.0" cy="383.6" rx="2.8" ry="1.7" transform="rotate(33 574.0 383.6)" fill="#2a60b0" opacity="0.85"/><ellipse cx="570.7" cy="407.4" rx="4.2" ry="2.4" transform="rotate(144 570.7 407.4)" fill="#2458a6" opacity="0.85"/><ellipse cx="568.2" cy="371.6" rx="3.5" ry="2.3" transform="rotate(13 568.2 371.6)" fill="#2458a6" opacity="0.85"/><ellipse cx="562.3" cy="380.4" rx="4.5" ry="2.4" transform="rotate(66 562.3 380.4)" fill="#2d66b8" opacity="0.85"/><ellipse cx="588.5" cy="392.0" rx="3.2" ry="1.7" transform="rotate(156 588.5 392.0)" fill="#2458a6" opacity="0.85"/><ellipse cx="570.9" cy="377.8" rx="2.5" ry="1.7" transform="rotate(155 570.9 377.8)" fill="#3068ba" opacity="0.85"/><ellipse cx="602.5" cy="367.3" rx="4.5" ry="3.0" transform="rotate(157 602.5 367.3)" fill="#2d66b8" opacity="0.85"/><ellipse cx="573.7" cy="370.1" rx="3.0" ry="1.6" transform="rotate(67 573.7 370.1)" fill="#2a60b0" opacity="0.85"/><ellipse cx="554.4" cy="384.3" rx="3.6" ry="1.9" transform="rotate(26 554.4 384.3)" fill="#2d66b8" opacity="0.85"/><ellipse cx="565.1" cy="394.0" rx="4.1" ry="2.7" transform="rotate(105 565.1 394.0)" fill="#2a60b0" opacity="0.85"/><ellipse cx="573.3" cy="379.6" rx="2.7" ry="1.8" transform="rotate(150 573.3 379.6)" fill="#2d66b8" opacity="0.85"/><ellipse cx="582.2" cy="386.6" rx="4.2" ry="2.1" transform="rotate(94 582.2 386.6)" fill="#3068ba" opacity="0.85"/><ellipse cx="558.8" cy="377.2" rx="2.9" ry="1.4" transform="rotate(9 558.8 377.2)" fill="#2458a6" opacity="0.85"/><ellipse cx="587.1" cy="389.9" rx="2.6" ry="1.5" transform="rotate(89 587.1 389.9)" fill="#3570c2" opacity="0.85"/><ellipse cx="566.9" cy="373.9" rx="3.6" ry="2.0" transform="rotate(125 566.9 373.9)" fill="#2458a6" opacity="0.85"/><ellipse cx="571.0" cy="374.7" rx="4.1" ry="2.5" transform="rotate(169 571.0 374.7)" fill="#3570c2" opacity="0.85"/><ellipse cx="572.2" cy="375.8" rx="3.6" ry="1.7" transform="rotate(120 572.2 375.8)" fill="#3068ba" opacity="0.85"/><ellipse cx="584.6" cy="376.8" rx="4.2" ry="2.1" transform="rotate(70 584.6 376.8)" fill="#2458a6" opacity="0.85"/><ellipse cx="581.6" cy="390.8" rx="2.8" ry="1.5" transform="rotate(78 581.6 390.8)" fill="#3570c2" opacity="0.85"/><ellipse cx="595.1" cy="346.1" rx="4.5" ry="2.1" transform="rotate(39 595.1 346.1)" fill="#2d66b8" opacity="0.85"/><ellipse cx="563.4" cy="381.4" rx="2.9" ry="1.8" transform="rotate(105 563.4 381.4)" fill="#3068ba" opacity="0.85"/><ellipse cx="555.6" cy="389.2" rx="3.3" ry="2.0" transform="rotate(15 555.6 389.2)" fill="#3570c2" opacity="0.85"/><ellipse cx="562.2" cy="363.9" rx="4.2" ry="2.7" transform="rotate(161 562.2 363.9)" fill="#2458a6" opacity="0.85"/><ellipse cx="569.2" cy="395.9" rx="2.7" ry="1.3" transform="rotate(11 569.2 395.9)" fill="#2458a6" opacity="0.85"/><ellipse cx="577.2" cy="357.1" rx="4.2" ry="2.3" transform="rotate(151 577.2 357.1)" fill="#3570c2" opacity="0.85"/><ellipse cx="564.2" cy="393.8" rx="3.8" ry="1.9" transform="rotate(151 564.2 393.8)" fill="#2d66b8" opacity="0.85"/><ellipse cx="569.1" cy="399.0" rx="2.7" ry="1.2" transform="rotate(95 569.1 399.0)" fill="#2458a6" opacity="0.85"/><ellipse cx="569.2" cy="386.2" rx="3.9" ry="2.2" transform="rotate(136 569.2 386.2)" fill="#2458a6" opacity="0.85"/><ellipse cx="581.1" cy="380.3" rx="2.6" ry="1.5" transform="rotate(132 581.1 380.3)" fill="#3068ba" opacity="0.85"/><ellipse cx="549.8" cy="390.4" rx="3.9" ry="2.7" transform="rotate(20 549.8 390.4)" fill="#2d66b8" opacity="0.85"/><ellipse cx="555.4" cy="374.2" rx="2.6" ry="1.5" transform="rotate(18 555.4 374.2)" fill="#2458a6" opacity="0.85"/><ellipse cx="577.5" cy="401.4" rx="3.5" ry="2.3" transform="rotate(145 577.5 401.4)" fill="#3068ba" opacity="0.85"/><ellipse cx="573.1" cy="398.4" rx="2.9" ry="1.6" transform="rotate(176 573.1 398.4)" fill="#3570c2" opacity="0.85"/><ellipse cx="556.6" cy="388.1" rx="3.5" ry="2.2" transform="rotate(40 556.6 388.1)" fill="#2a60b0" opacity="0.85"/><ellipse cx="582.6" cy="358.0" rx="2.9" ry="1.5" transform="rotate(139 582.6 358.0)" fill="#2458a6" opacity="0.85"/><ellipse cx="566.0" cy="387.0" rx="2.6" ry="1.4" transform="rotate(167 566.0 387.0)" fill="#2d66b8" opacity="0.85"/><ellipse cx="563.9" cy="377.5" rx="3.5" ry="1.7" transform="rotate(49 563.9 377.5)" fill="#2a60b0" opacity="0.85"/><ellipse cx="587.0" cy="429.1" rx="4.2" ry="2.0" transform="rotate(101 587.0 429.1)" fill="#2458a6" opacity="0.85"/><ellipse cx="586.9" cy="379.3" rx="3.4" ry="2.0" transform="rotate(145 586.9 379.3)" fill="#2458a6" opacity="0.85"/><ellipse cx="578.2" cy="402.2" rx="3.3" ry="1.6" transform="rotate(95 578.2 402.2)" fill="#3068ba" opacity="0.85"/><ellipse cx="581.4" cy="384.1" rx="3.4" ry="2.3" transform="rotate(51 581.4 384.1)" fill="#2458a6" opacity="0.85"/><ellipse cx="570.3" cy="376.1" rx="2.6" ry="1.7" transform="rotate(95 570.3 376.1)" fill="#2a60b0" opacity="0.85"/><ellipse cx="551.0" cy="381.1" rx="2.8" ry="1.8" transform="rotate(120 551.0 381.1)" fill="#3068ba" opacity="0.85"/><ellipse cx="590.6" cy="379.8" rx="3.8" ry="2.6" transform="rotate(130 590.6 379.8)" fill="#2458a6" opacity="0.85"/><ellipse cx="601.9" cy="386.9" rx="2.5" ry="1.6" transform="rotate(36 601.9 386.9)" fill="#3068ba" opacity="0.85"/><ellipse cx="571.8" cy="389.3" rx="2.9" ry="1.5" transform="rotate(125 571.8 389.3)" fill="#2458a6" opacity="0.85"/><ellipse cx="555.3" cy="380.6" rx="3.5" ry="2.4" transform="rotate(133 555.3 380.6)" fill="#2d66b8" opacity="0.85"/><ellipse cx="582.9" cy="408.3" rx="3.6" ry="2.1" transform="rotate(161 582.9 408.3)" fill="#3068ba" opacity="0.85"/><ellipse cx="569.5" cy="385.7" rx="3.1" ry="1.4" transform="rotate(130 569.5 385.7)" fill="#2d66b8" opacity="0.85"/><ellipse cx="570.0" cy="358.0" rx="2.6" ry="1.7" transform="rotate(149 570.0 358.0)" fill="#2458a6" opacity="0.85"/><ellipse cx="543.6" cy="413.9" rx="4.5" ry="2.7" transform="rotate(166 543.6 413.9)" fill="#2458a6" opacity="0.85"/><ellipse cx="567.3" cy="389.0" rx="4.2" ry="2.1" transform="rotate(147 567.3 389.0)" fill="#2458a6" opacity="0.85"/><ellipse cx="567.4" cy="384.4" rx="3.5" ry="2.1" transform="rotate(1 567.4 384.4)" fill="#2d66b8" opacity="0.85"/><ellipse cx="576.1" cy="377.7" rx="3.9" ry="2.3" transform="rotate(164 576.1 377.7)" fill="#3068ba" opacity="0.85"/><ellipse cx="571.4" cy="410.5" rx="4.3" ry="2.7" transform="rotate(65 571.4 410.5)" fill="#2a60b0" opacity="0.85"/><ellipse cx="565.6" cy="403.6" rx="4.0" ry="2.6" transform="rotate(175 565.6 403.6)" fill="#2458a6" opacity="0.85"/><ellipse cx="583.3" cy="373.8" rx="3.5" ry="2.1" transform="rotate(137 583.3 373.8)" fill="#3570c2" opacity="0.85"/><ellipse cx="591.2" cy="390.6" rx="3.1" ry="1.9" transform="rotate(159 591.2 390.6)" fill="#3570c2" opacity="0.85"/><ellipse cx="571.9" cy="374.0" rx="2.9" ry="1.9" transform="rotate(151 571.9 374.0)" fill="#3068ba" opacity="0.85"/><ellipse cx="538.5" cy="385.1" rx="4.6" ry="3.2" transform="rotate(145 538.5 385.1)" fill="#2458a6" opacity="0.85"/><ellipse cx="576.5" cy="394.4" rx="3.8" ry="2.2" transform="rotate(174 576.5 394.4)" fill="#2458a6" opacity="0.85"/><ellipse cx="570.3" cy="389.7" rx="4.3" ry="2.7" transform="rotate(152 570.3 389.7)" fill="#2d66b8" opacity="0.85"/><ellipse cx="549.8" cy="376.7" rx="2.4" ry="1.4" transform="rotate(120 549.8 376.7)" fill="#3570c2" opacity="0.85"/><ellipse cx="572.3" cy="394.6" rx="3.0" ry="1.9" transform="rotate(14 572.3 394.6)" fill="#2d66b8" opacity="0.85"/><ellipse cx="562.4" cy="397.8" rx="2.7" ry="1.6" transform="rotate(74 562.4 397.8)" fill="#3570c2" opacity="0.85"/><ellipse cx="557.4" cy="390.2" rx="3.6" ry="2.2" transform="rotate(171 557.4 390.2)" fill="#2d66b8" opacity="0.85"/><ellipse cx="587.2" cy="390.9" rx="2.6" ry="1.7" transform="rotate(74 587.2 390.9)" fill="#2458a6" opacity="0.85"/><ellipse cx="588.3" cy="371.9" rx="4.0" ry="2.1" transform="rotate(35 588.3 371.9)" fill="#2458a6" opacity="0.85"/><ellipse cx="586.4" cy="363.7" rx="2.6" ry="1.3" transform="rotate(7 586.4 363.7)" fill="#2a60b0" opacity="0.85"/><ellipse cx="571.9" cy="408.5" rx="3.4" ry="1.7" transform="rotate(145 571.9 408.5)" fill="#2d66b8" opacity="0.85"/><ellipse cx="568.9" cy="395.5" rx="2.5" ry="1.4" transform="rotate(3 568.9 395.5)" fill="#3068ba" opacity="0.85"/><ellipse cx="565.6" cy="403.5" rx="4.0" ry="2.7" transform="rotate(62 565.6 403.5)" fill="#2458a6" opacity="0.85"/><ellipse cx="534.7" cy="316.9" rx="3.5" ry="2.1" transform="rotate(96 534.7 316.9)" fill="#2a60b0" opacity="0.85"/><ellipse cx="547.3" cy="316.3" rx="3.1" ry="1.9" transform="rotate(76 547.3 316.3)" fill="#2d66b8" opacity="0.85"/><ellipse cx="552.1" cy="337.4" rx="3.5" ry="2.3" transform="rotate(130 552.1 337.4)" fill="#2d66b8" opacity="0.85"/><ellipse cx="535.4" cy="324.5" rx="3.2" ry="2.0" transform="rotate(131 535.4 324.5)" fill="#2d66b8" opacity="0.85"/><ellipse cx="529.2" cy="318.7" rx="3.3" ry="1.8" transform="rotate(109 529.2 318.7)" fill="#2458a6" opacity="0.85"/><ellipse cx="544.4" cy="308.2" rx="3.0" ry="2.0" transform="rotate(80 544.4 308.2)" fill="#2d66b8" opacity="0.85"/><ellipse cx="535.4" cy="317.6" rx="3.9" ry="1.8" transform="rotate(43 535.4 317.6)" fill="#2458a6" opacity="0.85"/><ellipse cx="572.7" cy="315.0" rx="2.5" ry="1.3" transform="rotate(55 572.7 315.0)" fill="#2458a6" opacity="0.85"/><ellipse cx="553.1" cy="317.3" rx="3.6" ry="2.3" transform="rotate(151 553.1 317.3)" fill="#2d66b8" opacity="0.85"/><ellipse cx="512.7" cy="317.1" rx="3.9" ry="2.6" transform="rotate(25 512.7 317.1)" fill="#2458a6" opacity="0.85"/><ellipse cx="557.5" cy="321.4" rx="3.8" ry="2.0" transform="rotate(152 557.5 321.4)" fill="#3570c2" opacity="0.85"/><ellipse cx="541.0" cy="319.1" rx="2.9" ry="2.0" transform="rotate(172 541.0 319.1)" fill="#2d66b8" opacity="0.85"/><ellipse cx="527.9" cy="314.3" rx="4.1" ry="2.1" transform="rotate(143 527.9 314.3)" fill="#3570c2" opacity="0.85"/><ellipse cx="539.5" cy="325.9" rx="4.3" ry="2.6" transform="rotate(38 539.5 325.9)" fill="#2458a6" opacity="0.85"/><ellipse cx="542.8" cy="323.6" rx="4.5" ry="2.3" transform="rotate(112 542.8 323.6)" fill="#2458a6" opacity="0.85"/><ellipse cx="519.2" cy="318.6" rx="3.0" ry="1.7" transform="rotate(96 519.2 318.6)" fill="#3068ba" opacity="0.85"/><ellipse cx="527.2" cy="319.8" rx="4.2" ry="2.0" transform="rotate(119 527.2 319.8)" fill="#2458a6" opacity="0.85"/><ellipse cx="523.2" cy="317.5" rx="3.4" ry="2.0" transform="rotate(104 523.2 317.5)" fill="#3570c2" opacity="0.85"/><ellipse cx="547.9" cy="312.3" rx="3.9" ry="1.9" transform="rotate(141 547.9 312.3)" fill="#2a60b0" opacity="0.85"/><ellipse cx="530.2" cy="321.1" rx="4.5" ry="2.6" transform="rotate(39 530.2 321.1)" fill="#3068ba" opacity="0.85"/><ellipse cx="536.9" cy="311.3" rx="4.4" ry="2.2" transform="rotate(126 536.9 311.3)" fill="#2a60b0" opacity="0.85"/><ellipse cx="548.5" cy="316.3" rx="4.2" ry="2.2" transform="rotate(158 548.5 316.3)" fill="#3068ba" opacity="0.85"/><ellipse cx="523.0" cy="319.6" rx="3.2" ry="2.0" transform="rotate(79 523.0 319.6)" fill="#3570c2" opacity="0.85"/><ellipse cx="557.6" cy="308.4" rx="2.8" ry="1.5" transform="rotate(138 557.6 308.4)" fill="#2d66b8" opacity="0.85"/><ellipse cx="547.2" cy="320.1" rx="3.9" ry="2.2" transform="rotate(165 547.2 320.1)" fill="#3570c2" opacity="0.85"/><ellipse cx="539.5" cy="324.1" rx="3.0" ry="2.0" transform="rotate(1 539.5 324.1)" fill="#3068ba" opacity="0.85"/><ellipse cx="538.6" cy="303.6" rx="3.0" ry="1.9" transform="rotate(53 538.6 303.6)" fill="#3068ba" opacity="0.85"/><ellipse cx="561.4" cy="318.2" rx="2.9" ry="1.4" transform="rotate(4 561.4 318.2)" fill="#3570c2" opacity="0.85"/><ellipse cx="525.8" cy="309.5" rx="3.8" ry="2.5" transform="rotate(111 525.8 309.5)" fill="#3068ba" opacity="0.85"/><ellipse cx="537.6" cy="305.2" rx="2.8" ry="1.4" transform="rotate(135 537.6 305.2)" fill="#2d66b8" opacity="0.85"/><ellipse cx="548.5" cy="308.9" rx="4.3" ry="2.0" transform="rotate(38 548.5 308.9)" fill="#2d66b8" opacity="0.85"/><ellipse cx="531.4" cy="336.1" rx="2.7" ry="1.5" transform="rotate(29 531.4 336.1)" fill="#2a60b0" opacity="0.85"/><ellipse cx="554.1" cy="325.2" rx="4.2" ry="2.2" transform="rotate(98 554.1 325.2)" fill="#2d66b8" opacity="0.85"/><ellipse cx="551.8" cy="320.1" rx="4.0" ry="2.8" transform="rotate(23 551.8 320.1)" fill="#3570c2" opacity="0.85"/><ellipse cx="536.6" cy="322.7" rx="3.9" ry="1.9" transform="rotate(153 536.6 322.7)" fill="#2d66b8" opacity="0.85"/><ellipse cx="522.8" cy="311.8" rx="3.6" ry="2.4" transform="rotate(29 522.8 311.8)" fill="#2d66b8" opacity="0.85"/><ellipse cx="539.1" cy="320.0" rx="3.9" ry="1.8" transform="rotate(115 539.1 320.0)" fill="#2458a6" opacity="0.85"/><ellipse cx="529.3" cy="324.5" rx="4.4" ry="2.7" transform="rotate(117 529.3 324.5)" fill="#2458a6" opacity="0.85"/><ellipse cx="504.2" cy="323.7" rx="2.8" ry="1.6" transform="rotate(173 504.2 323.7)" fill="#3068ba" opacity="0.85"/><ellipse cx="532.3" cy="324.0" rx="3.1" ry="2.0" transform="rotate(40 532.3 324.0)" fill="#3570c2" opacity="0.85"/><ellipse cx="540.1" cy="326.3" rx="2.9" ry="1.4" transform="rotate(15 540.1 326.3)" fill="#3570c2" opacity="0.85"/><ellipse cx="514.1" cy="322.6" rx="3.5" ry="1.7" transform="rotate(127 514.1 322.6)" fill="#2d66b8" opacity="0.85"/><ellipse cx="545.0" cy="318.8" rx="3.1" ry="1.5" transform="rotate(152 545.0 318.8)" fill="#2458a6" opacity="0.85"/><ellipse cx="521.0" cy="313.0" rx="4.6" ry="2.7" transform="rotate(24 521.0 313.0)" fill="#2458a6" opacity="0.85"/><ellipse cx="555.5" cy="330.0" rx="4.1" ry="2.6" transform="rotate(48 555.5 330.0)" fill="#2458a6" opacity="0.85"/><ellipse cx="537.6" cy="326.1" rx="3.8" ry="2.6" transform="rotate(138 537.6 326.1)" fill="#2d66b8" opacity="0.85"/><ellipse cx="536.9" cy="320.3" rx="3.1" ry="2.1" transform="rotate(173 536.9 320.3)" fill="#2a60b0" opacity="0.85"/><ellipse cx="523.5" cy="323.1" rx="2.6" ry="1.5" transform="rotate(156 523.5 323.1)" fill="#2d66b8" opacity="0.85"/><ellipse cx="525.6" cy="309.2" rx="3.6" ry="2.3" transform="rotate(98 525.6 309.2)" fill="#3068ba" opacity="0.85"/><ellipse cx="540.2" cy="325.2" rx="4.5" ry="2.6" transform="rotate(127 540.2 325.2)" fill="#3570c2" opacity="0.85"/><ellipse cx="523.3" cy="322.5" rx="3.3" ry="1.5" transform="rotate(0 523.3 322.5)" fill="#3068ba" opacity="0.85"/><ellipse cx="544.6" cy="316.2" rx="3.7" ry="1.9" transform="rotate(178 544.6 316.2)" fill="#3068ba" opacity="0.85"/><ellipse cx="543.3" cy="318.6" rx="3.3" ry="1.6" transform="rotate(122 543.3 318.6)" fill="#3570c2" opacity="0.85"/><ellipse cx="533.5" cy="305.8" rx="3.7" ry="1.7" transform="rotate(143 533.5 305.8)" fill="#2458a6" opacity="0.85"/><ellipse cx="511.0" cy="312.4" rx="2.6" ry="1.5" transform="rotate(140 511.0 312.4)" fill="#2a60b0" opacity="0.85"/><ellipse cx="545.8" cy="315.8" rx="3.4" ry="2.1" transform="rotate(4 545.8 315.8)" fill="#2a60b0" opacity="0.85"/><ellipse cx="527.2" cy="316.9" rx="2.6" ry="1.4" transform="rotate(102 527.2 316.9)" fill="#2d66b8" opacity="0.85"/><ellipse cx="527.3" cy="322.9" rx="4.2" ry="2.7" transform="rotate(136 527.3 322.9)" fill="#3570c2" opacity="0.85"/><ellipse cx="554.9" cy="322.1" rx="2.9" ry="1.7" transform="rotate(44 554.9 322.1)" fill="#3068ba" opacity="0.85"/><ellipse cx="528.6" cy="333.0" rx="4.3" ry="3.0" transform="rotate(21 528.6 333.0)" fill="#2d66b8" opacity="0.85"/><ellipse cx="316.6" cy="224.7" rx="4.2" ry="2.9" transform="rotate(111 316.6 224.7)" fill="#3570c2" opacity="0.85"/><ellipse cx="302.8" cy="230.0" rx="3.8" ry="2.0" transform="rotate(34 302.8 230.0)" fill="#2a60b0" opacity="0.85"/><ellipse cx="303.6" cy="235.3" rx="3.7" ry="2.3" transform="rotate(94 303.6 235.3)" fill="#3068ba" opacity="0.85"/><ellipse cx="307.8" cy="231.1" rx="2.8" ry="1.5" transform="rotate(39 307.8 231.1)" fill="#3570c2" opacity="0.85"/><ellipse cx="316.5" cy="224.1" rx="2.9" ry="1.7" transform="rotate(112 316.5 224.1)" fill="#3068ba" opacity="0.85"/><ellipse cx="308.4" cy="227.0" rx="3.5" ry="2.2" transform="rotate(99 308.4 227.0)" fill="#3570c2" opacity="0.85"/><ellipse cx="301.4" cy="232.0" rx="2.9" ry="1.9" transform="rotate(161 301.4 232.0)" fill="#3570c2" opacity="0.85"/><ellipse cx="298.3" cy="225.2" rx="3.6" ry="2.5" transform="rotate(76 298.3 225.2)" fill="#2458a6" opacity="0.85"/><ellipse cx="292.1" cy="251.2" rx="3.6" ry="2.1" transform="rotate(172 292.1 251.2)" fill="#3068ba" opacity="0.85"/><ellipse cx="312.5" cy="226.8" rx="4.1" ry="2.2" transform="rotate(60 312.5 226.8)" fill="#2a60b0" opacity="0.85"/><ellipse cx="299.3" cy="220.4" rx="3.4" ry="1.6" transform="rotate(24 299.3 220.4)" fill="#3068ba" opacity="0.85"/><ellipse cx="315.0" cy="222.0" rx="4.3" ry="2.3" transform="rotate(129 315.0 222.0)" fill="#2458a6" opacity="0.85"/><ellipse cx="301.6" cy="245.1" rx="3.1" ry="2.0" transform="rotate(42 301.6 245.1)" fill="#2458a6" opacity="0.85"/><ellipse cx="300.2" cy="219.4" rx="3.3" ry="1.5" transform="rotate(88 300.2 219.4)" fill="#2a60b0" opacity="0.85"/><ellipse cx="295.9" cy="238.3" rx="4.3" ry="2.7" transform="rotate(35 295.9 238.3)" fill="#3068ba" opacity="0.85"/><ellipse cx="306.2" cy="215.8" rx="3.5" ry="2.3" transform="rotate(89 306.2 215.8)" fill="#2d66b8" opacity="0.85"/><ellipse cx="291.8" cy="240.9" rx="2.7" ry="1.6" transform="rotate(122 291.8 240.9)" fill="#2458a6" opacity="0.85"/><ellipse cx="307.8" cy="227.8" rx="2.6" ry="1.7" transform="rotate(89 307.8 227.8)" fill="#2458a6" opacity="0.85"/><ellipse cx="295.2" cy="223.5" rx="3.4" ry="1.7" transform="rotate(168 295.2 223.5)" fill="#2a60b0" opacity="0.85"/><ellipse cx="305.4" cy="231.9" rx="4.1" ry="2.2" transform="rotate(48 305.4 231.9)" fill="#2a60b0" opacity="0.85"/><ellipse cx="306.6" cy="232.9" rx="4.3" ry="2.0" transform="rotate(56 306.6 232.9)" fill="#2458a6" opacity="0.85"/><ellipse cx="314.9" cy="214.7" rx="2.5" ry="1.4" transform="rotate(145 314.9 214.7)" fill="#3068ba" opacity="0.85"/><ellipse cx="304.8" cy="241.6" rx="4.3" ry="2.5" transform="rotate(75 304.8 241.6)" fill="#2d66b8" opacity="0.85"/><ellipse cx="301.5" cy="235.5" rx="4.1" ry="2.3" transform="rotate(167 301.5 235.5)" fill="#3068ba" opacity="0.85"/><ellipse cx="306.2" cy="231.1" rx="2.8" ry="1.7" transform="rotate(46 306.2 231.1)" fill="#2458a6" opacity="0.85"/><ellipse cx="313.6" cy="225.6" rx="2.5" ry="1.7" transform="rotate(36 313.6 225.6)" fill="#2d66b8" opacity="0.85"/><ellipse cx="308.9" cy="235.5" rx="4.0" ry="2.3" transform="rotate(25 308.9 235.5)" fill="#2d66b8" opacity="0.85"/><ellipse cx="294.3" cy="210.3" rx="3.7" ry="2.6" transform="rotate(104 294.3 210.3)" fill="#2a60b0" opacity="0.85"/><ellipse cx="299.1" cy="238.5" rx="3.6" ry="2.2" transform="rotate(61 299.1 238.5)" fill="#2d66b8" opacity="0.85"/><ellipse cx="293.9" cy="211.7" rx="4.0" ry="2.4" transform="rotate(109 293.9 211.7)" fill="#3068ba" opacity="0.85"/><ellipse cx="306.7" cy="242.3" rx="3.4" ry="1.6" transform="rotate(52 306.7 242.3)" fill="#2d66b8" opacity="0.85"/><ellipse cx="301.5" cy="239.6" rx="3.8" ry="2.4" transform="rotate(158 301.5 239.6)" fill="#2458a6" opacity="0.85"/><ellipse cx="295.6" cy="236.2" rx="3.2" ry="2.1" transform="rotate(78 295.6 236.2)" fill="#3570c2" opacity="0.85"/><ellipse cx="299.0" cy="246.8" rx="2.4" ry="1.5" transform="rotate(39 299.0 246.8)" fill="#3068ba" opacity="0.85"/><ellipse cx="292.1" cy="260.0" rx="3.1" ry="2.0" transform="rotate(129 292.1 260.0)" fill="#3068ba" opacity="0.85"/><ellipse cx="418.9" cy="170.2" rx="3.8" ry="2.4" transform="rotate(176 418.9 170.2)" fill="#3068ba" opacity="0.85"/><ellipse cx="412.7" cy="169.2" rx="3.8" ry="2.4" transform="rotate(11 412.7 169.2)" fill="#2d66b8" opacity="0.85"/><ellipse cx="397.0" cy="176.7" rx="2.7" ry="1.2" transform="rotate(3 397.0 176.7)" fill="#2458a6" opacity="0.85"/><ellipse cx="428.3" cy="173.4" rx="3.4" ry="2.0" transform="rotate(174 428.3 173.4)" fill="#3570c2" opacity="0.85"/><ellipse cx="472.5" cy="167.3" rx="3.8" ry="2.2" transform="rotate(12 472.5 167.3)" fill="#2458a6" opacity="0.85"/><ellipse cx="434.5" cy="180.0" rx="2.7" ry="1.8" transform="rotate(142 434.5 180.0)" fill="#3570c2" opacity="0.85"/><ellipse cx="459.0" cy="177.0" rx="4.4" ry="2.9" transform="rotate(58 459.0 177.0)" fill="#3570c2" opacity="0.85"/><ellipse cx="444.0" cy="171.3" rx="3.1" ry="2.0" transform="rotate(114 444.0 171.3)" fill="#2d66b8" opacity="0.85"/><ellipse cx="426.2" cy="165.0" rx="4.0" ry="2.2" transform="rotate(109 426.2 165.0)" fill="#2d66b8" opacity="0.85"/><ellipse cx="412.5" cy="175.0" rx="4.2" ry="2.2" transform="rotate(87 412.5 175.0)" fill="#2a60b0" opacity="0.85"/><ellipse cx="407.1" cy="174.8" rx="3.2" ry="1.6" transform="rotate(85 407.1 174.8)" fill="#2d66b8" opacity="0.85"/><ellipse cx="427.4" cy="164.3" rx="3.2" ry="1.9" transform="rotate(5 427.4 164.3)" fill="#2d66b8" opacity="0.85"/><ellipse cx="426.4" cy="173.7" rx="3.1" ry="1.4" transform="rotate(158 426.4 173.7)" fill="#2a60b0" opacity="0.85"/><ellipse cx="441.1" cy="168.9" rx="2.7" ry="1.8" transform="rotate(41 441.1 168.9)" fill="#2a60b0" opacity="0.85"/><ellipse cx="420.4" cy="163.7" rx="3.8" ry="1.8" transform="rotate(135 420.4 163.7)" fill="#3570c2" opacity="0.85"/><ellipse cx="412.4" cy="168.9" rx="3.8" ry="1.7" transform="rotate(69 412.4 168.9)" fill="#3570c2" opacity="0.85"/><ellipse cx="428.7" cy="169.5" rx="3.4" ry="1.9" transform="rotate(148 428.7 169.5)" fill="#3570c2" opacity="0.85"/><ellipse cx="440.2" cy="169.9" rx="2.9" ry="1.5" transform="rotate(83 440.2 169.9)" fill="#2a60b0" opacity="0.85"/><ellipse cx="423.8" cy="182.9" rx="3.0" ry="1.8" transform="rotate(51 423.8 182.9)" fill="#2a60b0" opacity="0.85"/><ellipse cx="419.6" cy="168.3" rx="3.2" ry="1.7" transform="rotate(71 419.6 168.3)" fill="#2458a6" opacity="0.85"/><ellipse cx="413.9" cy="171.6" rx="4.3" ry="2.0" transform="rotate(121 413.9 171.6)" fill="#2d66b8" opacity="0.85"/><ellipse cx="452.3" cy="170.7" rx="2.7" ry="1.4" transform="rotate(87 452.3 170.7)" fill="#3570c2" opacity="0.85"/><ellipse cx="422.2" cy="155.5" rx="3.3" ry="2.0" transform="rotate(176 422.2 155.5)" fill="#3068ba" opacity="0.85"/><ellipse cx="418.1" cy="170.6" rx="3.0" ry="2.1" transform="rotate(4 418.1 170.6)" fill="#3068ba" opacity="0.85"/><ellipse cx="456.5" cy="165.0" rx="2.5" ry="1.5" transform="rotate(137 456.5 165.0)" fill="#2d66b8" opacity="0.85"/><ellipse cx="443.8" cy="173.0" rx="3.1" ry="1.6" transform="rotate(176 443.8 173.0)" fill="#2d66b8" opacity="0.85"/><ellipse cx="459.2" cy="169.9" rx="3.1" ry="2.0" transform="rotate(66 459.2 169.9)" fill="#3570c2" opacity="0.85"/><ellipse cx="420.2" cy="173.0" rx="3.3" ry="1.9" transform="rotate(179 420.2 173.0)" fill="#2a60b0" opacity="0.85"/><ellipse cx="434.2" cy="167.0" rx="2.9" ry="1.4" transform="rotate(151 434.2 167.0)" fill="#2a60b0" opacity="0.85"/><ellipse cx="396.6" cy="174.7" rx="4.1" ry="2.5" transform="rotate(175 396.6 174.7)" fill="#3068ba" opacity="0.85"/><ellipse cx="475.4" cy="163.3" rx="3.3" ry="1.5" transform="rotate(96 475.4 163.3)" fill="#2458a6" opacity="0.85"/><ellipse cx="416.6" cy="179.0" rx="2.5" ry="1.4" transform="rotate(28 416.6 179.0)" fill="#2a60b0" opacity="0.85"/><ellipse cx="449.7" cy="170.5" rx="3.9" ry="2.4" transform="rotate(141 449.7 170.5)" fill="#3570c2" opacity="0.85"/><ellipse cx="433.9" cy="166.9" rx="3.9" ry="2.5" transform="rotate(102 433.9 166.9)" fill="#3068ba" opacity="0.85"/><ellipse cx="438.1" cy="163.8" rx="3.5" ry="2.2" transform="rotate(86 438.1 163.8)" fill="#3570c2" opacity="0.85"/><ellipse cx="411.5" cy="178.3" rx="3.9" ry="2.1" transform="rotate(68 411.5 178.3)" fill="#2d66b8" opacity="0.85"/><ellipse cx="415.7" cy="173.5" rx="3.7" ry="1.7" transform="rotate(78 415.7 173.5)" fill="#2458a6" opacity="0.85"/><ellipse cx="424.6" cy="176.6" rx="4.1" ry="2.1" transform="rotate(167 424.6 176.6)" fill="#2a60b0" opacity="0.85"/><ellipse cx="424.3" cy="161.2" rx="3.3" ry="1.6" transform="rotate(136 424.3 161.2)" fill="#2458a6" opacity="0.85"/><ellipse cx="454.1" cy="163.8" rx="3.5" ry="2.0" transform="rotate(39 454.1 163.8)" fill="#2a60b0" opacity="0.85"/><ellipse cx="438.9" cy="160.2" rx="3.5" ry="1.8" transform="rotate(77 438.9 160.2)" fill="#3068ba" opacity="0.85"/><ellipse cx="430.4" cy="171.6" rx="4.1" ry="2.5" transform="rotate(111 430.4 171.6)" fill="#2a60b0" opacity="0.85"/><ellipse cx="420.1" cy="178.0" rx="4.1" ry="2.4" transform="rotate(67 420.1 178.0)" fill="#2d66b8" opacity="0.85"/><ellipse cx="429.6" cy="170.5" rx="3.6" ry="2.2" transform="rotate(161 429.6 170.5)" fill="#3570c2" opacity="0.85"/><ellipse cx="409.2" cy="170.4" rx="4.5" ry="2.3" transform="rotate(80 409.2 170.4)" fill="#3570c2" opacity="0.85"/><ellipse cx="418.6" cy="182.3" rx="2.9" ry="1.8" transform="rotate(28 418.6 182.3)" fill="#3068ba" opacity="0.85"/><ellipse cx="467.1" cy="169.3" rx="3.8" ry="2.0" transform="rotate(101 467.1 169.3)" fill="#3068ba" opacity="0.85"/><ellipse cx="444.5" cy="166.1" rx="2.9" ry="1.5" transform="rotate(90 444.5 166.1)" fill="#2458a6" opacity="0.85"/><ellipse cx="415.7" cy="165.2" rx="2.8" ry="1.3" transform="rotate(115 415.7 165.2)" fill="#2a60b0" opacity="0.85"/><ellipse cx="425.1" cy="165.6" rx="2.5" ry="1.6" transform="rotate(9 425.1 165.6)" fill="#2458a6" opacity="0.85"/><ellipse cx="428.8" cy="164.7" rx="4.0" ry="2.2" transform="rotate(134 428.8 164.7)" fill="#2d66b8" opacity="0.85"/><ellipse cx="422.8" cy="168.9" rx="3.3" ry="2.1" transform="rotate(125 422.8 168.9)" fill="#3570c2" opacity="0.85"/><ellipse cx="485.2" cy="170.8" rx="3.3" ry="2.2" transform="rotate(111 485.2 170.8)" fill="#3570c2" opacity="0.85"/><ellipse cx="427.6" cy="169.6" rx="3.3" ry="2.0" transform="rotate(112 427.6 169.6)" fill="#3068ba" opacity="0.85"/><ellipse cx="415.5" cy="170.5" rx="2.6" ry="1.7" transform="rotate(35 415.5 170.5)" fill="#2a60b0" opacity="0.85"/><ellipse cx="427.1" cy="176.8" rx="2.8" ry="1.5" transform="rotate(169 427.1 176.8)" fill="#2a60b0" opacity="0.85"/><ellipse cx="446.3" cy="172.2" rx="3.6" ry="1.9" transform="rotate(142 446.3 172.2)" fill="#3570c2" opacity="0.85"/><ellipse cx="400.5" cy="165.7" rx="2.5" ry="1.5" transform="rotate(24 400.5 165.7)" fill="#2d66b8" opacity="0.85"/><ellipse cx="428.1" cy="173.2" rx="3.3" ry="2.1" transform="rotate(18 428.1 173.2)" fill="#2d66b8" opacity="0.85"/><ellipse cx="459.5" cy="161.6" rx="4.5" ry="3.1" transform="rotate(6 459.5 161.6)" fill="#3570c2" opacity="0.85"/><polygon points="292,248 298,220 318,198 345,180 378,167 410,162 445,166 478,172 510,182 538,198 558,216 568,240 572,268 563,290 540,300 505,290 470,282 440,290 420,286 395,290 370,286 350,305 342,330 322,338 300,332 292,300" fill="#2a5eae" opacity="0.3" filter="url(#b1)"/><path d="M371.7 262.4l14.6 -6.2" stroke="#3068ba" stroke-width="1"/><path d="M437.9 166.5l-10.6 7.2" stroke="#3068ba" stroke-width="1"/><path d="M449.5 206.7l-6.6 4.7" stroke="#3068ba" stroke-width="1"/><path d="M491.1 184.2l-4.9 -6.6" stroke="#3068ba" stroke-width="1"/><path d="M481.8 267.1l8.1 7.2" stroke="#3068ba" stroke-width="1"/><path d="M402.4 215.0l6.0 -9.0" stroke="#3068ba" stroke-width="1"/><path d="M314.8 299.2l11.5 -9.2" stroke="#3068ba" stroke-width="1"/><path d="M533.9 331.6l-2.4 -13.1" stroke="#3068ba" stroke-width="1"/><path d="M487.5 250.9l-6.3 4.9" stroke="#3068ba" stroke-width="1"/><path d="M299.8 222.4l-6.9 -3.8" stroke="#3068ba" stroke-width="1"/><path d="M458.4 250.7l-2.4 -13.2" stroke="#3068ba" stroke-width="1"/><path d="M336.3 212.3l-1.4 -15.6" stroke="#3068ba" stroke-width="1"/><path d="M568.1 404.7l13.3 -7.9" stroke="#3068ba" stroke-width="1"/><path d="M431.3 167.6l10.4 7.5" stroke="#3068ba" stroke-width="1"/><path d="M556.1 247.4l7.0 -0.8" stroke="#3068ba" stroke-width="1"/><path d="M370.9 262.7l-9.0 -5.4" stroke="#3068ba" stroke-width="1"/><path d="M304.3 230.3l-5.8 -8.7" stroke="#3068ba" stroke-width="1"/><path d="M395.5 234.6l14.1 1.4" stroke="#3068ba" stroke-width="1"/><path d="M557.3 256.7l8.5 8.5" stroke="#3068ba" stroke-width="1"/><path d="M498.9 263.6l5.6 -3.4" stroke="#3068ba" stroke-width="1"/><path d="M490.0 185.2l-10.0 9.1" stroke="#3068ba" stroke-width="1"/><path d="M504.9 274.8l-10.2 -2.6" stroke="#3068ba" stroke-width="1"/><path d="M540.5 261.0l0.3 -9.6" stroke="#3068ba" stroke-width="1"/><path d="M304.9 233.7l-6.2 4.5" stroke="#3068ba" stroke-width="1"/><path d="M557.4 255.9l-15.9 -1.4" stroke="#3068ba" stroke-width="1"/><path d="M408.8 262.8l10.8 6.3" stroke="#3068ba" stroke-width="1"/><path d="M527.2 304.3l11.9 -1.3" stroke="#3068ba" stroke-width="1"/><path d="M337.2 253.2l6.0 -8.4" stroke="#3068ba" stroke-width="1"/><path d="M312.3 280.8l6.6 2.2" stroke="#3068ba" stroke-width="1"/><path d="M352.6 219.0l8.2 -3.9" stroke="#3068ba" stroke-width="1"/><path d="M453.7 187.0l9.7 5.6" stroke="#3068ba" stroke-width="1"/><path d="M561.4 386.2l9.7 -3.3" stroke="#3068ba" stroke-width="1"/><path d="M317.6 287.1l5.4 -4.0" stroke="#3068ba" stroke-width="1"/><path d="M540.1 319.5l-9.0 10.4" stroke="#3068ba" stroke-width="1"/><path d="M515.3 271.2l14.3 -5.3" stroke="#3068ba" stroke-width="1"/><path d="M514.7 212.6l-14.3 4.9" stroke="#3068ba" stroke-width="1"/><path d="M298.5 218.8l2.4 6.5" stroke="#3068ba" stroke-width="1"/><path d="M492.1 282.8l-3.9 9.0" stroke="#3068ba" stroke-width="1"/><path d="M441.0 197.5l-7.0 3.4" stroke="#3068ba" stroke-width="1"/><path d="M539.7 206.6l-6.8 9.9" stroke="#3068ba" stroke-width="1"/><path d="M448.1 240.1l-4.8 -11.5" stroke="#3068ba" stroke-width="1"/><path d="M543.2 316.8l7.8 -4.1" stroke="#3068ba" stroke-width="1"/><path d="M333.1 268.8l6.4 4.3" stroke="#3068ba" stroke-width="1"/><path d="M505.8 261.8l-7.4 -6.9" stroke="#3068ba" stroke-width="1"/><path d="M346.7 251.5l-4.9 14.1" stroke="#3068ba" stroke-width="1"/><path d="M541.9 382.0l-2.4 7.7" stroke="#3068ba" stroke-width="1"/><path d="M314.9 278.1l2.3 12.3" stroke="#3068ba" stroke-width="1"/><path d="M518.6 284.9l3.3 5.2" stroke="#3068ba" stroke-width="1"/><path d="M536.0 194.9l-10.7 3.8" stroke="#3068ba" stroke-width="1"/><path d="M498.1 246.8l13.2 7.1" stroke="#3068ba" stroke-width="1"/><path d="M417.0 222.8l-8.7 10.4" stroke="#3068ba" stroke-width="1"/><path d="M554.2 254.7l13.4 -8.7" stroke="#3068ba" stroke-width="1"/><path d="M477.1 236.1l-3.0 12.5" stroke="#3068ba" stroke-width="1"/><path d="M333.4 266.7l8.4 4.9" stroke="#3068ba" stroke-width="1"/><path d="M571.3 381.8l-8.6 -12.9" stroke="#3068ba" stroke-width="1"/><path d="M313.1 281.7l-1.2 -8.0" stroke="#3068ba" stroke-width="1"/><path d="M428.6 167.3l-7.8 -1.3" stroke="#3068ba" stroke-width="1"/><path d="M529.5 312.6l-5.9 -5.2" stroke="#3068ba" stroke-width="1"/><path d="M543.5 278.1l-6.0 -12.7" stroke="#3068ba" stroke-width="1"/><path d="M525.7 211.7l-11.0 1.5" stroke="#3068ba" stroke-width="1"/></g></g>
<g stroke="#a0bce0" stroke-width="3.2" fill="none" opacity="0.75" filter="url(#glow)"><text x="0" y="0" transform="translate(24 107) scale(2.561 1)" font-family="Liberation Serif" font-weight="bold" font-size="25.8">E</text><text x="0" y="0" transform="translate(69 107) scale(2.474 1)" font-family="Liberation Serif" font-weight="bold" font-size="25.8">C</text><text x="0" y="0" transform="translate(116 111) scale(2.227 1)" font-family="Liberation Serif" font-weight="bold" font-size="40.9">M</text><text x="0" y="0" transform="translate(196 107) scale(2.420 1)" font-family="Liberation Serif" font-weight="bold" font-size="25.8">A</text><text x="0" y="0" transform="translate(241 107) scale(3.352 1)" font-family="Liberation Serif" font-weight="bold" font-size="25.8">S</text><text x="0" y="0" transform="translate(287 107) scale(2.723 1)" font-family="Liberation Serif" font-weight="bold" font-size="25.8">S</text><text x="0" y="0" transform="translate(356 109) scale(2.066 1)" font-family="Liberation Serif" font-weight="bold" font-size="34.8">F</text><text x="0" y="0" transform="translate(400 107) scale(2.837 1)" font-family="Liberation Serif" font-weight="bold" font-size="22.7">L</text><text x="0" y="0" transform="translate(443 107) scale(2.864 1)" font-family="Liberation Serif" font-weight="bold" font-size="22.7">U</text><text x="0" y="0" transform="translate(490 107) scale(2.499 1)" font-family="Liberation Serif" font-weight="bold" font-size="22.7">X</text></g>
<g fill="url(#lg)"><text x="0" y="0" transform="translate(24 107) scale(2.561 1)" font-family="Liberation Serif" font-weight="bold" font-size="25.8">E</text><text x="0" y="0" transform="translate(69 107) scale(2.474 1)" font-family="Liberation Serif" font-weight="bold" font-size="25.8">C</text><text x="0" y="0" transform="translate(116 111) scale(2.227 1)" font-family="Liberation Serif" font-weight="bold" font-size="40.9">M</text><text x="0" y="0" transform="translate(196 107) scale(2.420 1)" font-family="Liberation Serif" font-weight="bold" font-size="25.8">A</text><text x="0" y="0" transform="translate(241 107) scale(3.352 1)" font-family="Liberation Serif" font-weight="bold" font-size="25.8">S</text><text x="0" y="0" transform="translate(287 107) scale(2.723 1)" font-family="Liberation Serif" font-weight="bold" font-size="25.8">S</text><text x="0" y="0" transform="translate(356 109) scale(2.066 1)" font-family="Liberation Serif" font-weight="bold" font-size="34.8">F</text><text x="0" y="0" transform="translate(400 107) scale(2.837 1)" font-family="Liberation Serif" font-weight="bold" font-size="22.7">L</text><text x="0" y="0" transform="translate(443 107) scale(2.864 1)" font-family="Liberation Serif" font-weight="bold" font-size="22.7">U</text><text x="0" y="0" transform="translate(490 107) scale(2.499 1)" font-family="Liberation Serif" font-weight="bold" font-size="22.7">X</text></g>
</svg></div>
<div class="a pn" style="left:5px;top:854px;width:150px;height:15px;"></div>
<div class="t" style="left:9px;top:856px;color:#000;">Total Incoming IM: 0</div>
<div class="a pn" style="left:157px;top:854px;width:128px;height:15px;"></div>
<div class="t" style="left:161px;top:856px;color:#000;">Total Warns: 0</div>
<div class="a pn" style="left:287px;top:854px;width:128px;height:15px;"></div>
<div class="t" style="left:291px;top:856px;color:#000;">Total errors: 0</div>
<div class="a pn" style="left:417px;top:854px;width:95px;height:15px;"></div>
<div class="t" style="left:421px;top:856px;color:#000;">Total Ad Msgs: 0</div>
<div class="a pn" style="left:514px;top:854px;width:95px;height:15px;"></div>
<div class="t" style="left:518px;top:856px;color:#000;">Auto K's: 0</div>
<div class="a pn" style="left:611px;top:854px;width:115px;height:15px;"></div>
<div class="t" style="left:615px;top:856px;color:#000;">Bots Online: 0</div>
<div class="a pn" style="left:728px;top:854px;width:95px;height:15px;"></div>
<div class="t" style="left:732px;top:856px;color:#000;">Loaded: 5</div>
<svg class="a" style="left:1406px;top:859px" width="9" height="9" shape-rendering="crispEdges"><path d="M0 8h1v1h-1zM1 7h1v1h-1zM2 6h1v1h-1zM3 5h1v1h-1zM3 8h1v1h-1zM4 4h1v1h-1zM4 7h1v1h-1zM5 3h1v1h-1zM5 6h1v1h-1zM6 2h1v1h-1zM6 5h1v1h-1zM6 8h1v1h-1zM7 1h1v1h-1zM7 4h1v1h-1zM7 7h1v1h-1zM8 0h1v1h-1zM8 3h1v1h-1zM8 6h1v1h-1z" fill="#fff"/><path d="M1 8h1v1h-1zM2 7h1v1h-1zM2 8h1v1h-1zM3 6h1v1h-1zM3 7h1v1h-1zM4 5h1v1h-1zM4 6h1v1h-1zM4 8h1v1h-1zM5 4h1v1h-1zM5 5h1v1h-1zM5 7h1v1h-1zM5 8h1v1h-1zM6 3h1v1h-1zM6 4h1v1h-1zM6 6h1v1h-1zM6 7h1v1h-1zM7 2h1v1h-1zM7 3h1v1h-1zM7 5h1v1h-1zM7 6h1v1h-1zM7 8h1v1h-1zM8 1h1v1h-1zM8 2h1v1h-1zM8 4h1v1h-1zM8 5h1v1h-1zM8 7h1v1h-1zM8 8h1v1h-1z" fill="#808080"/></svg>
<div class="a fr" style="left:6px;top:568px;width:861px;height:284px;"></div>
<div class="a " style="left:10px;top:572px;width:853px;height:18px;background:linear-gradient(to right,#0a246a,#a6caf0)"></div>
<svg class="a" style="left:12px;top:573px" width="16" height="16" viewBox="0 0 16 16"><path d="M0.5 8.5L8 1.5l7.5 7-1.6 1.2L8 4.3 2.1 9.7z" fill="#d8924a" stroke="#b8702a" stroke-width="0.8"/><path d="M3 9l5-4.5 5 4.5v6H3z" fill="#f6f6f6"/><path d="M3 9.5V15" stroke="#8a8a8a"/><ellipse cx="3.2" cy="14.2" rx="3" ry="1.8" fill="#4aa83a"/><path d="M6 9.5h5v-2.5l5 4.5-5 4.5v-2.5h-5z" fill="#4cb43c" stroke="#24891a" stroke-width="1" stroke-linejoin="round"/><path d="M7 10.7h4.5v-1.6l2.6 2.4-2.6 2.4v-1.6h-4.5z" fill="#a8dc98" opacity="0.8"/></svg>
<div class="t" style="left:29px;top:575px;font-weight:bold;letter-spacing:0.45px;color:#fff;">Screenname Login</div>
<div class="a rz" style="left:811px;top:574px;width:16px;height:14px;"><i class="mn"></i></div>
<div class="a rz" style="left:827px;top:574px;width:16px;height:14px;"><i class="mx"></i></div>
<div class="a rz" style="left:845px;top:574px;width:16px;height:14px;"><svg class="cl" width="16" height="14" shape-rendering="crispEdges"><path d="M4 3h2v1h-2zM10 3h2v1h-2zM5 4h2v1h-2zM9 4h2v1h-2zM6 5h4v1h-4zM7 6h2v1h-2zM6 7h4v1h-4zM5 8h2v1h-2zM9 8h2v1h-2zM4 9h2v1h-2zM10 9h2v1h-2z" fill="#000"/></svg></div>
<div class="a " style="left:10px;top:591px;width:853px;height:1px;background:#808080"></div>
<div class="a " style="left:10px;top:592px;width:853px;height:1px;background:#ffffff"></div>
<div class="a rz" style="left:10px;top:595px;width:79px;height:36px;"></div>
<svg class="a" style="left:41px;top:598px" width="16" height="16" viewBox="0 0 16 16"><path d="M1.5 3.5h6l1 1.5h6.5v9h-13.5z" fill="#fff8d8" stroke="#e8a028"/><path d="M3 6.5h3.5l1-1H13v1.5H3z" fill="#f4d880"/><path d="M3 8.5h10v4H3z" fill="#f4d040"/></svg>
<div class="t" style="left:9px;width:78px;text-align:center;top:616px;color:#000;">Import Options</div>
<div class="a rz" style="left:89px;top:595px;width:79px;height:36px;"></div>
<svg class="a" style="left:120px;top:598px" width="16" height="16" viewBox="0 0 16 16"><path d="M1.5 0.5h13v10h-13z" fill="#f4f4f4" stroke="#8a8a8a"/><path d="M3 2h10v7H3z" fill="#5a88d0"/><path d="M4 3h8v5H4z" fill="#88b0e8"/><path d="M6 11h3v1H6z" fill="#a0a0a0"/><path d="M3.5 12.5h6v2h-6z" fill="#fff" stroke="#8a8a8a"/><circle cx="12.3" cy="12.3" r="3.5" fill="#3a9a2a"/><path d="M12.3 10v4.6M10 12.3h4.6" stroke="#fff" stroke-width="1.4"/></svg>
<div class="t" style="left:88px;width:78px;text-align:center;top:616px;color:#000;">Start Login</div>
<div class="a rz" style="left:168px;top:595px;width:79px;height:36px;"></div>
<svg class="a" style="left:199px;top:598px" width="16" height="16" viewBox="0 0 16 16"><path d="M5 1h6l4 4v6l-4 4H5l-4-4V5z" fill="#f00808"/><path d="M5.4 2.2h5.2l3.2 3.2v5.2l-3.2 3.2H5.4l-3.2-3.2V5.4z" fill="#e82020" stroke="#ff6a5a" stroke-width="0.6"/><path d="M5 5l6 6M11 5l-6 6" stroke="#fff" stroke-width="2.3"/></svg>
<div class="t" style="left:167px;width:78px;text-align:center;top:616px;color:#000;">Kill</div>
<div class="a sk" style="left:15px;top:640px;width:841px;height:185px;"></div>
<div class="a rz" style="left:17px;top:642px;width:248px;height:17px;"></div>
<div class="t" style="left:22px;top:645px;color:#000;">Screenname</div>
<div class="a rz" style="left:265px;top:642px;width:115px;height:17px;"></div>
<div class="t" style="left:270px;top:645px;color:#000;">Status</div>
<div class="a rz" style="left:380px;top:642px;width:115px;height:17px;"></div>
<div class="t" style="left:385px;top:645px;color:#000;">Last Error(s)</div>
<div class="a rz" style="left:495px;top:642px;width:115px;height:17px;"></div>
<div class="t" style="left:500px;top:645px;color:#000;">Incoming IM</div>
<div class="a rz" style="left:610px;top:642px;width:115px;height:17px;"></div>
<div class="t" style="left:615px;top:645px;color:#000;">Warns</div>
<div class="a rz" style="left:725px;top:642px;width:82px;height:17px;"></div>
<div class="t" style="left:730px;top:645px;color:#000;">Socket Index</div>
<div class="a rz" style="left:807px;top:642px;width:47px;height:17px;"></div>
<div class="a pn" style="left:10px;top:833px;width:230px;height:15px;"></div>
<div class="t" style="left:14px;top:835px;color:#000;">Action: Idle</div>
<div class="a pn" style="left:242px;top:833px;width:348px;height:15px;"></div>
<div class="t" style="left:246px;top:835px;color:#000;">Current Server:</div>
<svg class="a" style="left:853px;top:838px" width="9" height="9" shape-rendering="crispEdges"><path d="M0 8h1v1h-1zM1 7h1v1h-1zM2 6h1v1h-1zM3 5h1v1h-1zM3 8h1v1h-1zM4 4h1v1h-1zM4 7h1v1h-1zM5 3h1v1h-1zM5 6h1v1h-1zM6 2h1v1h-1zM6 5h1v1h-1zM6 8h1v1h-1zM7 1h1v1h-1zM7 4h1v1h-1zM7 7h1v1h-1zM8 0h1v1h-1zM8 3h1v1h-1zM8 6h1v1h-1z" fill="#fff"/><path d="M1 8h1v1h-1zM2 7h1v1h-1zM2 8h1v1h-1zM3 6h1v1h-1zM3 7h1v1h-1zM4 5h1v1h-1zM4 6h1v1h-1zM4 8h1v1h-1zM5 4h1v1h-1zM5 5h1v1h-1zM5 7h1v1h-1zM5 8h1v1h-1zM6 3h1v1h-1zM6 4h1v1h-1zM6 6h1v1h-1zM6 7h1v1h-1zM7 2h1v1h-1zM7 3h1v1h-1zM7 5h1v1h-1zM7 6h1v1h-1zM7 8h1v1h-1zM8 1h1v1h-1zM8 2h1v1h-1zM8 4h1v1h-1zM8 5h1v1h-1zM8 7h1v1h-1zM8 8h1v1h-1z" fill="#808080"/></svg>
<div class="a fr" style="left:954px;top:70px;width:392px;height:389px;"></div>
<div class="a " style="left:957px;top:73px;width:386px;height:18px;background:linear-gradient(to right,#808080,#c0c0c0)"></div>
<svg class="a" style="left:959px;top:74px" width="16" height="16" viewBox="0 0 16 16"><path d="M4 8.5L1 11.2v2.8h2.2L4 15.5h8l0.8-1.5H15v-2.8L12 8.5z" fill="#1a48c0"/><path d="M4.8 9.5L3 11.5 4.5 14.5h7l1.5-3-1.8-2z" fill="#5ab0f8"/><path d="M1 11.5h2.2v2.5H1zM12.8 11.5H15v2.5h-2.2z" fill="#e8902c"/><rect x="3.8" y="1" width="8.4" height="8.5" rx="2.6" fill="#a05818"/><path d="M5 4.2h2.5l0.8-0.8 0.5 0.8H11v3.8l-1.5 1.6h-3L5 8z" fill="#f8d4a8"/></svg>
<div class="t" style="left:976px;top:76px;font-weight:bold;letter-spacing:0.45px;color:#d4d0c8;">ICBM Module</div>
<div class="a rz" style="left:1291px;top:75px;width:16px;height:14px;"><i class="mn"></i></div>
<div class="a rz" style="left:1307px;top:75px;width:16px;height:14px;"><i class="mxd"></i></div>
<div class="a rz" style="left:1325px;top:75px;width:16px;height:14px;"><svg class="cl" width="16" height="14" shape-rendering="crispEdges"><path d="M4 3h2v1h-2zM10 3h2v1h-2zM5 4h2v1h-2zM9 4h2v1h-2zM6 5h4v1h-4zM7 6h2v1h-2zM6 7h4v1h-4zM5 8h2v1h-2zM9 8h2v1h-2zM4 9h2v1h-2zM10 9h2v1h-2z" fill="#000"/></svg></div>
<div class="t" style="left:965px;top:109px;font-weight:bold;letter-spacing:0.45px;color:#000;">Victim:</div>
<div class="a sk" style="left:1061px;top:108px;width:273px;height:19px;"></div>
<div class="t" style="left:965px;top:133px;font-weight:bold;letter-spacing:0.45px;color:#000;">Flood Ops:</div>
<div class="a sk" style="left:1061px;top:132px;width:273px;height:21px;overflow:hidden"></div>
<svg class="a" style="left:0;top:0" width="1316" height="150" shape-rendering="crispEdges"><path d="M1065 142h7v1h-7zM1065 144h7v1h-7zM1073 142h7v1h-7zM1073 144h7v1h-7zM1081 142h7v1h-7zM1081 144h7v1h-7zM1089 142h7v1h-7zM1089 144h7v1h-7zM1097 142h7v1h-7zM1097 144h7v1h-7zM1105 142h7v1h-7zM1105 144h7v1h-7zM1113 142h7v1h-7zM1113 144h7v1h-7zM1121 142h7v1h-7zM1121 144h7v1h-7zM1129 142h7v1h-7zM1129 144h7v1h-7zM1137 142h7v1h-7zM1137 144h7v1h-7zM1145 142h7v1h-7zM1145 144h7v1h-7zM1153 142h7v1h-7zM1153 144h7v1h-7zM1203 142h7v1h-7zM1203 144h7v1h-7zM1211 142h7v1h-7zM1211 144h7v1h-7zM1219 142h7v1h-7zM1219 144h7v1h-7zM1227 142h7v1h-7zM1227 144h7v1h-7zM1235 142h7v1h-7zM1235 144h7v1h-7zM1243 142h7v1h-7zM1243 144h7v1h-7zM1251 142h7v1h-7zM1251 144h7v1h-7zM1259 142h7v1h-7zM1259 144h7v1h-7zM1267 142h7v1h-7zM1267 144h7v1h-7zM1275 142h7v1h-7zM1275 144h7v1h-7zM1283 142h7v1h-7zM1283 144h7v1h-7zM1291 142h7v1h-7zM1291 144h7v1h-7zM1299 142h7v1h-7zM1299 144h7v1h-7zM1307 142h7v1h-7zM1307 144h7v1h-7zM1315 142h7v1h-7zM1315 144h7v1h-7z" fill="#000"/></svg>
<div class="t" style="left:1160px;top:137px;color:#000;letter-spacing:-0.2px">Low Risk</div>
<div class="a fr" style="left:1316px;top:134px;width:16px;height:17px;"><svg class="cl" width="16" height="17" shape-rendering="crispEdges"><path d="M4 6h7v1H4zM5 7h5v1H5zM6 8h3v1H6zM7 9h1v1H7z" fill="#000"/></svg></div>
<div class="t" style="left:965px;top:157px;font-weight:bold;letter-spacing:0.45px;color:#000;">Threads:</div>
<div class="a sk" style="left:1061px;top:156px;width:65px;height:21px;"></div>
<div class="a fr" style="left:1108px;top:158px;width:16px;height:17px;"><svg class="cl" width="16" height="17" shape-rendering="crispEdges"><path d="M4 6h7v1H4zM5 7h5v1H5zM6 8h3v1H6zM7 9h1v1H7z" fill="#000"/></svg></div>
<div class="t" style="left:1065px;top:161px;color:#000;">7</div>
<div class="t" style="left:965px;top:189px;font-weight:bold;letter-spacing:0.45px;color:#000;">Speed rate:</div>
<div class="a " style="left:1061px;top:189px;width:265px;height:1px;background:#808080"></div>
<div class="a " style="left:1061px;top:190px;width:265px;height:1px;background:#404040"></div>
<div class="a " style="left:1061px;top:191px;width:265px;height:1px;background:#d4d0c8"></div>
<div class="a " style="left:1061px;top:192px;width:265px;height:1px;background:#ffffff"></div>
<div class="a " style="left:1325px;top:189px;width:1px;height:4px;background:#ffffff"></div>
<svg class="a" style="left:1264px;top:182px" width="11" height="21"><path d="M0.5 15.5V0.5h9" fill="none" stroke="#fff"/><path d="M0 0h10v15.5L5 20.5 0 15.5z" fill="#d4d0c8" transform="translate(1 1) scale(0.82 0.92)"/><path d="M10.5 0v15.7l-5 5" fill="none" stroke="#404040"/><path d="M9.5 1v14.3l-4.3 4.3" fill="none" stroke="#808080"/><path d="M0.5 15.5l4.7 4.7" fill="none" stroke="#fff"/></svg>
<div class="t" style="left:1061px;top:205px;color:#ff0000;">Slower</div>
<div class="t" style="left:1293px;top:205px;color:#008000;">Faster</div>
<div class="t" style="left:965px;top:229px;font-weight:bold;letter-spacing:0.45px;color:#000;">Progress:</div>
<div class="a pn" style="left:1061px;top:228px;width:273px;height:17px;"></div>
<div class="a " style="left:965px;top:259px;width:361px;height:1px;background:#a8a8a8"></div>
<div class="a " style="left:965px;top:260px;width:361px;height:1px;background:#ffffff"></div>
<div class="a rz" style="left:965px;top:270px;width:68px;height:35px;"></div>
<svg class="a" style="left:991px;top:273px" width="16" height="16" viewBox="0 0 16 16"><path d="M3 13L13.2 2.8" stroke="#d89838" stroke-width="5" stroke-linecap="round"/><path d="M3.2 12.8L13 3" stroke="#fcee98" stroke-width="2.8"/><path d="M11.8 2.2l2 2" stroke="#fcd8b8" stroke-width="3.2" stroke-linecap="round"/><path d="M0.8 15.2l1.2-4 2.8 2.8z" fill="#f8d0a8" stroke="#a86a30" stroke-width="0.6"/><path d="M0.6 15.4l0.6-1.8 1.2 1.2z" fill="#402000"/><path d="M6 9.5h5v-2.5l5 4.5-5 4.5v-2.5h-5z" fill="#4cb43c" stroke="#24891a" stroke-width="1" stroke-linejoin="round"/><path d="M7 10.7h4.5v-1.6l2.6 2.4-2.6 2.4v-1.6h-4.5z" fill="#a8dc98" opacity="0.8"/></svg>
<div class="t" style="left:965px;width:67px;text-align:center;top:291px;color:#000;">Send Thread</div>
<div class="a rz" style="left:1033px;top:270px;width:68px;height:35px;"></div>
<svg class="a" style="left:1059px;top:273px" width="16" height="16" viewBox="0 0 16 16"><path d="M0.5 1.5h10v12h-6v1.5H2v-1.5H0.5z" fill="#1c4c98"/><path d="M1.5 2.5h8v8H1.5z" fill="#fff"/><path d="M3.5 3.5v6" stroke="#a0a0a0" stroke-width="1.2"/><path d="M1 3.5h1.5M1 5.5h1.5M1 7.5h1.5" stroke="#ccc"/><path d="M1 12.3h9" stroke="#5a88c8"/><path d="M6 6h5v-2.5l5 4.5-5 4.5v-2.5h-5z" fill="#4cb43c" stroke="#24891a" stroke-width="1" stroke-linejoin="round"/><path d="M7 7.2h4.5v-1.6l2.6 2.4-2.6 2.4v-1.6h-4.5z" fill="#a8dc98" opacity="0.8"/></svg>
<div class="t" style="left:1033px;width:67px;text-align:center;top:291px;color:#000;">Check Info</div>
<div class="a rz" style="left:1101px;top:270px;width:68px;height:35px;"></div>
<svg class="a" style="left:1127px;top:273px" width="16" height="16" viewBox="0 0 16 16"><path d="M1.5 1.5h9.5v6H5.5L3 10.5V7.5H1.5z" fill="#eef4fc" stroke="#4a80c8" stroke-linejoin="round"/><path d="M5.5 5h10v6.5h-4.5L8.5 15v-3.5h-3z" fill="#eef4fc" stroke="#4a80c8" stroke-linejoin="round"/></svg>
<div class="t" style="left:1101px;width:67px;text-align:center;top:291px;color:#000;">Clear Que</div>
<div class="a rz" style="left:1169px;top:270px;width:68px;height:35px;"></div>
<svg class="a" style="left:1195px;top:273px" width="16" height="16" viewBox="0 0 16 16"><path d="M1.5 1.5h12v12h-12z" fill="#fff8e0" stroke="#ec9838"/><path d="M3 3.5h9v6H3z" fill="#f4dc78"/><path d="M2.5 10l4 3" stroke="#ec9838"/><path d="M6 9.5h5v-2.5l5 4.5-5 4.5v-2.5h-5z" fill="#4cb43c" stroke="#24891a" stroke-width="1" stroke-linejoin="round"/><path d="M7 10.7h4.5v-1.6l2.6 2.4-2.6 2.4v-1.6h-4.5z" fill="#a8dc98" opacity="0.8"/></svg>
<div class="t" style="left:1169px;width:67px;text-align:center;top:291px;color:#000;">Save Que</div>
<div class="a rz" style="left:1237px;top:270px;width:68px;height:35px;"></div>
<svg class="a" style="left:1263px;top:273px" width="16" height="16" viewBox="0 0 16 16"><path d="M0.5 5.5h14v10.5H0.5z" fill="#fff8d8" stroke="#e8a028"/><path d="M2 7.5h4l1 1.5h6v5.5H2z" fill="#f4d860"/><path d="M5 6.5l2-1h6.5l2 1V11H5z" fill="#2a5cd0"/><path d="M6.5 6h6v4h-6z" fill="#68b8f8"/><path d="M7.3 0.5h4.4l1 1v4h-6.4v-4z" fill="#9a5418"/><path d="M7.8 2.2h3.6v3.3H7.8z" fill="#f4cca0"/><path d="M15 8h1.5v3H15z" fill="#e88a28"/></svg>
<div class="t" style="left:1237px;width:67px;text-align:center;top:291px;color:#000;">Load Que</div>
<div class="a " style="left:965px;top:315px;width:361px;height:1px;background:#a8a8a8"></div>
<div class="a " style="left:965px;top:316px;width:361px;height:1px;background:#ffffff"></div>
<div class="a sk" style="left:966px;top:325px;width:366px;height:103px;"></div>
<div class="a rz" style="left:968px;top:327px;width:148px;height:17px;"></div>
<div class="t" style="left:973px;top:330px;color:#000;">Screen name</div>
<div class="a rz" style="left:1116px;top:327px;width:115px;height:17px;"></div>
<div class="t" style="left:1121px;top:330px;color:#000;">Last Que Time</div>
<div class="a rz" style="left:1231px;top:327px;width:55px;height:17px;"></div>
<div class="t" style="left:1236px;top:330px;color:#000;">X's</div>
<div class="a rz" style="left:1286px;top:327px;width:44px;height:17px;"></div>
<div class="a pn" style="left:957px;top:441px;width:164px;height:15px;"></div>
<div class="t" style="left:961px;top:443px;color:#000;">Status:</div>
<div class="a pn" style="left:1123px;top:441px;width:82px;height:15px;"></div>
<div class="t" style="left:1127px;top:443px;color:#000;">Out: 0</div>
<div class="a pn" style="left:1207px;top:441px;width:82px;height:15px;"></div>
<div class="t" style="left:1211px;top:443px;color:#000;">In: 0</div>
<div class="a fr" style="left:961px;top:458px;width:319px;height:354px;"></div>
<div class="a " style="left:964px;top:461px;width:313px;height:18px;background:linear-gradient(to right,#808080,#c0c0c0)"></div>
<svg class="a" style="left:966px;top:462px" width="16" height="16" viewBox="0 0 16 16"><path d="M0.5 1.5h15v11h-15z" fill="#eaf2fc" stroke="#2858b8"/><path d="M1 2l7 6 7-6" fill="none" stroke="#7aa0dc"/><path d="M5 10h5v-2.5l5 4.5-5 4.5v-2.5h-5z" fill="#4cb43c" stroke="#24891a" stroke-width="1" stroke-linejoin="round"/><path d="M6 11.2h4.5v-1.6l2.6 2.4-2.6 2.4v-1.6h-4.5z" fill="#a8dc98" opacity="0.8"/></svg>
<div class="t" style="left:983px;top:464px;font-weight:bold;letter-spacing:0.45px;color:#d4d0c8;">Chat Ad Module</div>
<div class="a rz" style="left:1225px;top:463px;width:16px;height:14px;"><i class="mn"></i></div>
<div class="a rz" style="left:1241px;top:463px;width:16px;height:14px;"><i class="mxd"></i></div>
<div class="a rz" style="left:1259px;top:463px;width:16px;height:14px;"><svg class="cl" width="16" height="14" shape-rendering="crispEdges"><path d="M4 3h2v1h-2zM10 3h2v1h-2zM5 4h2v1h-2zM9 4h2v1h-2zM6 5h4v1h-4zM7 6h2v1h-2zM6 7h4v1h-4zM5 8h2v1h-2zM9 8h2v1h-2zM4 9h2v1h-2zM10 9h2v1h-2z" fill="#000"/></svg></div>
<div class="a " style="left:972px;top:494px;width:296px;height:138px;border:1px solid #808080;box-sizing:border-box"></div>
<div class="a " style="left:973px;top:495px;width:296px;height:138px;border:1px solid #ffffff;box-sizing:border-box"></div>
<div class="a " style="left:978px;top:488px;width:73px;height:13px;background:#d4d0c8"></div>
<div class="t" style="left:981px;top:489px;font-weight:bold;letter-spacing:0.45px;color:#000;">Ad Message</div>
<div class="a sk" style="left:980px;top:504px;width:281px;height:118px;"></div>
<div class="a rz" style="left:972px;top:640px;width:65px;height:25px;"></div>
<div class="t" style="left:972px;width:64px;text-align:center;top:646px;color:#000;">Load</div>
<div class="a rz" style="left:1044px;top:640px;width:65px;height:25px;"></div>
<div class="t" style="left:1044px;width:64px;text-align:center;top:646px;color:#000;">Clear</div>
<svg class="a" style="left:1116px;top:641px" width="16" height="16" viewBox="0 0 16 16"><path d="M8 1v14M2 4.5l12 7M2 11.5l12-7" stroke="#f0a028" stroke-width="2.6" stroke-linecap="round"/><path d="M8 2v12M3 5l10 6M3 11l10-6" stroke="#fcd070" stroke-width="1"/></svg>
<div class="t" style="left:1139px;top:649px;color:#ff0000;">Load messages from file</div>
<div class="a " style="left:972px;top:679px;width:297px;height:1px;background:#a8a8a8"></div>
<div class="a " style="left:972px;top:680px;width:297px;height:1px;background:#ffffff"></div>
<div class="t" style="right:330px;top:689px;color:#000">Room:</div>
<div class="a sk" style="left:1108px;top:688px;width:153px;height:19px;"></div>
<div class="t" style="right:216px;top:713px;color:#000">Exchange:</div>
<div class="a sk" style="left:1212px;top:712px;width:49px;height:21px;"></div>
<div class="a fr" style="left:1243px;top:714px;width:16px;height:17px;"><svg class="cl" width="16" height="17" shape-rendering="crispEdges"><path d="M4 6h7v1H4zM5 7h5v1H5zM6 8h3v1H6zM7 9h1v1H7z" fill="#000"/></svg></div>
<div class="t" style="left:1216px;top:717px;color:#000;">4</div>
<div class="t" style="right:216px;top:737px;color:#000">Message Interval:</div>
<div class="a sk" style="left:1212px;top:736px;width:49px;height:21px;"></div>
<div class="a fr" style="left:1243px;top:738px;width:16px;height:17px;"><svg class="cl" width="16" height="17" shape-rendering="crispEdges"><path d="M4 6h7v1H4zM5 7h5v1H5zM6 8h3v1H6zM7 9h1v1H7z" fill="#000"/></svg></div>
<div class="t" style="left:1216px;top:741px;color:#000;">15</div>
<div class="a rz" style="left:972px;top:768px;width:97px;height:25px;"></div>
<div class="t" style="left:972px;width:96px;text-align:center;top:774px;color:#000;">Remove Bot</div>
<div class="a rz" style="left:1076px;top:768px;width:105px;height:25px;"></div>
<div class="t" style="left:1076px;width:104px;text-align:center;top:774px;color:#000;">Join Single bot</div>
<div class="a rz" style="left:1188px;top:768px;width:73px;height:25px;"></div>
<div class="t" style="left:1188px;width:72px;text-align:center;top:774px;color:#000;">Enable</div>
</body></html>
